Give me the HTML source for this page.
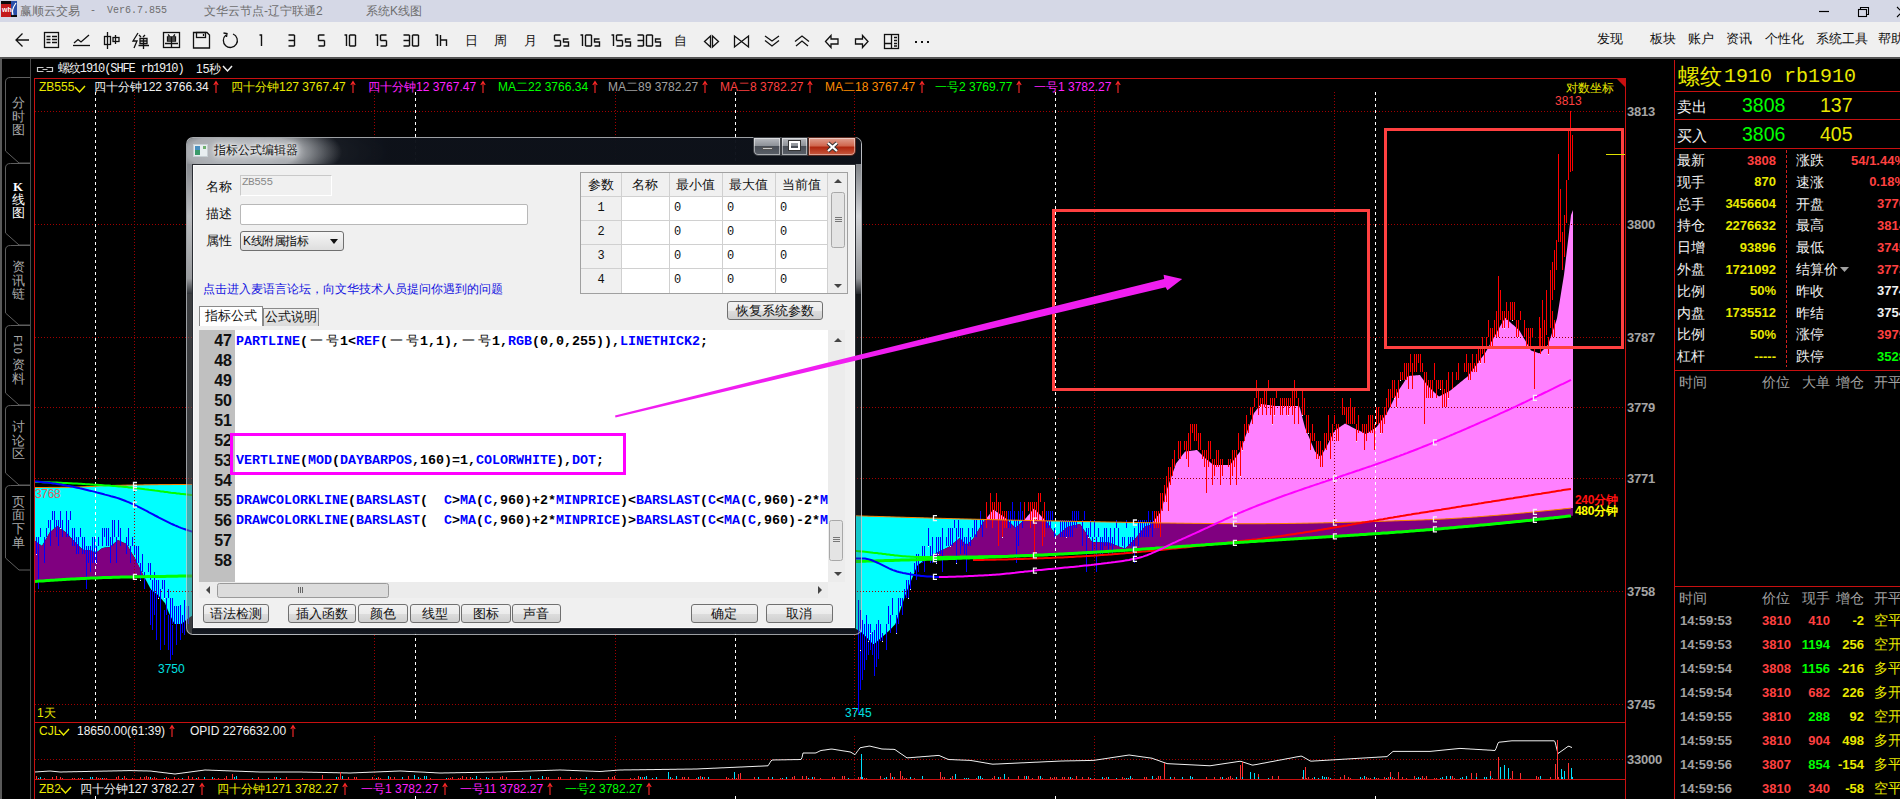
<!DOCTYPE html><html><head><meta charset="utf-8"><style>
*{margin:0;padding:0;box-sizing:border-box}
html,body{width:1900px;height:799px;overflow:hidden;background:#000;font-family:"Liberation Sans",sans-serif;position:relative}
.a{position:absolute;white-space:nowrap}
svg{position:absolute;left:0;top:0}
</style></head><body>

<div class="a" style="left:0;top:0;width:1900px;height:22px;background:#d5d8e6"></div>
<div class="a" style="left:0;top:22px;width:1900px;height:35px;background:#f0f0f0"></div>
<div class="a" style="left:0;top:57px;width:1900px;height:2px;background:#555"></div>
<div class="a" style="left:0;top:57px;width:2px;height:742px;background:#5a5a5a"></div>
<svg width="20" height="20" style="left:1px;top:1px"><rect x="0" y="0" width="16" height="16" fill="#0a0a0a"/>
<rect x="0" y="3" width="10" height="13" fill="#c41a1a"/><rect x="10" y="0" width="6" height="14" fill="#2a4fa8"/>
<text x="1" y="11" font-size="7" font-weight="bold" fill="#fff" font-family="Liberation Sans">wh</text>
<path d="M12 14 C10 9 13 5 15 2" stroke="#fff" stroke-width="1.2" fill="none"/></svg>
<div class="a" style="left:20px;top:3.0px;line-height:16px;font-size:12px;color:#6e6e6e;font-family:'Liberation Sans', sans-serif;font-weight:normal;">赢顺云交易</div>
<div class="a" style="left:90px;top:4.0px;line-height:14px;font-size:10px;color:#6e6e6e;font-family:'Liberation Mono', monospace;font-weight:normal;">-</div>
<div class="a" style="left:107px;top:4.0px;line-height:14px;font-size:10px;color:#6e6e6e;font-family:'Liberation Mono', monospace;font-weight:normal;">Ver6.7.855</div>
<div class="a" style="left:204px;top:3.0px;line-height:16px;font-size:12px;color:#6e6e6e;font-family:'Liberation Sans', sans-serif;font-weight:normal;">文华云节点-辽宁联通2</div>
<div class="a" style="left:366px;top:3.0px;line-height:16px;font-size:12px;color:#6e6e6e;font-family:'Liberation Sans', sans-serif;font-weight:normal;">系统K线图</div>
<svg width="90" height="22" style="left:1810px;top:0">
<line x1="9" y1="11.5" x2="19" y2="11.5" stroke="#000" stroke-width="1.2"/>
<rect x="48.5" y="9.5" width="8" height="7" fill="none" stroke="#000" stroke-width="1.1"/>
<path d="M50.5 9.5 V7.5 H58.5 V14.5 H56.5" fill="none" stroke="#000" stroke-width="1.1"/>
<path d="M87 7 L97 17 M97 7 L87 17" stroke="#000" stroke-width="1.1"/>
</svg>
<svg width="960" height="57" style="left:0;top:0"><path d="M16 40 H29 M22.5 33.5 L16 40 L22.5 46.5" stroke="#111" stroke-width="1.3" fill="none"/><rect x="44.5" y="32.5" width="14" height="15" stroke="#111" stroke-width="1.3" fill="none"/><path d="M46.5 36.5h4 M52 36.5h5 M46.5 39.5h4 M52 39.5h5 M46.5 42.5h4 M52 42.5h5" stroke="#111" stroke-width="1.3" fill="none"/><path d="M74 43 L78 39.5 L81 42 L89 35" stroke="#111" stroke-width="1.3" fill="none"/><path d="M73 45.5 H90" stroke="#111" stroke-width="1.3" fill="none"/><path d="M107.5 32 V49 M115.5 35 V44" stroke="#111" stroke-width="1.3" fill="none"/><rect x="104.5" y="36.5" width="6" height="8" stroke="#111" stroke-width="1.3" fill="none"/><rect x="113" y="37.5" width="6" height="4" stroke="#111" stroke-width="1.3" fill="none"/><path d="M138 33 L133 41 H137 L134 48" stroke="#111" stroke-width="1.3" fill="none"/><path d="M139 35 L141 37 M145 35 L143 37 M140 38.5h7v5h-7z M140 41h7 M143.5 38.5V49 M138.5 45.5H149" stroke="#111" stroke-width="1.3" fill="none"/><rect x="163.5" y="32.5" width="16" height="15" stroke="#111" stroke-width="1.3" fill="none"/><path d="M168 34.5 L169.5 36 M175 34.5 L173.5 36 M167.5 37h8v4h-8z M167.5 39h8 M171.5 37v10 M165 43.5h13" stroke="#111" stroke-width="1.3" fill="none"/><path d="M193.5 32.5 H207 L209.5 35 V48 H193.5 Z" stroke="#111" stroke-width="1.3" fill="none"/><rect x="196.5" y="32.5" width="9" height="5" stroke="#111" stroke-width="1.3" fill="none"/><path d="M203.5 34v2" stroke="#111" stroke-width="1.3" fill="none"/><path d="M226 35 A7 7 0 1 0 233 34" stroke="#111" stroke-width="1.3" fill="none"/><path d="M223.5 33 L227 33.5 L226.5 37" stroke="#111" stroke-width="1.3" fill="none"/></svg>
<svg width="960" height="57" style="left:0;top:0"><path d="M259.5 35 H261.5 V46M288.5 35 H294.5M294.5 35 V40.5M294.5 40.5 V46M288.5 46 H294.5M288.5 40.5 H294.5M318.5 35 H324.5M318.5 35 V40.5M318.5 40.5 H324.5M324.5 40.5 V46M318.5 46 H324.5M344.5 35 H346.5 V46M349.5 35 H355.5M355.5 35 V40.5M355.5 40.5 V46M349.5 46 H355.5M349.5 40.5 V46M349.5 35 V40.5M375.5 35 H377.5 V46M380.5 35 H386.5M380.5 35 V40.5M380.5 40.5 H386.5M386.5 40.5 V46M380.5 46 H386.5M403.5 35 H409.5M409.5 35 V40.5M409.5 40.5 V46M403.5 46 H409.5M403.5 40.5 H409.5M412.5 35 H418.5M418.5 35 V40.5M418.5 40.5 V46M412.5 46 H418.5M412.5 40.5 V46M412.5 35 V40.5M435.5 35 H437.5 V46M440.5 35 V46 M440.5 40 H446.5 V46M554.5 35 H560.5M554.5 35 V40.5M554.5 40.5 H560.5M560.5 40.5 V46M554.5 46 H560.5M568.5 39 H563.5 V42 H568.5 V46 H563.5M580.5 35 H582.5 V46M585.5 35 H591.5M591.5 35 V40.5M591.5 40.5 V46M585.5 46 H591.5M585.5 40.5 V46M585.5 35 V40.5M599.5 39 H594.5 V42 H599.5 V46 H594.5M611.5 35 H613.5 V46M616.5 35 H622.5M616.5 35 V40.5M616.5 40.5 H622.5M622.5 40.5 V46M616.5 46 H622.5M630.5 39 H625.5 V42 H630.5 V46 H625.5M637.5 35 H643.5M643.5 35 V40.5M643.5 40.5 V46M637.5 46 H643.5M637.5 40.5 H643.5M646.5 35 H652.5M652.5 35 V40.5M652.5 40.5 V46M646.5 46 H652.5M646.5 40.5 V46M646.5 35 V40.5M660.5 39 H655.5 V42 H660.5 V46 H655.5" stroke="#111" stroke-width="1.4" fill="none"/></svg>
<div class="a" style="left:465px;top:31.5px;line-height:17px;font-size:13px;color:#111;font-family:'Liberation Sans', sans-serif;font-weight:normal;">日</div>
<div class="a" style="left:494px;top:31.5px;line-height:17px;font-size:13px;color:#111;font-family:'Liberation Sans', sans-serif;font-weight:normal;">周</div>
<div class="a" style="left:524px;top:31.5px;line-height:17px;font-size:13px;color:#111;font-family:'Liberation Sans', sans-serif;font-weight:normal;">月</div>
<div class="a" style="left:674px;top:31.5px;line-height:17px;font-size:13px;color:#111;font-family:'Liberation Sans', sans-serif;font-weight:normal;">自</div>
<svg width="960" height="57" style="left:0;top:0"><path d="M710.5 36 L704.5 41.5 L710.5 47 Z M712.5 36 L718.5 41.5 L712.5 47 Z" stroke="#111" stroke-width="1.3" fill="none"/><path d="M734.5 36 V47 L741.5 41.5 Z M748.5 36 V47 L741.5 41.5 Z" stroke="#111" stroke-width="1.3" fill="none"/><path d="M765 36 L772 41 L779 36 M765 40.5 L772 46 L779 40.5" stroke="#111" stroke-width="1.3" fill="none"/><path d="M795 41.5 L802 36 L809 41.5 M796 46 L802 41 L808 46" stroke="#111" stroke-width="1.3" fill="none"/><path d="M825.5 41.5 L831 35.5 V39 H838 V44 H831 V47.5 Z" stroke="#111" stroke-width="1.3" fill="none"/><path d="M868 41.5 L862.5 35.5 V39 H855.5 V44 H862.5 V47.5 Z" stroke="#111" stroke-width="1.3" fill="none"/><rect x="884.5" y="34.5" width="14" height="14" stroke="#111" stroke-width="1.3" fill="none"/><path d="M891.5 34.5 V48.5 M884.5 43.5 H891.5 M894 37.5h3 M894 40.5h3 M894 43.5h3 M894 46h3" stroke="#111" stroke-width="1.3" fill="none"/><rect x="915" y="41" width="2" height="2" fill="#111"/><rect x="921" y="41" width="2" height="2" fill="#111"/><rect x="927" y="41" width="2" height="2" fill="#111"/></svg>
<div class="a" style="left:1597px;top:30.75px;line-height:16.5px;font-size:12.5px;color:#111;font-family:'Liberation Sans', sans-serif;font-weight:normal;">发现</div>
<div class="a" style="left:1650px;top:30.75px;line-height:16.5px;font-size:12.5px;color:#111;font-family:'Liberation Sans', sans-serif;font-weight:normal;">板块</div>
<div class="a" style="left:1688px;top:30.75px;line-height:16.5px;font-size:12.5px;color:#111;font-family:'Liberation Sans', sans-serif;font-weight:normal;">账户</div>
<div class="a" style="left:1726px;top:30.75px;line-height:16.5px;font-size:12.5px;color:#111;font-family:'Liberation Sans', sans-serif;font-weight:normal;">资讯</div>
<div class="a" style="left:1765px;top:30.75px;line-height:16.5px;font-size:12.5px;color:#111;font-family:'Liberation Sans', sans-serif;font-weight:normal;">个性化</div>
<div class="a" style="left:1816px;top:30.75px;line-height:16.5px;font-size:12.5px;color:#111;font-family:'Liberation Sans', sans-serif;font-weight:normal;">系统工具</div>
<div class="a" style="left:1878px;top:30.75px;line-height:16.5px;font-size:12.5px;color:#111;font-family:'Liberation Sans', sans-serif;font-weight:normal;">帮助</div>
<svg width="34" height="799" style="left:0;top:0"><path d="M5.5 151 V82 Q5.5 77.5 10.5 77.5 H30.5 V163 M5.5 151 L19 163 H30.5" stroke="#5e5e5e" stroke-width="1" fill="none"/><path d="M5.5 233 V168 Q5.5 163.5 10.5 163.5 H30.5 V245 M5.5 233 L19 245 H30.5" stroke="#5e5e5e" stroke-width="1" fill="none"/><path d="M5.5 313 V250 Q5.5 245.5 10.5 245.5 H30.5 V325 M5.5 313 L19 325 H30.5" stroke="#5e5e5e" stroke-width="1" fill="none"/><path d="M5.5 393 V330 Q5.5 325.5 10.5 325.5 H30.5 V405 M5.5 393 L19 405 H30.5" stroke="#5e5e5e" stroke-width="1" fill="none"/><path d="M5.5 473 V410 Q5.5 405.5 10.5 405.5 H30.5 V485 M5.5 473 L19 485 H30.5" stroke="#5e5e5e" stroke-width="1" fill="none"/><path d="M5.5 558 V490 Q5.5 485.5 10.5 485.5 H30.5 V570 M5.5 558 L19 570 H30.5" stroke="#5e5e5e" stroke-width="1" fill="none"/></svg>
<div class="a" style="left:29px;top:164px;width:3px;height:80px;background:#000"></div>
<div class="a" style="left:30px;top:59px;width:1px;height:740px;background:#4a4a4a"></div>
<div class="a" style="left:-182px;width:400px;text-align:center;top:96.0px;line-height:14px;font-size:13px;color:#a8a8a8;font-family:'Liberation Sans', sans-serif;font-weight:normal;">分</div><div class="a" style="left:-182px;width:400px;text-align:center;top:109.7px;line-height:14px;font-size:13px;color:#a8a8a8;font-family:'Liberation Sans', sans-serif;font-weight:normal;">时</div><div class="a" style="left:-182px;width:400px;text-align:center;top:123.4px;line-height:14px;font-size:13px;color:#a8a8a8;font-family:'Liberation Sans', sans-serif;font-weight:normal;">图</div>
<div class="a" style="left:-182px;width:400px;text-align:center;top:179.5px;line-height:14px;font-size:13px;color:#fff;font-family:'Liberation Serif', serif;font-weight:bold;">K</div>
<div class="a" style="left:-182px;width:400px;text-align:center;top:192.5px;line-height:14px;font-size:13px;color:#fff;font-family:'Liberation Sans', sans-serif;font-weight:normal;">线</div><div class="a" style="left:-182px;width:400px;text-align:center;top:206.2px;line-height:14px;font-size:13px;color:#fff;font-family:'Liberation Sans', sans-serif;font-weight:normal;">图</div>
<div class="a" style="left:-182px;width:400px;text-align:center;top:260.0px;line-height:14px;font-size:13px;color:#a8a8a8;font-family:'Liberation Sans', sans-serif;font-weight:normal;">资</div><div class="a" style="left:-182px;width:400px;text-align:center;top:273.7px;line-height:14px;font-size:13px;color:#a8a8a8;font-family:'Liberation Sans', sans-serif;font-weight:normal;">讯</div><div class="a" style="left:-182px;width:400px;text-align:center;top:287.4px;line-height:14px;font-size:13px;color:#a8a8a8;font-family:'Liberation Sans', sans-serif;font-weight:normal;">链</div>
<div class="a" style="left:11px;top:335px;width:14px;height:18px;writing-mode:vertical-rl;font-size:11px;line-height:14px;color:#a8a8a8;font-family:'Liberation Sans', sans-serif">F10</div>
<div class="a" style="left:-182px;width:400px;text-align:center;top:358.0px;line-height:14px;font-size:13px;color:#a8a8a8;font-family:'Liberation Sans', sans-serif;font-weight:normal;">资</div><div class="a" style="left:-182px;width:400px;text-align:center;top:371.7px;line-height:14px;font-size:13px;color:#a8a8a8;font-family:'Liberation Sans', sans-serif;font-weight:normal;">料</div>
<div class="a" style="left:-182px;width:400px;text-align:center;top:420.0px;line-height:14px;font-size:13px;color:#a8a8a8;font-family:'Liberation Sans', sans-serif;font-weight:normal;">讨</div><div class="a" style="left:-182px;width:400px;text-align:center;top:433.7px;line-height:14px;font-size:13px;color:#a8a8a8;font-family:'Liberation Sans', sans-serif;font-weight:normal;">论</div><div class="a" style="left:-182px;width:400px;text-align:center;top:447.4px;line-height:14px;font-size:13px;color:#a8a8a8;font-family:'Liberation Sans', sans-serif;font-weight:normal;">区</div>
<div class="a" style="left:-182px;width:400px;text-align:center;top:494.5px;line-height:14px;font-size:13px;color:#a8a8a8;font-family:'Liberation Sans', sans-serif;font-weight:normal;">页</div><div class="a" style="left:-182px;width:400px;text-align:center;top:508.20000000000005px;line-height:14px;font-size:13px;color:#a8a8a8;font-family:'Liberation Sans', sans-serif;font-weight:normal;">面</div><div class="a" style="left:-182px;width:400px;text-align:center;top:521.9px;line-height:14px;font-size:13px;color:#a8a8a8;font-family:'Liberation Sans', sans-serif;font-weight:normal;">下</div><div class="a" style="left:-182px;width:400px;text-align:center;top:535.6px;line-height:14px;font-size:13px;color:#a8a8a8;font-family:'Liberation Sans', sans-serif;font-weight:normal;">单</div>
<svg width="1900" height="799" style="left:0;top:0"><path d="M35.0 487.5 L36.0 487.5 L37.0 487.5 L38.0 487.5 L39.0 487.5 L40.0 487.5 L41.0 487.5 L42.0 487.5 L43.0 487.5 L44.0 487.5 L45.0 487.5 L46.0 487.5 L47.0 487.5 L48.0 487.5 L49.0 487.4 L50.0 487.4 L51.0 487.4 L52.0 487.4 L53.0 487.4 L54.0 487.4 L55.0 487.4 L56.0 487.4 L57.0 487.4 L58.0 487.4 L59.0 487.4 L60.0 487.3 L61.0 487.3 L62.0 487.3 L63.0 487.3 L64.0 487.3 L65.0 487.3 L66.0 487.3 L67.0 487.3 L68.0 487.2 L69.0 487.2 L70.0 487.2 L71.0 487.2 L72.0 487.1 L73.0 487.1 L74.0 487.1 L75.0 487.1 L76.0 487.0 L77.0 487.0 L78.0 487.0 L79.0 486.9 L80.0 486.9 L81.0 486.8 L82.0 486.8 L83.0 486.8 L84.0 486.7 L85.0 486.7 L86.0 486.7 L87.0 486.6 L88.0 486.6 L89.0 486.5 L90.0 486.5 L91.0 486.5 L92.0 486.4 L93.0 486.4 L94.0 486.3 L95.0 486.3 L96.0 486.2 L97.0 486.1 L98.0 486.1 L99.0 486.0 L100.0 486.0 L101.0 485.9 L102.0 485.8 L103.0 485.8 L104.0 485.7 L105.0 485.7 L106.0 485.6 L107.0 485.6 L108.0 485.6 L109.0 485.5 L110.0 485.5 L111.0 485.5 L112.0 485.5 L113.0 485.4 L114.0 485.4 L115.0 485.4 L116.0 485.4 L117.0 485.3 L118.0 485.3 L119.0 485.3 L120.0 485.3 L121.0 485.3 L122.0 485.2 L123.0 485.2 L124.0 485.2 L125.0 485.2 L126.0 485.2 L127.0 485.1 L128.0 485.1 L129.0 485.1 L130.0 485.1 L131.0 485.1 L132.0 485.0 L133.0 485.0 L134.0 485.0 L135.0 485.0 L136.0 485.0 L137.0 485.0 L138.0 484.9 L139.0 484.9 L140.0 484.9 L141.0 484.9 L142.0 484.9 L143.0 484.9 L144.0 484.8 L145.0 484.8 L146.0 484.8 L147.0 484.8 L148.0 484.8 L149.0 484.8 L150.0 484.8 L151.0 484.7 L152.0 484.7 L153.0 484.7 L154.0 484.7 L155.0 484.7 L156.0 484.7 L157.0 484.7 L158.0 484.7 L159.0 484.6 L160.0 484.6 L161.0 484.6 L162.0 484.6 L163.0 484.6 L164.0 484.6 L165.0 484.6 L166.0 484.6 L167.0 484.6 L168.0 484.6 L169.0 484.6 L170.0 484.6 L171.0 484.6 L172.0 484.5 L173.0 484.5 L174.0 484.5 L175.0 484.5 L176.0 484.5 L177.0 484.5 L178.0 484.5 L179.0 484.5 L180.0 484.5 L181.0 484.5 L182.0 484.5 L183.0 484.5 L184.0 484.5 L185.0 484.5 L186.0 484.5 L187.0 484.5 L188.0 484.5 L189.0 484.5 L190.0 484.5 L191.0 484.5 L192.0 484.5 L193.0 484.5 L194.0 484.5 L195.0 484.5 L196.0 484.5 L197.0 484.5 L198.0 484.5 L199.0 484.5 L200.0 484.5 L201.0 484.5 L202.0 484.5 L203.0 484.5 L204.0 484.5 L205.0 484.6 L206.0 484.6 L207.0 484.6 L208.0 484.6 L209.0 484.6 L210.0 484.6 L211.0 484.6 L212.0 484.6 L213.0 484.6 L214.0 484.6 L215.0 484.6 L216.0 484.6 L217.0 484.6 L218.0 484.6 L219.0 484.7 L220.0 484.7 L221.0 484.7 L222.0 484.7 L223.0 484.7 L224.0 484.7 L225.0 484.7 L226.0 484.7 L227.0 484.7 L228.0 484.8 L229.0 484.8 L230.0 484.8 L231.0 484.8 L232.0 484.8 L233.0 484.8 L234.0 484.8 L235.0 484.9 L236.0 484.9 L237.0 484.9 L238.0 484.9 L239.0 484.9 L240.0 484.9 L241.0 484.9 L242.0 485.0 L243.0 485.0 L244.0 485.0 L245.0 485.0 L246.0 485.0 L247.0 485.0 L248.0 485.1 L249.0 485.1 L250.0 485.1 L251.0 485.1 L252.0 485.1 L253.0 485.2 L254.0 485.2 L255.0 485.2 L256.0 485.2 L257.0 485.2 L258.0 485.3 L259.0 485.3 L260.0 485.3 L261.0 485.3 L262.0 485.3 L263.0 485.4 L264.0 485.4 L265.0 485.4 L266.0 485.4 L267.0 485.5 L268.0 485.5 L269.0 485.5 L270.0 485.5 L271.0 485.5 L272.0 485.6 L273.0 485.6 L274.0 485.6 L275.0 485.6 L276.0 485.7 L277.0 485.7 L278.0 485.7 L279.0 485.7 L280.0 485.8 L281.0 485.8 L282.0 485.8 L283.0 485.9 L284.0 485.9 L285.0 485.9 L286.0 485.9 L287.0 486.0 L288.0 486.0 L289.0 486.0 L290.0 486.0 L291.0 486.1 L292.0 486.1 L293.0 486.1 L294.0 486.2 L295.0 486.2 L296.0 486.2 L297.0 486.3 L298.0 486.3 L299.0 486.3 L300.0 486.3 L301.0 486.4 L302.0 486.4 L303.0 486.4 L304.0 486.5 L305.0 486.5 L306.0 486.5 L307.0 486.6 L308.0 486.6 L309.0 486.6 L310.0 486.7 L311.0 486.7 L312.0 486.7 L313.0 486.8 L314.0 486.8 L315.0 486.8 L316.0 486.9 L317.0 486.9 L318.0 486.9 L319.0 487.0 L320.0 487.0 L321.0 487.0 L322.0 487.1 L323.0 487.1 L324.0 487.2 L325.0 487.2 L326.0 487.2 L327.0 487.3 L328.0 487.3 L329.0 487.3 L330.0 487.4 L331.0 487.4 L332.0 487.5 L333.0 487.5 L334.0 487.5 L335.0 487.6 L336.0 487.6 L337.0 487.6 L338.0 487.7 L339.0 487.7 L340.0 487.8 L341.0 487.8 L342.0 487.8 L343.0 487.9 L344.0 487.9 L345.0 488.0 L346.0 488.0 L347.0 488.0 L348.0 488.1 L349.0 488.1 L350.0 488.2 L351.0 488.2 L352.0 488.2 L353.0 488.3 L354.0 488.3 L355.0 488.4 L356.0 488.4 L357.0 488.5 L358.0 488.5 L359.0 488.5 L360.0 488.6 L361.0 488.6 L362.0 488.7 L363.0 488.7 L364.0 488.8 L365.0 488.8 L366.0 488.9 L367.0 488.9 L368.0 488.9 L369.0 489.0 L370.0 489.0 L371.0 489.1 L372.0 489.1 L373.0 489.2 L374.0 489.2 L375.0 489.3 L376.0 489.3 L377.0 489.3 L378.0 489.4 L379.0 489.4 L380.0 489.5 L381.0 489.5 L382.0 489.6 L383.0 489.6 L384.0 489.7 L385.0 489.7 L386.0 489.8 L387.0 489.8 L388.0 489.9 L389.0 489.9 L390.0 490.0 L391.0 490.0 L392.0 490.1 L393.0 490.1 L394.0 490.2 L395.0 490.2 L396.0 490.3 L397.0 490.3 L398.0 490.4 L399.0 490.4 L400.0 490.5 L401.0 490.5 L402.0 490.6 L403.0 490.6 L404.0 490.7 L405.0 490.7 L406.0 490.8 L407.0 490.8 L408.0 490.9 L409.0 490.9 L410.0 491.0 L411.0 491.0 L412.0 491.1 L413.0 491.1 L414.0 491.2 L415.0 491.2 L416.0 491.3 L417.0 491.3 L418.0 491.4 L419.0 491.4 L420.0 491.5 L421.0 491.5 L422.0 491.6 L423.0 491.6 L424.0 491.7 L425.0 491.7 L426.0 491.8 L427.0 491.8 L428.0 491.9 L429.0 492.0 L430.0 492.0 L431.0 492.1 L432.0 492.1 L433.0 492.2 L434.0 492.2 L435.0 492.3 L436.0 492.3 L437.0 492.4 L438.0 492.4 L439.0 492.5 L440.0 492.6 L441.0 492.6 L442.0 492.7 L443.0 492.7 L444.0 492.8 L445.0 492.8 L446.0 492.9 L447.0 492.9 L448.0 493.0 L449.0 493.1 L450.0 493.1 L451.0 493.2 L452.0 493.2 L453.0 493.3 L454.0 493.3 L455.0 493.4 L456.0 493.4 L457.0 493.5 L458.0 493.6 L459.0 493.6 L460.0 493.7 L461.0 493.7 L462.0 493.8 L463.0 493.8 L464.0 493.9 L465.0 494.0 L466.0 494.0 L467.0 494.1 L468.0 494.1 L469.0 494.2 L470.0 494.3 L471.0 494.3 L472.0 494.4 L473.0 494.4 L474.0 494.5 L475.0 494.5 L476.0 494.6 L477.0 494.7 L478.0 494.7 L479.0 494.8 L480.0 494.8 L481.0 494.9 L482.0 495.0 L483.0 495.0 L484.0 495.1 L485.0 495.1 L486.0 495.2 L487.0 495.3 L488.0 495.3 L489.0 495.4 L490.0 495.4 L491.0 495.5 L492.0 495.6 L493.0 495.6 L494.0 495.7 L495.0 495.7 L496.0 495.8 L497.0 495.9 L498.0 495.9 L499.0 496.0 L500.0 496.0 L501.0 496.1 L502.0 496.2 L503.0 496.2 L504.0 496.3 L505.0 496.3 L506.0 496.4 L507.0 496.5 L508.0 496.5 L509.0 496.6 L510.0 496.6 L511.0 496.7 L512.0 496.8 L513.0 496.8 L514.0 496.9 L515.0 497.0 L516.0 497.0 L517.0 497.1 L518.0 497.1 L519.0 497.2 L520.0 497.3 L521.0 497.3 L522.0 497.4 L523.0 497.4 L524.0 497.5 L525.0 497.6 L526.0 497.6 L527.0 497.7 L528.0 497.8 L529.0 497.8 L530.0 497.9 L531.0 497.9 L532.0 498.0 L533.0 498.1 L534.0 498.1 L535.0 498.2 L536.0 498.3 L537.0 498.3 L538.0 498.4 L539.0 498.4 L540.0 498.5 L541.0 498.6 L542.0 498.6 L543.0 498.7 L544.0 498.8 L545.0 498.8 L546.0 498.9 L547.0 498.9 L548.0 499.0 L549.0 499.1 L550.0 499.1 L551.0 499.2 L552.0 499.3 L553.0 499.3 L554.0 499.4 L555.0 499.4 L556.0 499.5 L557.0 499.6 L558.0 499.6 L559.0 499.7 L560.0 499.8 L561.0 499.8 L562.0 499.9 L563.0 499.9 L564.0 500.0 L565.0 500.1 L566.0 500.1 L567.0 500.2 L568.0 500.3 L569.0 500.3 L570.0 500.4 L571.0 500.5 L572.0 500.5 L573.0 500.6 L574.0 500.6 L575.0 500.7 L576.0 500.8 L577.0 500.8 L578.0 500.9 L579.0 501.0 L580.0 501.0 L581.0 501.1 L582.0 501.2 L583.0 501.2 L584.0 501.3 L585.0 501.3 L586.0 501.4 L587.0 501.5 L588.0 501.5 L589.0 501.6 L590.0 501.7 L591.0 501.7 L592.0 501.8 L593.0 501.8 L594.0 501.9 L595.0 502.0 L596.0 502.0 L597.0 502.1 L598.0 502.2 L599.0 502.2 L600.0 502.3 L601.0 502.4 L602.0 502.4 L603.0 502.5 L604.0 502.5 L605.0 502.6 L606.0 502.7 L607.0 502.7 L608.0 502.8 L609.0 502.9 L610.0 502.9 L611.0 503.0 L612.0 503.0 L613.0 503.1 L614.0 503.2 L615.0 503.2 L616.0 503.3 L617.0 503.4 L618.0 503.4 L619.0 503.5 L620.0 503.6 L621.0 503.6 L622.0 503.7 L623.0 503.7 L624.0 503.8 L625.0 503.9 L626.0 503.9 L627.0 504.0 L628.0 504.1 L629.0 504.1 L630.0 504.2 L631.0 504.2 L632.0 504.3 L633.0 504.4 L634.0 504.4 L635.0 504.5 L636.0 504.6 L637.0 504.6 L638.0 504.7 L639.0 504.7 L640.0 504.8 L641.0 504.9 L642.0 504.9 L643.0 505.0 L644.0 505.0 L645.0 505.1 L646.0 505.2 L647.0 505.2 L648.0 505.3 L649.0 505.4 L650.0 505.4 L651.0 505.5 L652.0 505.5 L653.0 505.6 L654.0 505.7 L655.0 505.7 L656.0 505.8 L657.0 505.8 L658.0 505.9 L659.0 506.0 L660.0 506.0 L661.0 506.1 L662.0 506.2 L663.0 506.2 L664.0 506.3 L665.0 506.3 L666.0 506.4 L667.0 506.5 L668.0 506.5 L669.0 506.6 L670.0 506.6 L671.0 506.7 L672.0 506.8 L673.0 506.8 L674.0 506.9 L675.0 506.9 L676.0 507.0 L677.0 507.1 L678.0 507.1 L679.0 507.2 L680.0 507.2 L681.0 507.3 L682.0 507.4 L683.0 507.4 L684.0 507.5 L685.0 507.5 L686.0 507.6 L687.0 507.6 L688.0 507.7 L689.0 507.8 L690.0 507.8 L691.0 507.9 L692.0 507.9 L693.0 508.0 L694.0 508.1 L695.0 508.1 L696.0 508.2 L697.0 508.2 L698.0 508.3 L699.0 508.4 L700.0 508.4 L701.0 508.5 L702.0 508.5 L703.0 508.6 L704.0 508.6 L705.0 508.7 L706.0 508.8 L707.0 508.8 L708.0 508.9 L709.0 508.9 L710.0 509.0 L711.0 509.0 L712.0 509.1 L713.0 509.2 L714.0 509.2 L715.0 509.3 L716.0 509.3 L717.0 509.4 L718.0 509.4 L719.0 509.5 L720.0 509.5 L721.0 509.6 L722.0 509.7 L723.0 509.7 L724.0 509.8 L725.0 509.8 L726.0 509.9 L727.0 509.9 L728.0 510.0 L729.0 510.0 L730.0 510.1 L731.0 510.2 L732.0 510.2 L733.0 510.3 L734.0 510.3 L735.0 510.4 L736.0 510.4 L737.0 510.5 L738.0 510.5 L739.0 510.6 L740.0 510.6 L741.0 510.7 L742.0 510.7 L743.0 510.8 L744.0 510.9 L745.0 510.9 L746.0 511.0 L747.0 511.0 L748.0 511.1 L749.0 511.1 L750.0 511.2 L751.0 511.2 L752.0 511.3 L753.0 511.3 L754.0 511.4 L755.0 511.4 L756.0 511.5 L757.0 511.5 L758.0 511.6 L759.0 511.6 L760.0 511.7 L761.0 511.7 L762.0 511.8 L763.0 511.8 L764.0 511.9 L765.0 511.9 L766.0 512.0 L767.0 512.0 L768.0 512.1 L769.0 512.1 L770.0 512.2 L771.0 512.2 L772.0 512.3 L773.0 512.3 L774.0 512.4 L775.0 512.4 L776.0 512.5 L777.0 512.5 L778.0 512.6 L779.0 512.6 L780.0 512.7 L781.0 512.7 L782.0 512.8 L783.0 512.8 L784.0 512.9 L785.0 512.9 L786.0 512.9 L787.0 513.0 L788.0 513.0 L789.0 513.1 L790.0 513.1 L791.0 513.2 L792.0 513.2 L793.0 513.3 L794.0 513.3 L795.0 513.4 L796.0 513.4 L797.0 513.5 L798.0 513.5 L799.0 513.5 L800.0 513.6 L801.0 513.6 L802.0 513.7 L803.0 513.7 L804.0 513.8 L805.0 513.8 L806.0 513.8 L807.0 513.9 L808.0 513.9 L809.0 514.0 L810.0 514.0 L811.0 514.1 L812.0 514.1 L813.0 514.1 L814.0 514.2 L815.0 514.2 L816.0 514.3 L817.0 514.3 L818.0 514.4 L819.0 514.4 L820.0 514.4 L821.0 514.5 L822.0 514.5 L823.0 514.6 L824.0 514.6 L825.0 514.6 L826.0 514.7 L827.0 514.7 L828.0 514.8 L829.0 514.8 L830.0 514.8 L831.0 514.9 L832.0 514.9 L833.0 514.9 L834.0 515.0 L835.0 515.0 L836.0 515.1 L837.0 515.1 L838.0 515.1 L839.0 515.2 L840.0 515.2 L841.0 515.2 L842.0 515.3 L843.0 515.3 L844.0 515.4 L845.0 515.4 L846.0 515.4 L847.0 515.5 L848.0 515.5 L849.0 515.5 L850.0 515.6 L851.0 515.6 L852.0 515.6 L853.0 515.7 L854.0 515.7 L855.0 515.7 L856.0 515.8 L857.0 515.8 L858.0 515.8 L859.0 515.9 L860.0 515.9 L861.0 515.9 L862.0 516.0 L863.0 516.0 L864.0 516.0 L865.0 516.1 L866.0 516.1 L867.0 516.1 L868.0 516.2 L869.0 516.2 L870.0 516.2 L871.0 516.3 L872.0 516.3 L873.0 516.3 L874.0 516.3 L875.0 516.4 L876.0 516.4 L877.0 516.4 L878.0 516.5 L879.0 516.5 L880.0 516.5 L881.0 516.6 L882.0 516.6 L883.0 516.6 L884.0 516.7 L885.0 516.7 L886.0 516.7 L887.0 516.8 L888.0 516.8 L889.0 516.8 L890.0 516.8 L891.0 516.9 L892.0 516.9 L893.0 516.9 L894.0 517.0 L895.0 517.0 L896.0 517.0 L897.0 517.1 L898.0 517.1 L899.0 517.1 L900.0 517.1 L901.0 517.2 L902.0 517.2 L903.0 517.2 L904.0 517.3 L905.0 517.3 L906.0 517.3 L907.0 517.4 L908.0 517.4 L909.0 517.4 L910.0 517.4 L911.0 517.5 L912.0 517.5 L913.0 517.5 L914.0 517.6 L915.0 517.6 L916.0 517.6 L917.0 517.7 L918.0 517.7 L919.0 517.7 L920.0 517.7 L921.0 517.8 L922.0 517.8 L923.0 517.8 L924.0 517.9 L925.0 517.9 L926.0 517.9 L927.0 517.9 L928.0 518.0 L929.0 518.0 L930.0 518.0 L931.0 518.1 L932.0 518.1 L933.0 518.1 L934.0 518.1 L935.0 518.2 L936.0 518.2 L937.0 518.2 L938.0 518.3 L939.0 518.3 L940.0 518.3 L941.0 518.3 L942.0 518.4 L943.0 518.4 L944.0 518.4 L945.0 518.4 L946.0 518.5 L947.0 518.5 L948.0 518.5 L949.0 518.6 L950.0 518.6 L951.0 518.6 L952.0 518.6 L953.0 518.7 L954.0 518.7 L955.0 518.7 L956.0 518.7 L957.0 518.8 L958.0 518.8 L959.0 518.8 L960.0 518.9 L961.0 518.9 L962.0 518.9 L963.0 518.9 L964.0 519.0 L965.0 519.0 L966.0 519.0 L967.0 519.0 L968.0 519.1 L969.0 519.1 L970.0 519.1 L971.0 519.1 L972.0 519.2 L973.0 519.2 L974.0 519.2 L975.0 519.2 L976.0 519.3 L977.0 519.3 L978.0 519.3 L979.0 519.3 L980.0 519.4 L981.0 519.4 L982.0 519.4 L983.0 519.4 L984.0 519.5 L985.0 519.5 L985.0 520.0 L984.0 521.3 L983.0 522.6 L982.0 524.3 L981.0 525.9 L980.0 527.5 L979.0 529.1 L978.0 530.7 L977.0 532.3 L976.0 534.0 L975.0 535.6 L974.0 537.2 L973.0 538.8 L972.0 539.8 L971.0 540.7 L970.0 541.7 L969.0 542.6 L968.0 543.6 L967.0 544.5 L966.0 544.5 L965.0 543.5 L964.0 542.4 L963.0 541.4 L962.0 540.4 L961.0 539.3 L960.0 538.3 L959.0 538.6 L958.0 539.4 L957.0 540.3 L956.0 541.1 L955.0 542.0 L954.0 542.8 L953.0 543.6 L952.0 544.5 L951.0 545.3 L950.0 546.2 L949.0 546.8 L948.0 547.3 L947.0 547.8 L946.0 548.3 L945.0 548.8 L944.0 549.3 L943.0 549.8 L942.0 550.3 L941.0 550.8 L940.0 551.3 L939.0 551.8 L938.0 552.3 L937.0 552.8 L936.0 553.3 L935.0 553.8 L934.0 554.3 L933.0 554.8 L932.0 555.5 L931.0 556.1 L930.0 556.8 L929.0 557.4 L928.0 558.1 L927.0 558.8 L926.0 559.4 L925.0 560.1 L924.0 560.7 L923.0 561.4 L922.0 562.0 L921.0 562.7 L920.0 563.4 L919.0 564.0 L918.0 564.7 L917.0 566.2 L916.0 568.7 L915.0 571.1 L914.0 573.6 L913.0 576.1 L912.0 578.5 L911.0 581.0 L910.0 583.4 L909.0 585.9 L908.0 588.3 L907.0 590.8 L906.0 593.3 L905.0 596.1 L904.0 599.0 L903.0 601.9 L902.0 604.9 L901.0 607.8 L900.0 610.8 L899.0 613.7 L898.0 616.6 L897.0 619.6 L896.0 622.5 L895.0 624.5 L894.0 625.6 L893.0 626.6 L892.0 627.7 L891.0 628.7 L890.0 629.7 L889.0 630.8 L888.0 631.7 L887.0 632.6 L886.0 633.5 L885.0 634.4 L884.0 635.3 L883.0 636.2 L882.0 637.0 L881.0 637.9 L880.0 638.8 L879.0 639.7 L878.0 640.6 L877.0 641.5 L876.0 642.4 L875.0 643.3 L874.0 644.1 L873.0 643.9 L872.0 642.9 L871.0 641.9 L870.0 640.8 L869.0 639.8 L868.0 638.8 L867.0 637.8 L866.0 636.8 L865.0 635.8 L864.0 634.7 L863.0 633.7 L862.0 632.7 L861.0 632.1 L860.0 631.4 L859.0 630.8 L858.0 630.1 L857.0 629.5 L856.0 628.9 L855.0 628.2 L854.0 627.6 L853.0 626.9 L852.0 626.3 L851.0 625.6 L850.0 625.0 L849.0 624.5 L848.0 624.0 L847.0 623.5 L846.0 623.0 L845.0 622.5 L844.0 622.0 L843.0 621.5 L842.0 621.0 L841.0 620.5 L840.0 620.0 L839.0 619.5 L838.0 619.0 L837.0 618.5 L836.0 618.0 L835.0 617.5 L834.0 617.0 L833.0 616.5 L832.0 616.0 L831.0 615.5 L830.0 615.0 L829.0 614.5 L828.0 614.0 L827.0 613.5 L826.0 613.0 L825.0 612.5 L824.0 612.0 L823.0 611.5 L822.0 611.0 L821.0 610.5 L820.0 610.0 L819.0 609.5 L818.0 609.0 L817.0 608.5 L816.0 608.0 L815.0 607.5 L814.0 607.0 L813.0 606.5 L812.0 606.0 L811.0 605.5 L810.0 605.0 L809.0 604.5 L808.0 604.0 L807.0 603.5 L806.0 603.0 L805.0 602.5 L804.0 602.0 L803.0 601.5 L802.0 601.0 L801.0 600.5 L800.0 600.0 L799.0 600.0 L798.0 599.9 L797.0 599.9 L796.0 599.8 L795.0 599.8 L794.0 599.7 L793.0 599.6 L792.0 599.6 L791.0 599.5 L790.0 599.5 L789.0 599.5 L788.0 599.4 L787.0 599.4 L786.0 599.3 L785.0 599.2 L784.0 599.2 L783.0 599.1 L782.0 599.1 L781.0 599.0 L780.0 599.0 L779.0 599.0 L778.0 598.9 L777.0 598.9 L776.0 598.8 L775.0 598.8 L774.0 598.7 L773.0 598.6 L772.0 598.6 L771.0 598.5 L770.0 598.5 L769.0 598.5 L768.0 598.4 L767.0 598.4 L766.0 598.3 L765.0 598.2 L764.0 598.2 L763.0 598.1 L762.0 598.1 L761.0 598.0 L760.0 598.0 L759.0 598.0 L758.0 597.9 L757.0 597.9 L756.0 597.8 L755.0 597.8 L754.0 597.7 L753.0 597.6 L752.0 597.6 L751.0 597.5 L750.0 597.5 L749.0 597.5 L748.0 597.4 L747.0 597.4 L746.0 597.3 L745.0 597.2 L744.0 597.2 L743.0 597.1 L742.0 597.1 L741.0 597.0 L740.0 597.0 L739.0 597.0 L738.0 596.9 L737.0 596.9 L736.0 596.8 L735.0 596.8 L734.0 596.7 L733.0 596.6 L732.0 596.6 L731.0 596.5 L730.0 596.5 L729.0 596.5 L728.0 596.4 L727.0 596.4 L726.0 596.3 L725.0 596.2 L724.0 596.2 L723.0 596.1 L722.0 596.1 L721.0 596.0 L720.0 596.0 L719.0 596.0 L718.0 595.9 L717.0 595.9 L716.0 595.8 L715.0 595.8 L714.0 595.7 L713.0 595.6 L712.0 595.6 L711.0 595.5 L710.0 595.5 L709.0 595.5 L708.0 595.4 L707.0 595.4 L706.0 595.3 L705.0 595.2 L704.0 595.2 L703.0 595.1 L702.0 595.1 L701.0 595.0 L700.0 595.0 L699.0 595.0 L698.0 594.9 L697.0 594.9 L696.0 594.8 L695.0 594.8 L694.0 594.7 L693.0 594.6 L692.0 594.6 L691.0 594.5 L690.0 594.5 L689.0 594.5 L688.0 594.4 L687.0 594.4 L686.0 594.3 L685.0 594.2 L684.0 594.2 L683.0 594.1 L682.0 594.1 L681.0 594.0 L680.0 594.0 L679.0 594.0 L678.0 593.9 L677.0 593.9 L676.0 593.8 L675.0 593.8 L674.0 593.7 L673.0 593.6 L672.0 593.6 L671.0 593.5 L670.0 593.5 L669.0 593.5 L668.0 593.4 L667.0 593.4 L666.0 593.3 L665.0 593.2 L664.0 593.2 L663.0 593.1 L662.0 593.1 L661.0 593.0 L660.0 593.0 L659.0 593.0 L658.0 592.9 L657.0 592.9 L656.0 592.8 L655.0 592.8 L654.0 592.7 L653.0 592.6 L652.0 592.6 L651.0 592.5 L650.0 592.5 L649.0 592.5 L648.0 592.4 L647.0 592.4 L646.0 592.3 L645.0 592.2 L644.0 592.2 L643.0 592.1 L642.0 592.1 L641.0 592.0 L640.0 592.0 L639.0 592.0 L638.0 591.9 L637.0 591.9 L636.0 591.8 L635.0 591.8 L634.0 591.7 L633.0 591.6 L632.0 591.6 L631.0 591.5 L630.0 591.5 L629.0 591.5 L628.0 591.4 L627.0 591.4 L626.0 591.3 L625.0 591.2 L624.0 591.2 L623.0 591.1 L622.0 591.1 L621.0 591.0 L620.0 591.0 L619.0 591.0 L618.0 590.9 L617.0 590.9 L616.0 590.8 L615.0 590.8 L614.0 590.7 L613.0 590.6 L612.0 590.6 L611.0 590.5 L610.0 590.5 L609.0 590.5 L608.0 590.4 L607.0 590.4 L606.0 590.3 L605.0 590.2 L604.0 590.2 L603.0 590.1 L602.0 590.1 L601.0 590.0 L600.0 590.0 L599.0 590.0 L598.0 590.1 L597.0 590.1 L596.0 590.2 L595.0 590.2 L594.0 590.3 L593.0 590.4 L592.0 590.4 L591.0 590.5 L590.0 590.5 L589.0 590.5 L588.0 590.6 L587.0 590.6 L586.0 590.7 L585.0 590.8 L584.0 590.8 L583.0 590.9 L582.0 590.9 L581.0 591.0 L580.0 591.0 L579.0 591.0 L578.0 591.1 L577.0 591.1 L576.0 591.2 L575.0 591.2 L574.0 591.3 L573.0 591.4 L572.0 591.4 L571.0 591.5 L570.0 591.5 L569.0 591.5 L568.0 591.6 L567.0 591.6 L566.0 591.7 L565.0 591.8 L564.0 591.8 L563.0 591.9 L562.0 591.9 L561.0 592.0 L560.0 592.0 L559.0 592.0 L558.0 592.1 L557.0 592.1 L556.0 592.2 L555.0 592.2 L554.0 592.3 L553.0 592.4 L552.0 592.4 L551.0 592.5 L550.0 592.5 L549.0 592.5 L548.0 592.6 L547.0 592.6 L546.0 592.7 L545.0 592.8 L544.0 592.8 L543.0 592.9 L542.0 592.9 L541.0 593.0 L540.0 593.0 L539.0 593.0 L538.0 593.1 L537.0 593.1 L536.0 593.2 L535.0 593.2 L534.0 593.3 L533.0 593.4 L532.0 593.4 L531.0 593.5 L530.0 593.5 L529.0 593.5 L528.0 593.6 L527.0 593.6 L526.0 593.7 L525.0 593.8 L524.0 593.8 L523.0 593.9 L522.0 593.9 L521.0 594.0 L520.0 594.0 L519.0 594.0 L518.0 594.1 L517.0 594.1 L516.0 594.2 L515.0 594.2 L514.0 594.3 L513.0 594.4 L512.0 594.4 L511.0 594.5 L510.0 594.5 L509.0 594.5 L508.0 594.6 L507.0 594.6 L506.0 594.7 L505.0 594.8 L504.0 594.8 L503.0 594.9 L502.0 594.9 L501.0 595.0 L500.0 595.0 L499.0 595.0 L498.0 595.1 L497.0 595.1 L496.0 595.2 L495.0 595.2 L494.0 595.3 L493.0 595.4 L492.0 595.4 L491.0 595.5 L490.0 595.5 L489.0 595.5 L488.0 595.6 L487.0 595.6 L486.0 595.7 L485.0 595.8 L484.0 595.8 L483.0 595.9 L482.0 595.9 L481.0 596.0 L480.0 596.0 L479.0 596.0 L478.0 596.1 L477.0 596.1 L476.0 596.2 L475.0 596.2 L474.0 596.3 L473.0 596.4 L472.0 596.4 L471.0 596.5 L470.0 596.5 L469.0 596.5 L468.0 596.6 L467.0 596.6 L466.0 596.7 L465.0 596.8 L464.0 596.8 L463.0 596.9 L462.0 596.9 L461.0 597.0 L460.0 597.0 L459.0 597.0 L458.0 597.1 L457.0 597.1 L456.0 597.2 L455.0 597.2 L454.0 597.3 L453.0 597.4 L452.0 597.4 L451.0 597.5 L450.0 597.5 L449.0 597.5 L448.0 597.6 L447.0 597.6 L446.0 597.7 L445.0 597.8 L444.0 597.8 L443.0 597.9 L442.0 597.9 L441.0 598.0 L440.0 598.0 L439.0 598.0 L438.0 598.1 L437.0 598.1 L436.0 598.2 L435.0 598.2 L434.0 598.3 L433.0 598.4 L432.0 598.4 L431.0 598.5 L430.0 598.5 L429.0 598.5 L428.0 598.6 L427.0 598.6 L426.0 598.7 L425.0 598.8 L424.0 598.8 L423.0 598.9 L422.0 598.9 L421.0 599.0 L420.0 599.0 L419.0 599.0 L418.0 599.1 L417.0 599.1 L416.0 599.2 L415.0 599.2 L414.0 599.3 L413.0 599.4 L412.0 599.4 L411.0 599.5 L410.0 599.5 L409.0 599.5 L408.0 599.6 L407.0 599.6 L406.0 599.7 L405.0 599.8 L404.0 599.8 L403.0 599.9 L402.0 599.9 L401.0 600.0 L400.0 600.0 L399.0 600.0 L398.0 600.1 L397.0 600.1 L396.0 600.2 L395.0 600.2 L394.0 600.3 L393.0 600.4 L392.0 600.4 L391.0 600.5 L390.0 600.5 L389.0 600.5 L388.0 600.6 L387.0 600.6 L386.0 600.7 L385.0 600.8 L384.0 600.8 L383.0 600.9 L382.0 600.9 L381.0 601.0 L380.0 601.0 L379.0 601.0 L378.0 601.1 L377.0 601.1 L376.0 601.2 L375.0 601.2 L374.0 601.3 L373.0 601.4 L372.0 601.4 L371.0 601.5 L370.0 601.5 L369.0 601.5 L368.0 601.6 L367.0 601.6 L366.0 601.7 L365.0 601.8 L364.0 601.8 L363.0 601.9 L362.0 601.9 L361.0 602.0 L360.0 602.0 L359.0 602.0 L358.0 602.1 L357.0 602.1 L356.0 602.2 L355.0 602.2 L354.0 602.3 L353.0 602.4 L352.0 602.4 L351.0 602.5 L350.0 602.5 L349.0 602.5 L348.0 602.6 L347.0 602.6 L346.0 602.7 L345.0 602.8 L344.0 602.8 L343.0 602.9 L342.0 602.9 L341.0 603.0 L340.0 603.0 L339.0 603.0 L338.0 603.1 L337.0 603.1 L336.0 603.2 L335.0 603.2 L334.0 603.3 L333.0 603.4 L332.0 603.4 L331.0 603.5 L330.0 603.5 L329.0 603.5 L328.0 603.6 L327.0 603.6 L326.0 603.7 L325.0 603.8 L324.0 603.8 L323.0 603.9 L322.0 603.9 L321.0 604.0 L320.0 604.0 L319.0 604.0 L318.0 604.1 L317.0 604.1 L316.0 604.2 L315.0 604.2 L314.0 604.3 L313.0 604.4 L312.0 604.4 L311.0 604.5 L310.0 604.5 L309.0 604.5 L308.0 604.6 L307.0 604.6 L306.0 604.7 L305.0 604.8 L304.0 604.8 L303.0 604.9 L302.0 604.9 L301.0 605.0 L300.0 605.0 L299.0 605.0 L298.0 605.1 L297.0 605.1 L296.0 605.2 L295.0 605.2 L294.0 605.3 L293.0 605.4 L292.0 605.4 L291.0 605.5 L290.0 605.5 L289.0 605.5 L288.0 605.6 L287.0 605.6 L286.0 605.7 L285.0 605.8 L284.0 605.8 L283.0 605.9 L282.0 605.9 L281.0 606.0 L280.0 606.0 L279.0 606.0 L278.0 606.1 L277.0 606.1 L276.0 606.2 L275.0 606.2 L274.0 606.3 L273.0 606.4 L272.0 606.4 L271.0 606.5 L270.0 606.5 L269.0 606.5 L268.0 606.6 L267.0 606.6 L266.0 606.7 L265.0 606.8 L264.0 606.8 L263.0 606.9 L262.0 606.9 L261.0 607.0 L260.0 607.0 L259.0 607.0 L258.0 607.1 L257.0 607.1 L256.0 607.2 L255.0 607.2 L254.0 607.3 L253.0 607.4 L252.0 607.4 L251.0 607.5 L250.0 607.5 L249.0 607.5 L248.0 607.6 L247.0 607.6 L246.0 607.7 L245.0 607.8 L244.0 607.8 L243.0 607.9 L242.0 607.9 L241.0 608.0 L240.0 608.0 L239.0 608.0 L238.0 608.1 L237.0 608.1 L236.0 608.2 L235.0 608.2 L234.0 608.3 L233.0 608.4 L232.0 608.4 L231.0 608.5 L230.0 608.5 L229.0 608.5 L228.0 608.6 L227.0 608.6 L226.0 608.7 L225.0 608.8 L224.0 608.8 L223.0 608.9 L222.0 608.9 L221.0 609.0 L220.0 609.0 L219.0 609.0 L218.0 609.1 L217.0 609.1 L216.0 609.2 L215.0 609.2 L214.0 609.3 L213.0 609.4 L212.0 609.4 L211.0 609.5 L210.0 609.5 L209.0 609.5 L208.0 609.6 L207.0 609.6 L206.0 609.7 L205.0 609.8 L204.0 609.8 L203.0 609.9 L202.0 609.9 L201.0 610.0 L200.0 610.0 L199.0 610.7 L198.0 611.4 L197.0 612.1 L196.0 612.9 L195.0 613.6 L194.0 614.3 L193.0 615.0 L192.0 615.7 L191.0 616.4 L190.0 617.1 L189.0 617.9 L188.0 618.6 L187.0 619.3 L186.0 620.0 L185.0 620.9 L184.0 621.8 L183.0 622.7 L182.0 623.6 L181.0 624.0 L180.0 624.0 L179.0 624.0 L178.0 624.0 L177.0 624.0 L176.0 624.0 L175.0 624.0 L174.0 622.8 L173.0 620.9 L172.0 618.9 L171.0 616.9 L170.0 615.0 L169.0 613.0 L168.0 610.5 L167.0 608.0 L166.0 605.5 L165.0 603.0 L164.0 601.9 L163.0 600.7 L162.0 599.6 L161.0 598.4 L160.0 597.3 L159.0 596.1 L158.0 595.0 L157.0 594.2 L156.0 593.5 L155.0 592.7 L154.0 591.9 L153.0 591.1 L152.0 590.4 L151.0 589.6 L150.0 587.7 L149.0 585.8 L148.0 583.9 L147.0 582.0 L146.0 580.2 L145.0 578.3 L144.0 576.4 L143.0 574.5 L142.0 572.5 L141.0 570.5 L140.0 568.5 L139.0 566.5 L138.0 564.6 L137.0 562.6 L136.0 560.6 L135.0 558.6 L134.0 556.8 L133.0 555.1 L132.0 553.4 L131.0 551.7 L130.0 550.0 L129.0 548.3 L128.0 546.6 L127.0 544.9 L126.0 543.8 L125.0 543.3 L124.0 542.8 L123.0 542.4 L122.0 541.9 L121.0 541.4 L120.0 540.9 L119.0 540.5 L118.0 540.0 L117.0 540.9 L116.0 541.8 L115.0 542.6 L114.0 543.5 L113.0 544.4 L112.0 545.2 L111.0 546.1 L110.0 547.0 L109.0 547.1 L108.0 547.3 L107.0 547.4 L106.0 547.5 L105.0 547.6 L104.0 547.8 L103.0 547.9 L102.0 548.2 L101.0 549.0 L100.0 549.8 L99.0 550.5 L98.0 551.3 L97.0 552.1 L96.0 552.8 L95.0 552.6 L94.0 552.1 L93.0 551.5 L92.0 551.0 L91.0 550.5 L90.0 550.4 L89.0 550.3 L88.0 550.2 L87.0 550.1 L86.0 550.0 L85.0 549.9 L84.0 549.8 L83.0 549.7 L82.0 548.9 L81.0 547.9 L80.0 546.9 L79.0 545.9 L78.0 544.9 L77.0 543.9 L76.0 542.9 L75.0 541.9 L74.0 540.9 L73.0 539.8 L72.0 538.8 L71.0 537.7 L70.0 536.7 L69.0 535.6 L68.0 534.6 L67.0 533.5 L66.0 532.6 L65.0 531.8 L64.0 531.0 L63.0 530.2 L62.0 529.5 L61.0 528.7 L60.0 527.9 L59.0 527.1 L58.0 526.3 L57.0 526.5 L56.0 527.3 L55.0 528.1 L54.0 528.8 L53.0 529.6 L52.0 530.4 L51.0 531.2 L50.0 532.0 L49.0 533.8 L48.0 535.5 L47.0 537.2 L46.0 539.0 L45.0 540.8 L44.0 542.5 L43.0 544.2 L42.0 546.0 L41.0 545.3 L40.0 544.6 L39.0 543.9 L38.0 543.1 L37.0 542.4 L36.0 541.7 L35.0 541.0ZM1008.0 520.0 L1009.0 520.1 L1010.0 520.1 L1011.0 520.1 L1012.0 520.1 L1013.0 520.2 L1014.0 520.2 L1015.0 520.2 L1016.0 520.2 L1017.0 520.2 L1018.0 520.3 L1019.0 520.3 L1020.0 520.3 L1021.0 520.3 L1022.0 520.3 L1023.0 520.4 L1023.0 520.9 L1022.0 521.9 L1021.0 522.8 L1020.0 523.8 L1019.0 524.7 L1018.0 525.6 L1017.0 526.6 L1016.0 527.5 L1015.0 527.5 L1014.0 526.5 L1013.0 525.6 L1012.0 524.6 L1011.0 523.6 L1010.0 522.7 L1009.0 521.7 L1008.0 520.7ZM1046.0 520.8 L1047.0 520.9 L1048.0 520.9 L1049.0 520.9 L1050.0 520.9 L1051.0 520.9 L1052.0 520.9 L1053.0 521.0 L1054.0 521.0 L1055.0 521.0 L1056.0 521.0 L1057.0 521.0 L1058.0 521.1 L1059.0 521.1 L1060.0 521.1 L1061.0 521.1 L1062.0 521.1 L1063.0 521.1 L1064.0 521.2 L1065.0 521.2 L1066.0 521.2 L1067.0 521.2 L1068.0 521.2 L1069.0 521.3 L1070.0 521.3 L1071.0 521.3 L1072.0 521.3 L1073.0 521.3 L1074.0 521.4 L1075.0 521.4 L1076.0 521.4 L1077.0 521.4 L1078.0 521.4 L1079.0 521.4 L1080.0 521.5 L1081.0 521.5 L1082.0 521.5 L1083.0 521.5 L1084.0 521.5 L1085.0 521.6 L1086.0 521.6 L1087.0 521.6 L1088.0 521.6 L1089.0 521.6 L1090.0 521.7 L1091.0 521.7 L1092.0 521.7 L1093.0 521.7 L1094.0 521.7 L1095.0 521.8 L1096.0 521.8 L1097.0 521.8 L1098.0 521.8 L1099.0 521.8 L1100.0 521.8 L1101.0 521.9 L1102.0 521.9 L1103.0 521.9 L1104.0 521.9 L1105.0 521.9 L1106.0 522.0 L1107.0 522.0 L1108.0 522.0 L1109.0 522.0 L1110.0 522.0 L1111.0 522.1 L1112.0 522.1 L1113.0 522.1 L1114.0 522.1 L1115.0 522.1 L1116.0 522.1 L1117.0 522.2 L1118.0 522.2 L1119.0 522.2 L1120.0 522.2 L1121.0 522.2 L1122.0 522.3 L1123.0 522.3 L1124.0 522.3 L1125.0 522.3 L1126.0 522.3 L1127.0 522.4 L1128.0 522.4 L1129.0 522.4 L1130.0 522.4 L1131.0 522.4 L1132.0 522.4 L1133.0 522.5 L1134.0 522.5 L1135.0 522.5 L1136.0 522.5 L1137.0 522.5 L1138.0 522.5 L1139.0 522.6 L1140.0 522.6 L1141.0 522.6 L1142.0 522.6 L1143.0 522.6 L1144.0 522.6 L1145.0 522.7 L1146.0 522.7 L1147.0 522.7 L1148.0 522.7 L1149.0 522.7 L1150.0 522.8 L1151.0 522.8 L1152.0 522.8 L1152.0 522.9 L1151.0 524.2 L1150.0 524.9 L1149.0 525.3 L1148.0 525.6 L1147.0 526.0 L1146.0 526.3 L1145.0 526.7 L1144.0 527.6 L1143.0 528.8 L1142.0 530.1 L1141.0 531.4 L1140.0 532.7 L1139.0 534.0 L1138.0 535.2 L1137.0 536.5 L1136.0 537.8 L1135.0 538.8 L1134.0 539.8 L1133.0 540.8 L1132.0 541.8 L1131.0 542.8 L1130.0 543.8 L1129.0 544.8 L1128.0 545.8 L1127.0 546.8 L1126.0 547.8 L1125.0 548.8 L1124.0 548.4 L1123.0 548.0 L1122.0 547.6 L1121.0 547.2 L1120.0 546.9 L1119.0 546.5 L1118.0 546.1 L1117.0 545.7 L1116.0 545.3 L1115.0 544.9 L1114.0 544.5 L1113.0 544.1 L1112.0 543.8 L1111.0 543.4 L1110.0 543.0 L1109.0 542.6 L1108.0 542.6 L1107.0 542.5 L1106.0 542.5 L1105.0 542.5 L1104.0 542.4 L1103.0 542.4 L1102.0 542.4 L1101.0 542.3 L1100.0 542.3 L1099.0 542.2 L1098.0 542.2 L1097.0 542.2 L1096.0 542.1 L1095.0 542.1 L1094.0 542.1 L1093.0 542.0 L1092.0 542.0 L1091.0 540.5 L1090.0 539.0 L1089.0 537.5 L1088.0 536.0 L1087.0 534.5 L1086.0 533.0 L1085.0 531.5 L1084.0 530.0 L1083.0 528.5 L1082.0 527.0 L1081.0 525.5 L1080.0 524.0 L1079.0 524.2 L1078.0 524.4 L1077.0 524.7 L1076.0 524.9 L1075.0 525.1 L1074.0 525.3 L1073.0 525.6 L1072.0 525.8 L1071.0 526.0 L1070.0 526.2 L1069.0 526.5 L1068.0 526.7 L1067.0 527.2 L1066.0 528.1 L1065.0 529.0 L1064.0 529.9 L1063.0 530.7 L1062.0 531.6 L1061.0 532.5 L1060.0 533.3 L1059.0 534.2 L1058.0 535.1 L1057.0 536.0 L1056.0 535.6 L1055.0 534.1 L1054.0 532.6 L1053.0 531.1 L1052.0 529.6 L1051.0 528.1 L1050.0 526.6 L1049.0 525.1 L1048.0 523.6 L1047.0 522.4 L1046.0 521.3Z" fill="#00ffff"/><path d="M35.0 541.0 L36.0 541.7 L37.0 542.4 L38.0 543.1 L39.0 543.9 L40.0 544.6 L41.0 545.3 L42.0 546.0 L43.0 544.2 L44.0 542.5 L45.0 540.8 L46.0 539.0 L47.0 537.2 L48.0 535.5 L49.0 533.8 L50.0 532.0 L51.0 531.2 L52.0 530.4 L53.0 529.6 L54.0 528.8 L55.0 528.1 L56.0 527.3 L57.0 526.5 L58.0 526.3 L59.0 527.1 L60.0 527.9 L61.0 528.7 L62.0 529.5 L63.0 530.2 L64.0 531.0 L65.0 531.8 L66.0 532.6 L67.0 533.5 L68.0 534.6 L69.0 535.6 L70.0 536.7 L71.0 537.7 L72.0 538.8 L73.0 539.8 L74.0 540.9 L75.0 541.9 L76.0 542.9 L77.0 543.9 L78.0 544.9 L79.0 545.9 L80.0 546.9 L81.0 547.9 L82.0 548.9 L83.0 549.7 L84.0 549.8 L85.0 549.9 L86.0 550.0 L87.0 550.1 L88.0 550.2 L89.0 550.3 L90.0 550.4 L91.0 550.5 L92.0 551.0 L93.0 551.5 L94.0 552.1 L95.0 552.6 L96.0 552.8 L97.0 552.1 L98.0 551.3 L99.0 550.5 L100.0 549.8 L101.0 549.0 L102.0 548.2 L103.0 547.9 L104.0 547.8 L105.0 547.6 L106.0 547.5 L107.0 547.4 L108.0 547.3 L109.0 547.1 L110.0 547.0 L111.0 546.1 L112.0 545.2 L113.0 544.4 L114.0 543.5 L115.0 542.6 L116.0 541.8 L117.0 540.9 L118.0 540.0 L119.0 540.5 L120.0 540.9 L121.0 541.4 L122.0 541.9 L123.0 542.4 L124.0 542.8 L125.0 543.3 L126.0 543.8 L127.0 544.9 L128.0 546.6 L129.0 548.3 L130.0 550.0 L131.0 551.7 L132.0 553.4 L133.0 555.1 L134.0 556.8 L135.0 558.6 L136.0 560.6 L137.0 562.6 L138.0 564.6 L139.0 566.5 L140.0 568.5 L141.0 570.5 L142.0 572.5 L143.0 574.5 L144.0 576.4 L144.0 576.7 L143.0 576.7 L142.0 576.7 L141.0 576.7 L140.0 576.8 L139.0 576.8 L138.0 576.8 L137.0 576.8 L136.0 576.8 L135.0 576.8 L134.0 576.9 L133.0 576.9 L132.0 576.9 L131.0 576.9 L130.0 576.9 L129.0 577.0 L128.0 577.0 L127.0 577.0 L126.0 577.0 L125.0 577.0 L124.0 577.1 L123.0 577.1 L122.0 577.1 L121.0 577.1 L120.0 577.2 L119.0 577.2 L118.0 577.2 L117.0 577.2 L116.0 577.2 L115.0 577.3 L114.0 577.3 L113.0 577.3 L112.0 577.4 L111.0 577.4 L110.0 577.4 L109.0 577.4 L108.0 577.5 L107.0 577.5 L106.0 577.5 L105.0 577.6 L104.0 577.6 L103.0 577.6 L102.0 577.7 L101.0 577.7 L100.0 577.7 L99.0 577.8 L98.0 577.8 L97.0 577.9 L96.0 577.9 L95.0 577.9 L94.0 578.0 L93.0 578.0 L92.0 578.1 L91.0 578.1 L90.0 578.2 L89.0 578.2 L88.0 578.2 L87.0 578.3 L86.0 578.3 L85.0 578.4 L84.0 578.4 L83.0 578.5 L82.0 578.5 L81.0 578.6 L80.0 578.6 L79.0 578.7 L78.0 578.7 L77.0 578.8 L76.0 578.8 L75.0 578.9 L74.0 578.9 L73.0 579.0 L72.0 579.1 L71.0 579.1 L70.0 579.2 L69.0 579.2 L68.0 579.3 L67.0 579.3 L66.0 579.4 L65.0 579.5 L64.0 579.5 L63.0 579.6 L62.0 579.6 L61.0 579.7 L60.0 579.8 L59.0 579.8 L58.0 579.9 L57.0 579.9 L56.0 580.0 L55.0 580.1 L54.0 580.1 L53.0 580.2 L52.0 580.3 L51.0 580.3 L50.0 580.4 L49.0 580.5 L48.0 580.5 L47.0 580.6 L46.0 580.7 L45.0 580.7 L44.0 580.8 L43.0 580.9 L42.0 580.9 L41.0 581.0 L40.0 581.1 L39.0 581.1 L38.0 581.2 L37.0 581.3 L36.0 581.3 L35.0 581.4ZM927.0 558.8 L928.0 558.1 L929.0 557.4 L930.0 556.8 L931.0 556.1 L932.0 555.5 L933.0 554.8 L934.0 554.3 L935.0 553.8 L936.0 553.3 L937.0 552.8 L938.0 552.3 L939.0 551.8 L940.0 551.3 L941.0 550.8 L942.0 550.3 L943.0 549.8 L944.0 549.3 L945.0 548.8 L946.0 548.3 L947.0 547.8 L948.0 547.3 L949.0 546.8 L950.0 546.2 L951.0 545.3 L952.0 544.5 L953.0 543.6 L954.0 542.8 L955.0 542.0 L956.0 541.1 L957.0 540.3 L958.0 539.4 L959.0 538.6 L960.0 538.3 L961.0 539.3 L962.0 540.4 L963.0 541.4 L964.0 542.4 L965.0 543.5 L966.0 544.5 L967.0 544.5 L968.0 543.6 L969.0 542.6 L970.0 541.7 L971.0 540.7 L972.0 539.8 L973.0 538.8 L974.0 537.2 L975.0 535.6 L976.0 534.0 L977.0 532.3 L978.0 530.7 L979.0 529.1 L980.0 527.5 L981.0 525.9 L982.0 524.3 L983.0 522.6 L984.0 521.3 L985.0 520.0 L986.0 519.5 L987.0 519.5 L988.0 519.6 L989.0 519.6 L990.0 519.6 L991.0 519.6 L992.0 519.7 L993.0 519.7 L994.0 519.7 L995.0 519.7 L996.0 519.8 L997.0 519.8 L998.0 519.8 L999.0 519.8 L1000.0 519.9 L1001.0 519.9 L1002.0 519.9 L1003.0 519.9 L1004.0 519.9 L1005.0 520.0 L1006.0 520.0 L1007.0 520.0 L1008.0 520.7 L1009.0 521.7 L1010.0 522.7 L1011.0 523.6 L1012.0 524.6 L1013.0 525.6 L1014.0 526.5 L1015.0 527.5 L1016.0 527.5 L1017.0 526.6 L1018.0 525.6 L1019.0 524.7 L1020.0 523.8 L1021.0 522.8 L1022.0 521.9 L1023.0 520.9 L1024.0 520.4 L1025.0 520.4 L1026.0 520.4 L1027.0 520.5 L1028.0 520.5 L1029.0 520.5 L1030.0 520.5 L1031.0 520.5 L1032.0 520.6 L1033.0 520.6 L1034.0 520.6 L1035.0 520.6 L1036.0 520.6 L1037.0 520.7 L1038.0 520.7 L1039.0 520.7 L1040.0 520.7 L1041.0 520.7 L1042.0 520.8 L1043.0 520.8 L1044.0 520.8 L1045.0 520.8 L1046.0 521.3 L1047.0 522.4 L1048.0 523.6 L1049.0 525.1 L1050.0 526.6 L1051.0 528.1 L1052.0 529.6 L1053.0 531.1 L1054.0 532.6 L1055.0 534.1 L1056.0 535.6 L1057.0 536.0 L1058.0 535.1 L1059.0 534.2 L1060.0 533.3 L1061.0 532.5 L1062.0 531.6 L1063.0 530.7 L1064.0 529.9 L1065.0 529.0 L1066.0 528.1 L1067.0 527.2 L1068.0 526.7 L1069.0 526.5 L1070.0 526.2 L1071.0 526.0 L1072.0 525.8 L1073.0 525.6 L1074.0 525.3 L1075.0 525.1 L1076.0 524.9 L1077.0 524.7 L1078.0 524.4 L1079.0 524.2 L1080.0 524.0 L1081.0 525.5 L1082.0 527.0 L1083.0 528.5 L1084.0 530.0 L1085.0 531.5 L1086.0 533.0 L1087.0 534.5 L1088.0 536.0 L1089.0 537.5 L1090.0 539.0 L1091.0 540.5 L1092.0 542.0 L1093.0 542.0 L1094.0 542.1 L1095.0 542.1 L1096.0 542.1 L1097.0 542.2 L1098.0 542.2 L1099.0 542.2 L1100.0 542.3 L1101.0 542.3 L1102.0 542.4 L1103.0 542.4 L1104.0 542.4 L1105.0 542.5 L1106.0 542.5 L1107.0 542.5 L1108.0 542.6 L1109.0 542.6 L1110.0 543.0 L1111.0 543.4 L1112.0 543.8 L1113.0 544.1 L1114.0 544.5 L1115.0 544.9 L1116.0 545.3 L1117.0 545.7 L1118.0 546.1 L1119.0 546.5 L1120.0 546.9 L1121.0 547.2 L1122.0 547.6 L1123.0 548.0 L1124.0 548.4 L1125.0 548.8 L1126.0 547.8 L1127.0 546.8 L1128.0 545.8 L1129.0 544.8 L1130.0 543.8 L1131.0 542.8 L1132.0 541.8 L1133.0 540.8 L1134.0 539.8 L1135.0 538.8 L1136.0 537.8 L1137.0 536.5 L1138.0 535.2 L1139.0 534.0 L1140.0 532.7 L1141.0 531.4 L1142.0 530.1 L1143.0 528.8 L1144.0 527.6 L1145.0 526.7 L1146.0 526.3 L1147.0 526.0 L1148.0 525.6 L1149.0 525.3 L1150.0 524.9 L1151.0 524.2 L1152.0 522.9 L1153.0 522.8 L1154.0 522.8 L1155.0 522.8 L1156.0 522.8 L1157.0 522.9 L1158.0 522.9 L1159.0 522.9 L1160.0 522.9 L1161.0 522.9 L1162.0 522.9 L1163.0 523.0 L1164.0 523.0 L1165.0 523.0 L1166.0 523.0 L1167.0 523.0 L1168.0 523.0 L1169.0 523.0 L1170.0 523.1 L1171.0 523.1 L1172.0 523.1 L1173.0 523.1 L1174.0 523.1 L1175.0 523.1 L1176.0 523.1 L1177.0 523.2 L1178.0 523.2 L1179.0 523.2 L1180.0 523.2 L1181.0 523.2 L1182.0 523.2 L1183.0 523.2 L1184.0 523.2 L1185.0 523.3 L1186.0 523.3 L1187.0 523.3 L1188.0 523.3 L1189.0 523.3 L1190.0 523.3 L1191.0 523.3 L1192.0 523.3 L1193.0 523.4 L1194.0 523.4 L1195.0 523.4 L1196.0 523.4 L1197.0 523.4 L1198.0 523.4 L1199.0 523.4 L1200.0 523.4 L1201.0 523.4 L1202.0 523.5 L1203.0 523.5 L1204.0 523.5 L1205.0 523.5 L1206.0 523.5 L1207.0 523.5 L1208.0 523.5 L1209.0 523.5 L1210.0 523.5 L1211.0 523.5 L1212.0 523.5 L1213.0 523.5 L1214.0 523.6 L1215.0 523.6 L1216.0 523.6 L1217.0 523.6 L1218.0 523.6 L1219.0 523.6 L1220.0 523.6 L1221.0 523.6 L1222.0 523.6 L1223.0 523.6 L1224.0 523.6 L1225.0 523.6 L1226.0 523.6 L1227.0 523.6 L1228.0 523.6 L1229.0 523.6 L1230.0 523.7 L1231.0 523.7 L1232.0 523.7 L1233.0 523.7 L1234.0 523.7 L1235.0 523.7 L1236.0 523.7 L1237.0 523.7 L1238.0 523.7 L1239.0 523.7 L1240.0 523.7 L1241.0 523.7 L1242.0 523.7 L1243.0 523.7 L1244.0 523.7 L1245.0 523.7 L1246.0 523.7 L1247.0 523.7 L1248.0 523.7 L1249.0 523.7 L1250.0 523.7 L1251.0 523.7 L1252.0 523.7 L1253.0 523.7 L1254.0 523.7 L1255.0 523.7 L1256.0 523.7 L1257.0 523.7 L1258.0 523.7 L1259.0 523.7 L1260.0 523.7 L1261.0 523.7 L1262.0 523.7 L1263.0 523.7 L1264.0 523.7 L1265.0 523.7 L1266.0 523.7 L1267.0 523.6 L1268.0 523.6 L1269.0 523.6 L1270.0 523.6 L1271.0 523.6 L1272.0 523.6 L1273.0 523.6 L1274.0 523.6 L1275.0 523.6 L1276.0 523.6 L1277.0 523.6 L1278.0 523.6 L1279.0 523.6 L1280.0 523.5 L1281.0 523.5 L1282.0 523.5 L1283.0 523.5 L1284.0 523.5 L1285.0 523.5 L1286.0 523.5 L1287.0 523.5 L1288.0 523.5 L1289.0 523.4 L1290.0 523.4 L1291.0 523.4 L1292.0 523.4 L1293.0 523.4 L1294.0 523.4 L1295.0 523.4 L1296.0 523.3 L1297.0 523.3 L1298.0 523.3 L1299.0 523.3 L1300.0 523.3 L1301.0 523.3 L1302.0 523.3 L1303.0 523.2 L1304.0 523.2 L1305.0 523.2 L1306.0 523.2 L1307.0 523.2 L1308.0 523.2 L1309.0 523.1 L1310.0 523.1 L1311.0 523.1 L1312.0 523.1 L1313.0 523.1 L1314.0 523.0 L1315.0 523.0 L1316.0 523.0 L1317.0 523.0 L1318.0 523.0 L1319.0 522.9 L1320.0 522.9 L1321.0 522.9 L1322.0 522.9 L1323.0 522.9 L1324.0 522.8 L1325.0 522.8 L1326.0 522.8 L1327.0 522.8 L1328.0 522.7 L1329.0 522.7 L1330.0 522.7 L1331.0 522.7 L1332.0 522.7 L1333.0 522.6 L1334.0 522.6 L1335.0 522.6 L1336.0 522.6 L1337.0 522.5 L1338.0 522.5 L1339.0 522.5 L1340.0 522.5 L1341.0 522.4 L1342.0 522.4 L1343.0 522.4 L1344.0 522.4 L1345.0 522.3 L1346.0 522.3 L1347.0 522.3 L1348.0 522.3 L1349.0 522.2 L1350.0 522.2 L1351.0 522.2 L1352.0 522.1 L1353.0 522.1 L1354.0 522.1 L1355.0 522.1 L1356.0 522.0 L1357.0 522.0 L1358.0 522.0 L1359.0 522.0 L1360.0 521.9 L1361.0 521.9 L1362.0 521.9 L1363.0 521.8 L1364.0 521.8 L1365.0 521.8 L1366.0 521.7 L1367.0 521.7 L1368.0 521.7 L1369.0 521.7 L1370.0 521.6 L1371.0 521.6 L1372.0 521.6 L1373.0 521.5 L1374.0 521.5 L1375.0 521.5 L1376.0 521.4 L1377.0 521.4 L1378.0 521.4 L1379.0 521.4 L1380.0 521.3 L1381.0 521.3 L1382.0 521.3 L1383.0 521.2 L1384.0 521.2 L1385.0 521.2 L1386.0 521.1 L1387.0 521.1 L1388.0 521.1 L1389.0 521.0 L1390.0 521.0 L1391.0 521.0 L1392.0 520.9 L1393.0 520.9 L1394.0 520.9 L1395.0 520.8 L1396.0 520.8 L1397.0 520.8 L1398.0 520.7 L1399.0 520.7 L1400.0 520.7 L1401.0 520.6 L1402.0 520.6 L1403.0 520.6 L1404.0 520.5 L1405.0 520.5 L1406.0 520.5 L1407.0 520.4 L1408.0 520.4 L1409.0 520.4 L1410.0 520.3 L1411.0 520.3 L1412.0 520.3 L1413.0 520.2 L1414.0 520.2 L1415.0 520.2 L1416.0 520.1 L1417.0 520.1 L1418.0 520.1 L1419.0 520.0 L1420.0 520.0 L1421.0 520.0 L1422.0 519.9 L1423.0 519.9 L1424.0 519.9 L1425.0 519.8 L1426.0 519.8 L1427.0 519.7 L1428.0 519.7 L1429.0 519.7 L1430.0 519.6 L1431.0 519.6 L1432.0 519.5 L1433.0 519.5 L1434.0 519.4 L1435.0 519.4 L1436.0 519.3 L1437.0 519.3 L1438.0 519.3 L1439.0 519.2 L1440.0 519.2 L1441.0 519.1 L1442.0 519.1 L1443.0 519.0 L1444.0 518.9 L1445.0 518.9 L1446.0 518.8 L1447.0 518.8 L1448.0 518.7 L1449.0 518.7 L1450.0 518.6 L1451.0 518.6 L1452.0 518.5 L1453.0 518.4 L1454.0 518.4 L1455.0 518.3 L1456.0 518.3 L1457.0 518.2 L1458.0 518.1 L1459.0 518.1 L1460.0 518.0 L1461.0 518.0 L1462.0 517.9 L1463.0 517.8 L1464.0 517.8 L1465.0 517.7 L1466.0 517.6 L1467.0 517.6 L1468.0 517.5 L1469.0 517.4 L1470.0 517.4 L1471.0 517.3 L1472.0 517.2 L1473.0 517.1 L1474.0 517.1 L1475.0 517.0 L1476.0 516.9 L1477.0 516.9 L1478.0 516.8 L1479.0 516.7 L1480.0 516.6 L1481.0 516.6 L1482.0 516.5 L1483.0 516.4 L1484.0 516.3 L1485.0 516.2 L1486.0 516.2 L1487.0 516.1 L1488.0 516.0 L1489.0 515.9 L1490.0 515.8 L1491.0 515.8 L1492.0 515.7 L1493.0 515.6 L1494.0 515.5 L1495.0 515.4 L1496.0 515.4 L1497.0 515.3 L1498.0 515.2 L1499.0 515.1 L1500.0 515.0 L1501.0 514.9 L1502.0 514.8 L1503.0 514.8 L1504.0 514.7 L1505.0 514.6 L1506.0 514.5 L1507.0 514.4 L1508.0 514.3 L1509.0 514.2 L1510.0 514.1 L1511.0 514.1 L1512.0 514.0 L1513.0 513.9 L1514.0 513.8 L1515.0 513.7 L1516.0 513.6 L1517.0 513.5 L1518.0 513.4 L1519.0 513.3 L1520.0 513.2 L1521.0 513.1 L1522.0 513.0 L1523.0 513.0 L1524.0 512.9 L1525.0 512.8 L1526.0 512.7 L1527.0 512.6 L1528.0 512.5 L1529.0 512.4 L1530.0 512.3 L1531.0 512.2 L1532.0 512.1 L1533.0 512.0 L1534.0 511.9 L1535.0 511.8 L1536.0 511.7 L1537.0 511.6 L1538.0 511.5 L1539.0 511.4 L1540.0 511.3 L1541.0 511.2 L1542.0 511.1 L1543.0 511.0 L1544.0 510.9 L1545.0 510.8 L1546.0 510.7 L1547.0 510.6 L1548.0 510.5 L1549.0 510.4 L1550.0 510.3 L1551.0 510.2 L1552.0 510.1 L1553.0 510.0 L1554.0 509.9 L1555.0 509.8 L1556.0 509.7 L1557.0 509.6 L1558.0 509.5 L1559.0 509.4 L1560.0 509.3 L1561.0 509.2 L1562.0 509.1 L1563.0 508.9 L1564.0 508.8 L1565.0 508.7 L1566.0 508.6 L1567.0 508.5 L1568.0 508.4 L1569.0 508.3 L1570.0 508.2 L1571.0 508.1 L1572.0 508.0 L1573.0 508.0 L1573.0 515.8 L1572.0 515.8 L1571.0 515.9 L1570.0 516.0 L1569.0 516.1 L1568.0 516.2 L1567.0 516.3 L1566.0 516.5 L1565.0 516.6 L1564.0 516.7 L1563.0 516.8 L1562.0 516.9 L1561.0 517.0 L1560.0 517.1 L1559.0 517.2 L1558.0 517.3 L1557.0 517.4 L1556.0 517.5 L1555.0 517.6 L1554.0 517.8 L1553.0 517.9 L1552.0 518.0 L1551.0 518.1 L1550.0 518.2 L1549.0 518.3 L1548.0 518.4 L1547.0 518.5 L1546.0 518.6 L1545.0 518.7 L1544.0 518.8 L1543.0 518.9 L1542.0 519.0 L1541.0 519.1 L1540.0 519.2 L1539.0 519.3 L1538.0 519.5 L1537.0 519.6 L1536.0 519.7 L1535.0 519.8 L1534.0 519.9 L1533.0 520.0 L1532.0 520.1 L1531.0 520.2 L1530.0 520.3 L1529.0 520.4 L1528.0 520.5 L1527.0 520.6 L1526.0 520.7 L1525.0 520.8 L1524.0 520.9 L1523.0 521.0 L1522.0 521.1 L1521.0 521.2 L1520.0 521.3 L1519.0 521.4 L1518.0 521.5 L1517.0 521.6 L1516.0 521.7 L1515.0 521.8 L1514.0 521.9 L1513.0 522.0 L1512.0 522.1 L1511.0 522.2 L1510.0 522.3 L1509.0 522.4 L1508.0 522.5 L1507.0 522.6 L1506.0 522.7 L1505.0 522.8 L1504.0 522.9 L1503.0 523.0 L1502.0 523.1 L1501.0 523.2 L1500.0 523.3 L1499.0 523.4 L1498.0 523.5 L1497.0 523.6 L1496.0 523.7 L1495.0 523.8 L1494.0 523.9 L1493.0 524.0 L1492.0 524.1 L1491.0 524.2 L1490.0 524.3 L1489.0 524.4 L1488.0 524.5 L1487.0 524.6 L1486.0 524.7 L1485.0 524.7 L1484.0 524.8 L1483.0 524.9 L1482.0 525.0 L1481.0 525.1 L1480.0 525.2 L1479.0 525.3 L1478.0 525.4 L1477.0 525.5 L1476.0 525.6 L1475.0 525.7 L1474.0 525.8 L1473.0 525.9 L1472.0 526.0 L1471.0 526.0 L1470.0 526.1 L1469.0 526.2 L1468.0 526.3 L1467.0 526.4 L1466.0 526.5 L1465.0 526.6 L1464.0 526.7 L1463.0 526.8 L1462.0 526.9 L1461.0 527.0 L1460.0 527.0 L1459.0 527.1 L1458.0 527.2 L1457.0 527.3 L1456.0 527.4 L1455.0 527.5 L1454.0 527.6 L1453.0 527.7 L1452.0 527.7 L1451.0 527.8 L1450.0 527.9 L1449.0 528.0 L1448.0 528.1 L1447.0 528.2 L1446.0 528.3 L1445.0 528.3 L1444.0 528.4 L1443.0 528.5 L1442.0 528.6 L1441.0 528.7 L1440.0 528.8 L1439.0 528.9 L1438.0 528.9 L1437.0 529.0 L1436.0 529.1 L1435.0 529.2 L1434.0 529.3 L1433.0 529.4 L1432.0 529.4 L1431.0 529.5 L1430.0 529.6 L1429.0 529.7 L1428.0 529.8 L1427.0 529.8 L1426.0 529.9 L1425.0 530.0 L1424.0 530.1 L1423.0 530.2 L1422.0 530.2 L1421.0 530.3 L1420.0 530.4 L1419.0 530.5 L1418.0 530.6 L1417.0 530.6 L1416.0 530.7 L1415.0 530.8 L1414.0 530.9 L1413.0 530.9 L1412.0 531.0 L1411.0 531.1 L1410.0 531.2 L1409.0 531.3 L1408.0 531.3 L1407.0 531.4 L1406.0 531.5 L1405.0 531.6 L1404.0 531.6 L1403.0 531.7 L1402.0 531.8 L1401.0 531.9 L1400.0 531.9 L1399.0 532.0 L1398.0 532.1 L1397.0 532.1 L1396.0 532.2 L1395.0 532.3 L1394.0 532.4 L1393.0 532.4 L1392.0 532.5 L1391.0 532.6 L1390.0 532.6 L1389.0 532.7 L1388.0 532.8 L1387.0 532.9 L1386.0 532.9 L1385.0 533.0 L1384.0 533.1 L1383.0 533.1 L1382.0 533.2 L1381.0 533.3 L1380.0 533.4 L1379.0 533.4 L1378.0 533.5 L1377.0 533.6 L1376.0 533.6 L1375.0 533.7 L1374.0 533.8 L1373.0 533.8 L1372.0 533.9 L1371.0 534.0 L1370.0 534.0 L1369.0 534.1 L1368.0 534.2 L1367.0 534.2 L1366.0 534.3 L1365.0 534.4 L1364.0 534.4 L1363.0 534.5 L1362.0 534.6 L1361.0 534.6 L1360.0 534.7 L1359.0 534.8 L1358.0 534.8 L1357.0 534.9 L1356.0 535.0 L1355.0 535.0 L1354.0 535.1 L1353.0 535.2 L1352.0 535.2 L1351.0 535.3 L1350.0 535.4 L1349.0 535.4 L1348.0 535.5 L1347.0 535.6 L1346.0 535.6 L1345.0 535.7 L1344.0 535.8 L1343.0 535.8 L1342.0 535.9 L1341.0 535.9 L1340.0 536.0 L1339.0 536.1 L1338.0 536.1 L1337.0 536.2 L1336.0 536.3 L1335.0 536.3 L1334.0 536.4 L1333.0 536.5 L1332.0 536.5 L1331.0 536.6 L1330.0 536.6 L1329.0 536.7 L1328.0 536.8 L1327.0 536.8 L1326.0 536.9 L1325.0 537.0 L1324.0 537.0 L1323.0 537.1 L1322.0 537.2 L1321.0 537.2 L1320.0 537.3 L1319.0 537.3 L1318.0 537.4 L1317.0 537.5 L1316.0 537.5 L1315.0 537.6 L1314.0 537.7 L1313.0 537.7 L1312.0 537.8 L1311.0 537.8 L1310.0 537.9 L1309.0 538.0 L1308.0 538.0 L1307.0 538.1 L1306.0 538.2 L1305.0 538.2 L1304.0 538.3 L1303.0 538.3 L1302.0 538.4 L1301.0 538.5 L1300.0 538.5 L1299.0 538.6 L1298.0 538.7 L1297.0 538.7 L1296.0 538.8 L1295.0 538.8 L1294.0 538.9 L1293.0 539.0 L1292.0 539.0 L1291.0 539.1 L1290.0 539.2 L1289.0 539.2 L1288.0 539.3 L1287.0 539.3 L1286.0 539.4 L1285.0 539.5 L1284.0 539.5 L1283.0 539.6 L1282.0 539.7 L1281.0 539.7 L1280.0 539.8 L1279.0 539.8 L1278.0 539.9 L1277.0 540.0 L1276.0 540.0 L1275.0 540.1 L1274.0 540.2 L1273.0 540.2 L1272.0 540.3 L1271.0 540.3 L1270.0 540.4 L1269.0 540.5 L1268.0 540.5 L1267.0 540.6 L1266.0 540.7 L1265.0 540.7 L1264.0 540.8 L1263.0 540.9 L1262.0 540.9 L1261.0 541.0 L1260.0 541.1 L1259.0 541.1 L1258.0 541.2 L1257.0 541.2 L1256.0 541.3 L1255.0 541.4 L1254.0 541.4 L1253.0 541.5 L1252.0 541.6 L1251.0 541.6 L1250.0 541.7 L1249.0 541.8 L1248.0 541.8 L1247.0 541.9 L1246.0 542.0 L1245.0 542.0 L1244.0 542.1 L1243.0 542.2 L1242.0 542.2 L1241.0 542.3 L1240.0 542.4 L1239.0 542.4 L1238.0 542.5 L1237.0 542.6 L1236.0 542.6 L1235.0 542.7 L1234.0 542.8 L1233.0 542.8 L1232.0 542.9 L1231.0 543.0 L1230.0 543.0 L1229.0 543.1 L1228.0 543.2 L1227.0 543.2 L1226.0 543.3 L1225.0 543.4 L1224.0 543.4 L1223.0 543.5 L1222.0 543.6 L1221.0 543.7 L1220.0 543.7 L1219.0 543.8 L1218.0 543.9 L1217.0 543.9 L1216.0 544.0 L1215.0 544.1 L1214.0 544.1 L1213.0 544.2 L1212.0 544.3 L1211.0 544.4 L1210.0 544.4 L1209.0 544.5 L1208.0 544.6 L1207.0 544.6 L1206.0 544.7 L1205.0 544.8 L1204.0 544.8 L1203.0 544.9 L1202.0 545.0 L1201.0 545.1 L1200.0 545.1 L1199.0 545.2 L1198.0 545.3 L1197.0 545.3 L1196.0 545.4 L1195.0 545.5 L1194.0 545.5 L1193.0 545.6 L1192.0 545.7 L1191.0 545.8 L1190.0 545.8 L1189.0 545.9 L1188.0 546.0 L1187.0 546.0 L1186.0 546.1 L1185.0 546.2 L1184.0 546.2 L1183.0 546.3 L1182.0 546.4 L1181.0 546.5 L1180.0 546.5 L1179.0 546.6 L1178.0 546.7 L1177.0 546.7 L1176.0 546.8 L1175.0 546.9 L1174.0 546.9 L1173.0 547.0 L1172.0 547.1 L1171.0 547.2 L1170.0 547.2 L1169.0 547.3 L1168.0 547.4 L1167.0 547.4 L1166.0 547.5 L1165.0 547.6 L1164.0 547.6 L1163.0 547.7 L1162.0 547.8 L1161.0 547.9 L1160.0 547.9 L1159.0 548.0 L1158.0 548.1 L1157.0 548.1 L1156.0 548.2 L1155.0 548.3 L1154.0 548.3 L1153.0 548.4 L1152.0 548.5 L1151.0 548.5 L1150.0 548.6 L1149.0 548.7 L1148.0 548.7 L1147.0 548.8 L1146.0 548.9 L1145.0 549.0 L1144.0 549.0 L1143.0 549.1 L1142.0 549.2 L1141.0 549.2 L1140.0 549.3 L1139.0 549.4 L1138.0 549.4 L1137.0 549.5 L1136.0 549.6 L1135.0 549.6 L1134.0 549.7 L1133.0 549.8 L1132.0 549.8 L1131.0 549.9 L1130.0 550.0 L1129.0 550.0 L1128.0 550.1 L1127.0 550.2 L1126.0 550.2 L1125.0 550.3 L1124.0 550.4 L1123.0 550.4 L1122.0 550.5 L1121.0 550.5 L1120.0 550.6 L1119.0 550.7 L1118.0 550.7 L1117.0 550.8 L1116.0 550.9 L1115.0 550.9 L1114.0 551.0 L1113.0 551.1 L1112.0 551.1 L1111.0 551.2 L1110.0 551.2 L1109.0 551.3 L1108.0 551.4 L1107.0 551.4 L1106.0 551.5 L1105.0 551.6 L1104.0 551.6 L1103.0 551.7 L1102.0 551.7 L1101.0 551.8 L1100.0 551.9 L1099.0 551.9 L1098.0 552.0 L1097.0 552.0 L1096.0 552.1 L1095.0 552.2 L1094.0 552.2 L1093.0 552.3 L1092.0 552.3 L1091.0 552.4 L1090.0 552.4 L1089.0 552.5 L1088.0 552.6 L1087.0 552.6 L1086.0 552.7 L1085.0 552.7 L1084.0 552.8 L1083.0 552.8 L1082.0 552.9 L1081.0 553.0 L1080.0 553.0 L1079.0 553.1 L1078.0 553.1 L1077.0 553.2 L1076.0 553.2 L1075.0 553.3 L1074.0 553.3 L1073.0 553.4 L1072.0 553.4 L1071.0 553.5 L1070.0 553.6 L1069.0 553.6 L1068.0 553.7 L1067.0 553.7 L1066.0 553.8 L1065.0 553.8 L1064.0 553.9 L1063.0 553.9 L1062.0 554.0 L1061.0 554.0 L1060.0 554.1 L1059.0 554.1 L1058.0 554.2 L1057.0 554.2 L1056.0 554.3 L1055.0 554.3 L1054.0 554.3 L1053.0 554.4 L1052.0 554.4 L1051.0 554.5 L1050.0 554.5 L1049.0 554.6 L1048.0 554.6 L1047.0 554.7 L1046.0 554.7 L1045.0 554.8 L1044.0 554.8 L1043.0 554.9 L1042.0 554.9 L1041.0 555.0 L1040.0 555.0 L1039.0 555.0 L1038.0 555.1 L1037.0 555.1 L1036.0 555.2 L1035.0 555.2 L1034.0 555.3 L1033.0 555.3 L1032.0 555.4 L1031.0 555.4 L1030.0 555.4 L1029.0 555.5 L1028.0 555.5 L1027.0 555.6 L1026.0 555.6 L1025.0 555.7 L1024.0 555.7 L1023.0 555.7 L1022.0 555.8 L1021.0 555.8 L1020.0 555.9 L1019.0 555.9 L1018.0 556.0 L1017.0 556.0 L1016.0 556.0 L1015.0 556.1 L1014.0 556.1 L1013.0 556.2 L1012.0 556.2 L1011.0 556.3 L1010.0 556.3 L1009.0 556.3 L1008.0 556.4 L1007.0 556.4 L1006.0 556.5 L1005.0 556.5 L1004.0 556.5 L1003.0 556.6 L1002.0 556.6 L1001.0 556.7 L1000.0 556.7 L999.0 556.8 L998.0 556.8 L997.0 556.8 L996.0 556.9 L995.0 556.9 L994.0 556.9 L993.0 557.0 L992.0 557.0 L991.0 557.1 L990.0 557.1 L989.0 557.1 L988.0 557.2 L987.0 557.2 L986.0 557.3 L985.0 557.3 L984.0 557.3 L983.0 557.4 L982.0 557.4 L981.0 557.5 L980.0 557.5 L979.0 557.5 L978.0 557.6 L977.0 557.6 L976.0 557.6 L975.0 557.7 L974.0 557.7 L973.0 557.8 L972.0 557.8 L971.0 557.8 L970.0 557.9 L969.0 557.9 L968.0 557.9 L967.0 558.0 L966.0 558.0 L965.0 558.0 L964.0 558.1 L963.0 558.1 L962.0 558.2 L961.0 558.2 L960.0 558.2 L959.0 558.3 L958.0 558.3 L957.0 558.3 L956.0 558.4 L955.0 558.4 L954.0 558.4 L953.0 558.5 L952.0 558.5 L951.0 558.5 L950.0 558.6 L949.0 558.6 L948.0 558.6 L947.0 558.7 L946.0 558.7 L945.0 558.7 L944.0 558.8 L943.0 558.8 L942.0 558.8 L941.0 558.9 L940.0 558.9 L939.0 558.9 L938.0 559.0 L937.0 559.0 L936.0 559.0 L935.0 559.1 L934.0 559.1 L933.0 559.1 L932.0 559.2 L931.0 559.2 L930.0 559.2 L929.0 559.3 L928.0 559.3 L927.0 559.3Z" fill="#800080"/><path d="M986.0 518.8 L987.0 517.5 L988.0 516.3 L989.0 515.0 L990.0 513.8 L991.0 512.5 L992.0 511.3 L993.0 510.0 L994.0 509.8 L995.0 510.5 L996.0 511.2 L997.0 512.0 L998.0 512.7 L999.0 513.4 L1000.0 514.1 L1001.0 514.9 L1002.0 515.6 L1003.0 516.3 L1004.0 517.1 L1005.0 517.8 L1006.0 518.8 L1007.0 519.7 L1007.0 520.0 L1006.0 520.0 L1005.0 520.0 L1004.0 519.9 L1003.0 519.9 L1002.0 519.9 L1001.0 519.9 L1000.0 519.9 L999.0 519.8 L998.0 519.8 L997.0 519.8 L996.0 519.8 L995.0 519.7 L994.0 519.7 L993.0 519.7 L992.0 519.7 L991.0 519.6 L990.0 519.6 L989.0 519.6 L988.0 519.6 L987.0 519.5 L986.0 519.5ZM1024.0 520.0 L1025.0 519.1 L1026.0 518.0 L1027.0 516.8 L1028.0 515.6 L1029.0 514.4 L1030.0 513.2 L1031.0 512.0 L1032.0 510.8 L1033.0 509.6 L1034.0 508.4 L1035.0 509.5 L1036.0 510.5 L1037.0 511.6 L1038.0 512.7 L1039.0 513.8 L1040.0 514.8 L1041.0 515.9 L1042.0 517.0 L1043.0 518.1 L1044.0 519.1 L1045.0 520.2 L1045.0 520.8 L1044.0 520.8 L1043.0 520.8 L1042.0 520.8 L1041.0 520.7 L1040.0 520.7 L1039.0 520.7 L1038.0 520.7 L1037.0 520.7 L1036.0 520.6 L1035.0 520.6 L1034.0 520.6 L1033.0 520.6 L1032.0 520.6 L1031.0 520.5 L1030.0 520.5 L1029.0 520.5 L1028.0 520.5 L1027.0 520.5 L1026.0 520.4 L1025.0 520.4 L1024.0 520.4ZM1153.0 521.7 L1154.0 520.4 L1155.0 519.2 L1156.0 517.9 L1157.0 516.6 L1158.0 515.4 L1159.0 514.1 L1160.0 512.9 L1161.0 511.6 L1162.0 507.8 L1163.0 504.1 L1164.0 500.3 L1165.0 496.5 L1166.0 492.8 L1167.0 489.0 L1168.0 486.2 L1169.0 483.4 L1170.0 480.5 L1171.0 477.7 L1172.0 474.9 L1173.0 472.1 L1174.0 469.2 L1175.0 466.4 L1176.0 463.6 L1177.0 462.3 L1178.0 460.9 L1179.0 459.6 L1180.0 458.3 L1181.0 456.9 L1182.0 455.6 L1183.0 454.3 L1184.0 452.9 L1185.0 451.6 L1186.0 451.5 L1187.0 451.3 L1188.0 451.2 L1189.0 451.1 L1190.0 450.9 L1191.0 450.8 L1192.0 450.7 L1193.0 450.5 L1194.0 450.4 L1195.0 450.3 L1196.0 450.1 L1197.0 450.0 L1198.0 451.0 L1199.0 452.0 L1200.0 453.0 L1201.0 454.0 L1202.0 455.0 L1203.0 456.0 L1204.0 457.0 L1205.0 458.0 L1206.0 459.0 L1207.0 459.8 L1208.0 460.6 L1209.0 461.3 L1210.0 462.1 L1211.0 462.9 L1212.0 463.7 L1213.0 464.5 L1214.0 465.0 L1215.0 465.0 L1216.0 465.0 L1217.0 465.0 L1218.0 465.0 L1219.0 465.0 L1220.0 465.0 L1221.0 465.0 L1222.0 465.0 L1223.0 465.0 L1224.0 465.0 L1225.0 465.0 L1226.0 465.0 L1227.0 465.0 L1228.0 465.0 L1229.0 465.0 L1230.0 465.0 L1231.0 463.7 L1232.0 462.3 L1233.0 461.0 L1234.0 459.6 L1235.0 458.3 L1236.0 457.0 L1237.0 455.6 L1238.0 454.3 L1239.0 452.9 L1240.0 451.6 L1241.0 448.8 L1242.0 446.0 L1243.0 443.2 L1244.0 440.4 L1245.0 437.6 L1246.0 434.8 L1247.0 432.0 L1248.0 429.2 L1249.0 426.5 L1250.0 423.8 L1251.0 421.1 L1252.0 418.4 L1253.0 415.7 L1254.0 413.0 L1255.0 411.7 L1256.0 410.4 L1257.0 409.1 L1258.0 407.9 L1259.0 406.6 L1260.0 405.3 L1261.0 404.0 L1262.0 404.1 L1263.0 404.3 L1264.0 404.4 L1265.0 404.6 L1266.0 404.7 L1267.0 404.9 L1268.0 405.0 L1269.0 405.1 L1270.0 405.3 L1271.0 405.4 L1272.0 405.6 L1273.0 405.7 L1274.0 405.9 L1275.0 406.0 L1276.0 406.0 L1277.0 406.0 L1278.0 406.0 L1279.0 406.0 L1280.0 406.0 L1281.0 406.0 L1282.0 406.0 L1283.0 406.0 L1284.0 406.0 L1285.0 406.0 L1286.0 406.0 L1287.0 406.0 L1288.0 406.0 L1289.0 406.0 L1290.0 406.0 L1291.0 406.0 L1292.0 406.0 L1293.0 406.0 L1294.0 406.0 L1295.0 406.0 L1296.0 406.0 L1297.0 406.0 L1298.0 406.0 L1299.0 406.0 L1300.0 408.0 L1301.0 411.9 L1302.0 415.9 L1303.0 419.9 L1304.0 423.8 L1305.0 427.5 L1306.0 429.9 L1307.0 432.3 L1308.0 434.7 L1309.0 437.1 L1310.0 439.5 L1311.0 442.0 L1312.0 444.4 L1313.0 446.8 L1314.0 449.2 L1315.0 451.6 L1316.0 452.6 L1317.0 453.5 L1318.0 454.5 L1319.0 455.5 L1320.0 456.4 L1321.0 456.3 L1322.0 454.5 L1323.0 452.7 L1324.0 451.0 L1325.0 449.2 L1326.0 447.4 L1327.0 445.7 L1328.0 443.8 L1329.0 441.8 L1330.0 439.8 L1331.0 437.8 L1332.0 435.8 L1333.0 433.8 L1334.0 431.8 L1335.0 430.3 L1336.0 429.7 L1337.0 429.0 L1338.0 428.3 L1339.0 427.6 L1340.0 427.0 L1341.0 426.3 L1342.0 425.6 L1343.0 424.9 L1344.0 424.3 L1345.0 423.6 L1346.0 424.1 L1347.0 424.6 L1348.0 425.1 L1349.0 425.6 L1350.0 426.1 L1351.0 426.7 L1352.0 427.2 L1353.0 427.7 L1354.0 428.2 L1355.0 428.7 L1356.0 429.2 L1357.0 429.7 L1358.0 430.2 L1359.0 430.6 L1360.0 431.1 L1361.0 431.6 L1362.0 432.1 L1363.0 432.6 L1364.0 433.0 L1365.0 433.5 L1366.0 434.0 L1367.0 433.3 L1368.0 432.7 L1369.0 432.0 L1370.0 431.4 L1371.0 430.7 L1372.0 430.0 L1373.0 429.4 L1374.0 428.7 L1375.0 428.1 L1376.0 427.4 L1377.0 426.5 L1378.0 425.1 L1379.0 423.8 L1380.0 422.4 L1381.0 421.1 L1382.0 419.7 L1383.0 418.4 L1384.0 417.0 L1385.0 415.7 L1386.0 414.3 L1387.0 413.0 L1388.0 411.0 L1389.0 409.0 L1390.0 407.1 L1391.0 405.1 L1392.0 403.1 L1393.0 401.1 L1394.0 399.1 L1395.0 397.2 L1396.0 395.2 L1397.0 393.2 L1398.0 391.4 L1399.0 389.8 L1400.0 388.3 L1401.0 386.8 L1402.0 385.2 L1403.0 383.7 L1404.0 382.2 L1405.0 380.6 L1406.0 379.1 L1407.0 377.5 L1408.0 376.0 L1409.0 375.9 L1410.0 375.8 L1411.0 375.8 L1412.0 375.7 L1413.0 375.6 L1414.0 375.5 L1415.0 375.4 L1416.0 375.3 L1417.0 375.2 L1418.0 375.2 L1419.0 375.1 L1420.0 375.0 L1421.0 376.4 L1422.0 377.9 L1423.0 379.3 L1424.0 380.7 L1425.0 382.1 L1426.0 383.6 L1427.0 385.0 L1428.0 386.0 L1429.0 387.0 L1430.0 387.9 L1431.0 388.9 L1432.0 389.9 L1433.0 390.9 L1434.0 391.9 L1435.0 392.9 L1436.0 393.8 L1437.0 394.8 L1438.0 395.8 L1439.0 396.5 L1440.0 396.0 L1441.0 395.5 L1442.0 394.9 L1443.0 394.4 L1444.0 393.9 L1445.0 393.4 L1446.0 392.9 L1447.0 392.4 L1448.0 391.8 L1449.0 391.3 L1450.0 390.8 L1451.0 390.0 L1452.0 389.2 L1453.0 388.3 L1454.0 387.5 L1455.0 386.7 L1456.0 385.9 L1457.0 385.1 L1458.0 384.3 L1459.0 383.4 L1460.0 382.6 L1461.0 381.8 L1462.0 381.0 L1463.0 380.2 L1464.0 379.3 L1465.0 378.5 L1466.0 377.7 L1467.0 376.9 L1468.0 375.9 L1469.0 374.5 L1470.0 373.2 L1471.0 371.9 L1472.0 370.6 L1473.0 369.2 L1474.0 367.9 L1475.0 366.6 L1476.0 365.2 L1477.0 363.9 L1478.0 362.6 L1479.0 361.2 L1480.0 359.9 L1481.0 358.6 L1482.0 357.3 L1483.0 355.9 L1484.0 354.6 L1485.0 353.2 L1486.0 351.4 L1487.0 349.7 L1488.0 347.9 L1489.0 346.1 L1490.0 344.3 L1491.0 342.6 L1492.0 340.8 L1493.0 339.0 L1494.0 337.2 L1495.0 335.5 L1496.0 333.7 L1497.0 331.9 L1498.0 330.1 L1499.0 328.4 L1500.0 326.6 L1501.0 324.8 L1502.0 323.0 L1503.0 321.3 L1504.0 319.5 L1505.0 317.7 L1506.0 318.6 L1507.0 319.5 L1508.0 320.3 L1509.0 321.2 L1510.0 322.1 L1511.0 323.0 L1512.0 323.9 L1513.0 324.8 L1514.0 325.6 L1515.0 326.5 L1516.0 327.4 L1517.0 328.3 L1518.0 329.2 L1519.0 330.0 L1520.0 331.4 L1521.0 333.2 L1522.0 334.9 L1523.0 336.6 L1524.0 338.4 L1525.0 340.1 L1526.0 341.8 L1527.0 343.6 L1528.0 345.3 L1529.0 347.0 L1530.0 348.8 L1531.0 350.5 L1532.0 350.8 L1533.0 351.2 L1534.0 351.5 L1535.0 351.8 L1536.0 352.2 L1537.0 352.5 L1538.0 352.9 L1539.0 353.2 L1540.0 353.0 L1541.0 352.0 L1542.0 350.9 L1543.0 349.9 L1544.0 348.9 L1545.0 347.9 L1546.0 346.8 L1547.0 345.8 L1548.0 344.8 L1549.0 341.9 L1550.0 339.0 L1551.0 336.0 L1552.0 333.1 L1553.0 330.2 L1554.0 327.3 L1555.0 324.4 L1556.0 321.4 L1557.0 318.2 L1558.0 312.0 L1559.0 305.7 L1560.0 299.5 L1561.0 293.3 L1562.0 287.1 L1563.0 280.9 L1564.0 274.7 L1565.0 266.8 L1566.0 258.1 L1567.0 249.5 L1568.0 240.9 L1569.0 232.3 L1570.0 223.6 L1571.0 215.0 L1572.0 212.5 L1573.0 210.0 L1573.0 508.0 L1572.0 508.0 L1571.0 508.1 L1570.0 508.2 L1569.0 508.3 L1568.0 508.4 L1567.0 508.5 L1566.0 508.6 L1565.0 508.7 L1564.0 508.8 L1563.0 508.9 L1562.0 509.1 L1561.0 509.2 L1560.0 509.3 L1559.0 509.4 L1558.0 509.5 L1557.0 509.6 L1556.0 509.7 L1555.0 509.8 L1554.0 509.9 L1553.0 510.0 L1552.0 510.1 L1551.0 510.2 L1550.0 510.3 L1549.0 510.4 L1548.0 510.5 L1547.0 510.6 L1546.0 510.7 L1545.0 510.8 L1544.0 510.9 L1543.0 511.0 L1542.0 511.1 L1541.0 511.2 L1540.0 511.3 L1539.0 511.4 L1538.0 511.5 L1537.0 511.6 L1536.0 511.7 L1535.0 511.8 L1534.0 511.9 L1533.0 512.0 L1532.0 512.1 L1531.0 512.2 L1530.0 512.3 L1529.0 512.4 L1528.0 512.5 L1527.0 512.6 L1526.0 512.7 L1525.0 512.8 L1524.0 512.9 L1523.0 513.0 L1522.0 513.0 L1521.0 513.1 L1520.0 513.2 L1519.0 513.3 L1518.0 513.4 L1517.0 513.5 L1516.0 513.6 L1515.0 513.7 L1514.0 513.8 L1513.0 513.9 L1512.0 514.0 L1511.0 514.1 L1510.0 514.1 L1509.0 514.2 L1508.0 514.3 L1507.0 514.4 L1506.0 514.5 L1505.0 514.6 L1504.0 514.7 L1503.0 514.8 L1502.0 514.8 L1501.0 514.9 L1500.0 515.0 L1499.0 515.1 L1498.0 515.2 L1497.0 515.3 L1496.0 515.4 L1495.0 515.4 L1494.0 515.5 L1493.0 515.6 L1492.0 515.7 L1491.0 515.8 L1490.0 515.8 L1489.0 515.9 L1488.0 516.0 L1487.0 516.1 L1486.0 516.2 L1485.0 516.2 L1484.0 516.3 L1483.0 516.4 L1482.0 516.5 L1481.0 516.6 L1480.0 516.6 L1479.0 516.7 L1478.0 516.8 L1477.0 516.9 L1476.0 516.9 L1475.0 517.0 L1474.0 517.1 L1473.0 517.1 L1472.0 517.2 L1471.0 517.3 L1470.0 517.4 L1469.0 517.4 L1468.0 517.5 L1467.0 517.6 L1466.0 517.6 L1465.0 517.7 L1464.0 517.8 L1463.0 517.8 L1462.0 517.9 L1461.0 518.0 L1460.0 518.0 L1459.0 518.1 L1458.0 518.1 L1457.0 518.2 L1456.0 518.3 L1455.0 518.3 L1454.0 518.4 L1453.0 518.4 L1452.0 518.5 L1451.0 518.6 L1450.0 518.6 L1449.0 518.7 L1448.0 518.7 L1447.0 518.8 L1446.0 518.8 L1445.0 518.9 L1444.0 518.9 L1443.0 519.0 L1442.0 519.1 L1441.0 519.1 L1440.0 519.2 L1439.0 519.2 L1438.0 519.3 L1437.0 519.3 L1436.0 519.3 L1435.0 519.4 L1434.0 519.4 L1433.0 519.5 L1432.0 519.5 L1431.0 519.6 L1430.0 519.6 L1429.0 519.7 L1428.0 519.7 L1427.0 519.7 L1426.0 519.8 L1425.0 519.8 L1424.0 519.9 L1423.0 519.9 L1422.0 519.9 L1421.0 520.0 L1420.0 520.0 L1419.0 520.0 L1418.0 520.1 L1417.0 520.1 L1416.0 520.1 L1415.0 520.2 L1414.0 520.2 L1413.0 520.2 L1412.0 520.3 L1411.0 520.3 L1410.0 520.3 L1409.0 520.4 L1408.0 520.4 L1407.0 520.4 L1406.0 520.5 L1405.0 520.5 L1404.0 520.5 L1403.0 520.6 L1402.0 520.6 L1401.0 520.6 L1400.0 520.7 L1399.0 520.7 L1398.0 520.7 L1397.0 520.8 L1396.0 520.8 L1395.0 520.8 L1394.0 520.9 L1393.0 520.9 L1392.0 520.9 L1391.0 521.0 L1390.0 521.0 L1389.0 521.0 L1388.0 521.1 L1387.0 521.1 L1386.0 521.1 L1385.0 521.2 L1384.0 521.2 L1383.0 521.2 L1382.0 521.3 L1381.0 521.3 L1380.0 521.3 L1379.0 521.4 L1378.0 521.4 L1377.0 521.4 L1376.0 521.4 L1375.0 521.5 L1374.0 521.5 L1373.0 521.5 L1372.0 521.6 L1371.0 521.6 L1370.0 521.6 L1369.0 521.7 L1368.0 521.7 L1367.0 521.7 L1366.0 521.7 L1365.0 521.8 L1364.0 521.8 L1363.0 521.8 L1362.0 521.9 L1361.0 521.9 L1360.0 521.9 L1359.0 522.0 L1358.0 522.0 L1357.0 522.0 L1356.0 522.0 L1355.0 522.1 L1354.0 522.1 L1353.0 522.1 L1352.0 522.1 L1351.0 522.2 L1350.0 522.2 L1349.0 522.2 L1348.0 522.3 L1347.0 522.3 L1346.0 522.3 L1345.0 522.3 L1344.0 522.4 L1343.0 522.4 L1342.0 522.4 L1341.0 522.4 L1340.0 522.5 L1339.0 522.5 L1338.0 522.5 L1337.0 522.5 L1336.0 522.6 L1335.0 522.6 L1334.0 522.6 L1333.0 522.6 L1332.0 522.7 L1331.0 522.7 L1330.0 522.7 L1329.0 522.7 L1328.0 522.7 L1327.0 522.8 L1326.0 522.8 L1325.0 522.8 L1324.0 522.8 L1323.0 522.9 L1322.0 522.9 L1321.0 522.9 L1320.0 522.9 L1319.0 522.9 L1318.0 523.0 L1317.0 523.0 L1316.0 523.0 L1315.0 523.0 L1314.0 523.0 L1313.0 523.1 L1312.0 523.1 L1311.0 523.1 L1310.0 523.1 L1309.0 523.1 L1308.0 523.2 L1307.0 523.2 L1306.0 523.2 L1305.0 523.2 L1304.0 523.2 L1303.0 523.2 L1302.0 523.3 L1301.0 523.3 L1300.0 523.3 L1299.0 523.3 L1298.0 523.3 L1297.0 523.3 L1296.0 523.3 L1295.0 523.4 L1294.0 523.4 L1293.0 523.4 L1292.0 523.4 L1291.0 523.4 L1290.0 523.4 L1289.0 523.4 L1288.0 523.5 L1287.0 523.5 L1286.0 523.5 L1285.0 523.5 L1284.0 523.5 L1283.0 523.5 L1282.0 523.5 L1281.0 523.5 L1280.0 523.5 L1279.0 523.6 L1278.0 523.6 L1277.0 523.6 L1276.0 523.6 L1275.0 523.6 L1274.0 523.6 L1273.0 523.6 L1272.0 523.6 L1271.0 523.6 L1270.0 523.6 L1269.0 523.6 L1268.0 523.6 L1267.0 523.6 L1266.0 523.7 L1265.0 523.7 L1264.0 523.7 L1263.0 523.7 L1262.0 523.7 L1261.0 523.7 L1260.0 523.7 L1259.0 523.7 L1258.0 523.7 L1257.0 523.7 L1256.0 523.7 L1255.0 523.7 L1254.0 523.7 L1253.0 523.7 L1252.0 523.7 L1251.0 523.7 L1250.0 523.7 L1249.0 523.7 L1248.0 523.7 L1247.0 523.7 L1246.0 523.7 L1245.0 523.7 L1244.0 523.7 L1243.0 523.7 L1242.0 523.7 L1241.0 523.7 L1240.0 523.7 L1239.0 523.7 L1238.0 523.7 L1237.0 523.7 L1236.0 523.7 L1235.0 523.7 L1234.0 523.7 L1233.0 523.7 L1232.0 523.7 L1231.0 523.7 L1230.0 523.7 L1229.0 523.6 L1228.0 523.6 L1227.0 523.6 L1226.0 523.6 L1225.0 523.6 L1224.0 523.6 L1223.0 523.6 L1222.0 523.6 L1221.0 523.6 L1220.0 523.6 L1219.0 523.6 L1218.0 523.6 L1217.0 523.6 L1216.0 523.6 L1215.0 523.6 L1214.0 523.6 L1213.0 523.5 L1212.0 523.5 L1211.0 523.5 L1210.0 523.5 L1209.0 523.5 L1208.0 523.5 L1207.0 523.5 L1206.0 523.5 L1205.0 523.5 L1204.0 523.5 L1203.0 523.5 L1202.0 523.5 L1201.0 523.4 L1200.0 523.4 L1199.0 523.4 L1198.0 523.4 L1197.0 523.4 L1196.0 523.4 L1195.0 523.4 L1194.0 523.4 L1193.0 523.4 L1192.0 523.3 L1191.0 523.3 L1190.0 523.3 L1189.0 523.3 L1188.0 523.3 L1187.0 523.3 L1186.0 523.3 L1185.0 523.3 L1184.0 523.2 L1183.0 523.2 L1182.0 523.2 L1181.0 523.2 L1180.0 523.2 L1179.0 523.2 L1178.0 523.2 L1177.0 523.2 L1176.0 523.1 L1175.0 523.1 L1174.0 523.1 L1173.0 523.1 L1172.0 523.1 L1171.0 523.1 L1170.0 523.1 L1169.0 523.0 L1168.0 523.0 L1167.0 523.0 L1166.0 523.0 L1165.0 523.0 L1164.0 523.0 L1163.0 523.0 L1162.0 522.9 L1161.0 522.9 L1160.0 522.9 L1159.0 522.9 L1158.0 522.9 L1157.0 522.9 L1156.0 522.8 L1155.0 522.8 L1154.0 522.8 L1153.0 522.8Z" fill="#ff80ff"/><line x1="35" y1="111.5" x2="1625" y2="111.5" stroke="#a00000" stroke-width="1" stroke-dasharray="1 2"/><line x1="35" y1="224.5" x2="1625" y2="224.5" stroke="#a00000" stroke-width="1" stroke-dasharray="1 2"/><line x1="35" y1="337.5" x2="1625" y2="337.5" stroke="#a00000" stroke-width="1" stroke-dasharray="1 2"/><line x1="35" y1="407.5" x2="1625" y2="407.5" stroke="#a00000" stroke-width="1" stroke-dasharray="1 2"/><line x1="35" y1="478.5" x2="1625" y2="478.5" stroke="#a00000" stroke-width="1" stroke-dasharray="1 2"/><line x1="35" y1="591.5" x2="1625" y2="591.5" stroke="#a00000" stroke-width="1" stroke-dasharray="1 2"/><line x1="35" y1="704.5" x2="1625" y2="704.5" stroke="#a00000" stroke-width="1" stroke-dasharray="1 2"/><line x1="35" y1="759.5" x2="1625" y2="759.5" stroke="#a00000" stroke-width="1" stroke-dasharray="1 2"/><line x1="134.5" y1="92" x2="134.5" y2="722" stroke="#a00000" stroke-width="1" stroke-dasharray="1 2"/><line x1="134.5" y1="736" x2="134.5" y2="779" stroke="#a00000" stroke-width="1" stroke-dasharray="1 2"/><line x1="374.5" y1="92" x2="374.5" y2="722" stroke="#a00000" stroke-width="1" stroke-dasharray="1 2"/><line x1="374.5" y1="736" x2="374.5" y2="779" stroke="#a00000" stroke-width="1" stroke-dasharray="1 2"/><line x1="615.5" y1="92" x2="615.5" y2="722" stroke="#a00000" stroke-width="1" stroke-dasharray="1 2"/><line x1="615.5" y1="736" x2="615.5" y2="779" stroke="#a00000" stroke-width="1" stroke-dasharray="1 2"/><line x1="854.5" y1="92" x2="854.5" y2="722" stroke="#a00000" stroke-width="1" stroke-dasharray="1 2"/><line x1="854.5" y1="736" x2="854.5" y2="779" stroke="#a00000" stroke-width="1" stroke-dasharray="1 2"/><line x1="1094.5" y1="92" x2="1094.5" y2="722" stroke="#a00000" stroke-width="1" stroke-dasharray="1 2"/><line x1="1094.5" y1="736" x2="1094.5" y2="779" stroke="#a00000" stroke-width="1" stroke-dasharray="1 2"/><line x1="1334.5" y1="92" x2="1334.5" y2="722" stroke="#a00000" stroke-width="1" stroke-dasharray="1 2"/><line x1="1334.5" y1="736" x2="1334.5" y2="779" stroke="#a00000" stroke-width="1" stroke-dasharray="1 2"/><line x1="95.5" y1="92" x2="95.5" y2="722" stroke="#fff" stroke-width="1" stroke-dasharray="3 3"/><line x1="95.5" y1="796" x2="95.5" y2="799" stroke="#fff" stroke-width="1"/><line x1="415.5" y1="92" x2="415.5" y2="722" stroke="#fff" stroke-width="1" stroke-dasharray="3 3"/><line x1="415.5" y1="796" x2="415.5" y2="799" stroke="#fff" stroke-width="1"/><line x1="735.5" y1="92" x2="735.5" y2="722" stroke="#fff" stroke-width="1" stroke-dasharray="3 3"/><line x1="735.5" y1="796" x2="735.5" y2="799" stroke="#fff" stroke-width="1"/><line x1="1055.5" y1="92" x2="1055.5" y2="722" stroke="#fff" stroke-width="1" stroke-dasharray="3 3"/><line x1="1055.5" y1="796" x2="1055.5" y2="799" stroke="#fff" stroke-width="1"/><line x1="1375.5" y1="92" x2="1375.5" y2="722" stroke="#fff" stroke-width="1" stroke-dasharray="3 3"/><line x1="1375.5" y1="796" x2="1375.5" y2="799" stroke="#fff" stroke-width="1"/><path d="M36.5 537V554M38.5 537V589M40.5 528V537M44.5 537V563M46.5 528V537M48.5 520V528M50.5 520V546M52.5 511V520M54.5 511V528M56.5 520V537M58.5 520V546M60.5 511V528M62.5 520V537M66.5 511V537M68.5 520V537M70.5 511V520M72.5 528V546M74.5 528V546M76.5 537V554M78.5 537V554M80.5 528V537M82.5 537V554M84.5 537V554M86.5 546V589M88.5 546V563M90.5 546V572M92.5 537V563M94.5 537V563M96.5 546V563M98.5 537V546M102.5 528V546M104.5 528V537M106.5 528V546M108.5 528V546M110.5 537V563M112.5 520V546M114.5 520V537M116.5 537V563M118.5 520V537M120.5 528V546M126.5 537V554M128.5 528V546M130.5 546V563M132.5 537V546M134.5 546V554M136.5 546V563M138.5 546V563M140.5 563V580M142.5 554V572M144.5 572V589M148.5 563V572M150.5 563V580M152.5 580V606M154.5 572V615M156.5 580V606M158.5 580V598M160.5 589V624M162.5 580V589M164.5 580V598M166.5 598V615M168.5 589V598M170.5 598V624M172.5 598V624M174.5 606V624M176.5 606V624M178.5 606V624M180.5 615V633M182.5 615V633M184.5 606V624M186.5 606V624M188.5 606V624M858.5 615V633M860.5 624V650M862.5 624V633M864.5 624V641M866.5 615V633M868.5 624V641M870.5 624V633M872.5 633V641M874.5 633V676M876.5 624V667M878.5 633V659M880.5 624V641M882.5 633V641M886.5 624V650M888.5 606V624M890.5 615V633M892.5 598V615M896.5 615V633M898.5 598V624M900.5 598V606M902.5 598V615M904.5 589V598M906.5 580V598M908.5 580V598M910.5 572V589M914.5 563V572M916.5 554V580M918.5 554V572M922.5 546V563M924.5 546V572M928.5 528V546M930.5 546V563M932.5 537V563M936.5 537V563M938.5 537V554M940.5 537V554M942.5 528V572M946.5 537V546M948.5 528V546M950.5 528V546M952.5 528V546M954.5 520V528M956.5 528V563M958.5 520V537M960.5 528V554M962.5 528V546M964.5 537V554M966.5 537V572M968.5 528V546M970.5 537V546M972.5 528V537M974.5 520V537M976.5 520V537M980.5 511V528M982.5 520V537M1008.5 511V528M1010.5 511V528M1012.5 502V520M1014.5 511V528M1016.5 520V563M1018.5 511V546M1020.5 502V520M1022.5 511V528M1046.5 511V528M1048.5 511V528M1050.5 511V528M1052.5 511V520M1054.5 528V537M1060.5 520V537M1062.5 520V537M1064.5 520V537M1066.5 520V537M1068.5 520V537M1070.5 520V537M1072.5 511V537M1074.5 511V528M1076.5 511V528M1078.5 511V520M1082.5 520V546M1084.5 511V520M1086.5 528V572M1088.5 528V537M1090.5 520V537M1092.5 537V554M1094.5 520V537M1096.5 537V572M1098.5 528V537M1100.5 537V554M1102.5 537V554M1104.5 528V546M1106.5 528V546M1108.5 537V554M1110.5 528V546M1112.5 537V554M1114.5 528V546M1116.5 520V528M1118.5 528V546M1122.5 537V546M1124.5 537V554M1126.5 520V528M1128.5 537V546M1130.5 537V546M1132.5 537V554M1134.5 528V563M1138.5 520V546M1140.5 520V537M1142.5 520V537M1144.5 520V537M1146.5 520V537M1148.5 511V537M1150.5 520V528M1152.5 511V537M858.5 600V713M860.5 610V690M862.5 620V680M864.5 625V670M866.5 630V660M868.5 628V655M870.5 625V650M872.5 632V655M874.5 630V648M876.5 625V645M878.5 620V640M150.5 590V625M152.5 595V630M156.5 600V640M160.5 605V650M164.5 610V645M168.5 615V650M170.5 620V660M172.5 625V655M176.5 610V645M180.5 605V640M184.5 600V635" stroke="#0000ff" stroke-width="1"/><path d="M986.5 502V528M990.5 493V520M992.5 502V528M994.5 502V520M996.5 493V511M998.5 502V546M1000.5 502V520M1002.5 511V537M1004.5 511V528M1006.5 511V528M1024.5 502V520M1028.5 502V511M1030.5 502V528M1032.5 502V520M1034.5 502V554M1036.5 502V520M1038.5 493V520M1040.5 493V502M1042.5 511V546M1044.5 502V537M1154.5 511V528M1156.5 511V528M1158.5 511V528M1160.5 493V537M1162.5 493V511M1164.5 485V502M1166.5 476V502M1168.5 467V511M1170.5 467V485M1172.5 459V476M1174.5 450V467M1178.5 441V459M1180.5 441V459M1184.5 441V450M1186.5 441V459M1188.5 433V467M1190.5 424V450M1192.5 424V433M1194.5 424V441M1196.5 424V441M1198.5 433V450M1200.5 433V450M1202.5 450V459M1204.5 450V467M1206.5 450V493M1208.5 441V467M1210.5 441V459M1212.5 459V485M1214.5 459V476M1216.5 450V467M1218.5 450V467M1220.5 459V485M1222.5 459V476M1228.5 459V467M1230.5 459V485M1232.5 450V476M1234.5 450V467M1236.5 450V485M1238.5 433V450M1240.5 441V476M1242.5 441V450M1244.5 424V441M1246.5 415V433M1248.5 424V433M1250.5 407V415M1252.5 407V424M1254.5 398V407M1256.5 380V398M1258.5 389V415M1260.5 398V407M1262.5 398V415M1264.5 389V407M1266.5 389V415M1268.5 380V389M1270.5 398V415M1272.5 398V424M1274.5 398V415M1276.5 389V398M1280.5 398V415M1282.5 398V415M1284.5 398V407M1286.5 398V415M1288.5 398V415M1290.5 398V407M1292.5 389V415M1294.5 380V424M1296.5 389V398M1298.5 398V424M1302.5 389V415M1304.5 398V415M1306.5 415V433M1308.5 415V433M1310.5 433V450M1312.5 424V441M1314.5 433V441M1316.5 441V459M1318.5 441V459M1320.5 441V467M1322.5 450V467M1324.5 433V450M1326.5 433V450M1328.5 415V441M1330.5 433V459M1332.5 424V441M1334.5 415V424M1336.5 424V441M1338.5 424V441M1342.5 398V415M1344.5 407V415M1346.5 407V424M1348.5 407V424M1350.5 398V424M1352.5 407V424M1354.5 407V424M1356.5 424V441M1358.5 415V433M1362.5 424V433M1364.5 424V450M1366.5 424V441M1368.5 415V433M1370.5 415V433M1372.5 415V433M1374.5 424V450M1376.5 407V424M1378.5 407V424M1380.5 415V433M1382.5 415V433M1384.5 407V424M1386.5 398V415M1388.5 389V407M1390.5 389V407M1392.5 380V398M1394.5 380V398M1396.5 389V407M1398.5 380V398M1400.5 372V380M1402.5 372V380M1404.5 363V380M1406.5 363V380M1408.5 363V389M1410.5 354V372M1412.5 363V389M1414.5 354V372M1416.5 354V372M1418.5 354V363M1420.5 354V372M1422.5 363V372M1424.5 372V424M1426.5 372V398M1428.5 380V398M1430.5 380V398M1432.5 380V398M1434.5 363V380M1436.5 380V398M1438.5 380V389M1440.5 380V389M1442.5 380V407M1444.5 389V407M1446.5 380V407M1448.5 372V398M1452.5 372V389M1456.5 372V380M1458.5 363V380M1464.5 363V372M1466.5 354V372M1468.5 363V380M1470.5 363V380M1472.5 354V372M1474.5 363V372M1476.5 354V372M1478.5 346V363M1480.5 346V363M1482.5 337V354M1484.5 346V363M1486.5 337V346M1488.5 320V337M1490.5 328V346M1492.5 328V346M1494.5 320V337M1496.5 311V337M1498.5 311V337M1500.5 302V320M1502.5 311V328M1504.5 311V328M1506.5 302V320M1508.5 311V328M1510.5 302V320M1512.5 302V320M1514.5 302V320M1516.5 320V337M1518.5 320V337M1520.5 311V320M1524.5 320V337M1526.5 328V346M1528.5 328V346M1530.5 328V346M1532.5 328V337M1534.5 346V389M1540.5 328V354M1542.5 328V346M1544.5 320V346M1548.5 337V354M1550.5 311V328M1552.5 311V337M1554.5 320V337M1498.5 276V312M1500.5 290V320M1539.5 317V348M1542.5 300V340M1546.5 290V335M1550.5 270V320M1552.5 262V300M1554.5 250V290M1556.5 240V270M1558.5 154V242M1560.5 189V242M1562.5 232V270M1564.5 215V257M1566.5 180V223M1568.5 130V180M1570.5 111V172M1572.5 135V171" stroke="#ff0000" stroke-width="1"/><path d="M36 554h1v1h-1zM60 528h1v1h-1zM96 563h1v1h-1zM140 580h1v1h-1zM158 598h1v1h-1zM164 598h1v1h-1zM860 650h1v1h-1zM868 641h1v1h-1zM870 633h1v1h-1zM882 641h1v1h-1zM896 633h1v1h-1zM908 598h1v1h-1zM910 589h1v1h-1zM928 546h1v1h-1zM936 563h1v1h-1zM938 554h1v1h-1zM950 546h1v1h-1zM956 563h1v1h-1zM1002 537h1v1h-1zM1066 537h1v1h-1zM1088 537h1v1h-1zM1240 476h1v1h-1zM1242 450h1v1h-1zM1260 407h1v1h-1zM1272 424h1v1h-1zM1274 415h1v1h-1zM1288 415h1v1h-1zM1302 415h1v1h-1zM1308 433h1v1h-1zM1356 441h1v1h-1zM1380 433h1v1h-1zM1394 398h1v1h-1zM1396 407h1v1h-1zM1400 380h1v1h-1zM1440 389h1v1h-1zM1448 398h1v1h-1zM1480 363h1v1h-1zM1504 328h1v1h-1zM1512 320h1v1h-1zM1518 337h1v1h-1zM1548 354h1v1h-1z" fill="#f0f0f0"/><path d="M35.0 487.5 L37.0 487.5 L39.0 487.5 L41.0 487.5 L43.0 487.5 L45.0 487.5 L47.0 487.5 L49.0 487.4 L51.0 487.4 L53.0 487.4 L55.0 487.4 L57.0 487.4 L59.0 487.4 L61.0 487.3 L63.0 487.3 L65.0 487.3 L67.0 487.3 L69.0 487.2 L71.0 487.2 L73.0 487.1 L75.0 487.1 L77.0 487.0 L79.0 486.9 L81.0 486.8 L83.0 486.8 L85.0 486.7 L87.0 486.6 L89.0 486.5 L91.0 486.5 L93.0 486.4 L95.0 486.3 L97.0 486.1 L99.0 486.0 L101.0 485.9 L103.0 485.8 L105.0 485.7 L107.0 485.6 L109.0 485.5 L111.0 485.5 L113.0 485.4 L115.0 485.4 L117.0 485.3 L119.0 485.3 L121.0 485.3 L123.0 485.2 L125.0 485.2 L127.0 485.1 L129.0 485.1 L131.0 485.1 L133.0 485.0 L135.0 485.0 L137.0 485.0 L139.0 484.9 L141.0 484.9 L143.0 484.9 L145.0 484.8 L147.0 484.8 L149.0 484.8 L151.0 484.7 L153.0 484.7 L155.0 484.7 L157.0 484.7 L159.0 484.6 L161.0 484.6 L163.0 484.6 L165.0 484.6 L167.0 484.6 L169.0 484.6 L171.0 484.6 L173.0 484.5 L175.0 484.5 L177.0 484.5 L179.0 484.5 L181.0 484.5 L183.0 484.5 L185.0 484.5 L187.0 484.5 L189.0 484.5 L191.0 484.5 L193.0 484.5 L195.0 484.5 L197.0 484.5 L199.0 484.5 L201.0 484.5 L203.0 484.5 L205.0 484.6 L207.0 484.6 L209.0 484.6 L211.0 484.6 L213.0 484.6 L215.0 484.6 L217.0 484.6 L219.0 484.7 L221.0 484.7 L223.0 484.7 L225.0 484.7 L227.0 484.7 L229.0 484.8 L231.0 484.8 L233.0 484.8 L235.0 484.9 L237.0 484.9 L239.0 484.9 L241.0 484.9 L243.0 485.0 L245.0 485.0 L247.0 485.0 L249.0 485.1 L251.0 485.1 L253.0 485.2 L255.0 485.2 L257.0 485.2 L259.0 485.3 L261.0 485.3 L263.0 485.4 L265.0 485.4 L267.0 485.5 L269.0 485.5 L271.0 485.5 L273.0 485.6 L275.0 485.6 L277.0 485.7 L279.0 485.7 L281.0 485.8 L283.0 485.9 L285.0 485.9 L287.0 486.0 L289.0 486.0 L291.0 486.1 L293.0 486.1 L295.0 486.2 L297.0 486.3 L299.0 486.3 L301.0 486.4 L303.0 486.4 L305.0 486.5 L307.0 486.6 L309.0 486.6 L311.0 486.7 L313.0 486.8 L315.0 486.8 L317.0 486.9 L319.0 487.0 L321.0 487.0 L323.0 487.1 L325.0 487.2 L327.0 487.3 L329.0 487.3 L331.0 487.4 L333.0 487.5 L335.0 487.6 L337.0 487.6 L339.0 487.7 L341.0 487.8 L343.0 487.9 L345.0 488.0 L347.0 488.0 L349.0 488.1 L351.0 488.2 L353.0 488.3 L355.0 488.4 L357.0 488.5 L359.0 488.5 L361.0 488.6 L363.0 488.7 L365.0 488.8 L367.0 488.9 L369.0 489.0 L371.0 489.1 L373.0 489.2 L375.0 489.3 L377.0 489.3 L379.0 489.4 L381.0 489.5 L383.0 489.6 L385.0 489.7 L387.0 489.8 L389.0 489.9 L391.0 490.0 L393.0 490.1 L395.0 490.2 L397.0 490.3 L399.0 490.4 L401.0 490.5 L403.0 490.6 L405.0 490.7 L407.0 490.8 L409.0 490.9 L411.0 491.0 L413.0 491.1 L415.0 491.2 L417.0 491.3 L419.0 491.4 L421.0 491.5 L423.0 491.6 L425.0 491.7 L427.0 491.8 L429.0 492.0 L431.0 492.1 L433.0 492.2 L435.0 492.3 L437.0 492.4 L439.0 492.5 L441.0 492.6 L443.0 492.7 L445.0 492.8 L447.0 492.9 L449.0 493.1 L451.0 493.2 L453.0 493.3 L455.0 493.4 L457.0 493.5 L459.0 493.6 L461.0 493.7 L463.0 493.8 L465.0 494.0 L467.0 494.1 L469.0 494.2 L471.0 494.3 L473.0 494.4 L475.0 494.5 L477.0 494.7 L479.0 494.8 L481.0 494.9 L483.0 495.0 L485.0 495.1 L487.0 495.3 L489.0 495.4 L491.0 495.5 L493.0 495.6 L495.0 495.7 L497.0 495.9 L499.0 496.0 L501.0 496.1 L503.0 496.2 L505.0 496.3 L507.0 496.5 L509.0 496.6 L511.0 496.7 L513.0 496.8 L515.0 497.0 L517.0 497.1 L519.0 497.2 L521.0 497.3 L523.0 497.4 L525.0 497.6 L527.0 497.7 L529.0 497.8 L531.0 497.9 L533.0 498.1 L535.0 498.2 L537.0 498.3 L539.0 498.4 L541.0 498.6 L543.0 498.7 L545.0 498.8 L547.0 498.9 L549.0 499.1 L551.0 499.2 L553.0 499.3 L555.0 499.4 L557.0 499.6 L559.0 499.7 L561.0 499.8 L563.0 499.9 L565.0 500.1 L567.0 500.2 L569.0 500.3 L571.0 500.5 L573.0 500.6 L575.0 500.7 L577.0 500.8 L579.0 501.0 L581.0 501.1 L583.0 501.2 L585.0 501.3 L587.0 501.5 L589.0 501.6 L591.0 501.7 L593.0 501.8 L595.0 502.0 L597.0 502.1 L599.0 502.2 L601.0 502.4 L603.0 502.5 L605.0 502.6 L607.0 502.7 L609.0 502.9 L611.0 503.0 L613.0 503.1 L615.0 503.2 L617.0 503.4 L619.0 503.5 L621.0 503.6 L623.0 503.7 L625.0 503.9 L627.0 504.0 L629.0 504.1 L631.0 504.2 L633.0 504.4 L635.0 504.5 L637.0 504.6 L639.0 504.7 L641.0 504.9 L643.0 505.0 L645.0 505.1 L647.0 505.2 L649.0 505.4 L651.0 505.5 L653.0 505.6 L655.0 505.7 L657.0 505.8 L659.0 506.0 L661.0 506.1 L663.0 506.2 L665.0 506.3 L667.0 506.5 L669.0 506.6 L671.0 506.7 L673.0 506.8 L675.0 506.9 L677.0 507.1 L679.0 507.2 L681.0 507.3 L683.0 507.4 L685.0 507.5 L687.0 507.6 L689.0 507.8 L691.0 507.9 L693.0 508.0 L695.0 508.1 L697.0 508.2 L699.0 508.4 L701.0 508.5 L703.0 508.6 L705.0 508.7 L707.0 508.8 L709.0 508.9 L711.0 509.0 L713.0 509.2 L715.0 509.3 L717.0 509.4 L719.0 509.5 L721.0 509.6 L723.0 509.7 L725.0 509.8 L727.0 509.9 L729.0 510.0 L731.0 510.2 L733.0 510.3 L735.0 510.4 L737.0 510.5 L739.0 510.6 L741.0 510.7 L743.0 510.8 L745.0 510.9 L747.0 511.0 L749.0 511.1 L751.0 511.2 L753.0 511.3 L755.0 511.4 L757.0 511.5 L759.0 511.6 L761.0 511.7 L763.0 511.8 L765.0 511.9 L767.0 512.0 L769.0 512.1 L771.0 512.2 L773.0 512.3 L775.0 512.4 L777.0 512.5 L779.0 512.6 L781.0 512.7 L783.0 512.8 L785.0 512.9 L787.0 513.0 L789.0 513.1 L791.0 513.2 L793.0 513.3 L795.0 513.4 L797.0 513.5 L799.0 513.5 L801.0 513.6 L803.0 513.7 L805.0 513.8 L807.0 513.9 L809.0 514.0 L811.0 514.1 L813.0 514.1 L815.0 514.2 L817.0 514.3 L819.0 514.4 L821.0 514.5 L823.0 514.6 L825.0 514.6 L827.0 514.7 L829.0 514.8 L831.0 514.9 L833.0 514.9 L835.0 515.0 L837.0 515.1 L839.0 515.2 L841.0 515.2 L843.0 515.3 L845.0 515.4 L847.0 515.5 L849.0 515.5 L851.0 515.6 L853.0 515.7 L855.0 515.7 L857.0 515.8 L859.0 515.9 L861.0 515.9 L863.0 516.0 L865.0 516.1 L867.0 516.1 L869.0 516.2 L871.0 516.3 L873.0 516.3 L875.0 516.4 L877.0 516.4 L879.0 516.5 L881.0 516.6 L883.0 516.6 L885.0 516.7 L887.0 516.8 L889.0 516.8 L891.0 516.9 L893.0 516.9 L895.0 517.0 L897.0 517.1 L899.0 517.1 L901.0 517.2 L903.0 517.2 L905.0 517.3 L907.0 517.4 L909.0 517.4 L911.0 517.5 L913.0 517.5 L915.0 517.6 L917.0 517.7 L919.0 517.7 L921.0 517.8 L923.0 517.8 L925.0 517.9 L927.0 517.9 L929.0 518.0 L931.0 518.1 L933.0 518.1 L935.0 518.2 L937.0 518.2 L939.0 518.3 L941.0 518.3 L943.0 518.4 L945.0 518.4 L947.0 518.5 L949.0 518.6 L951.0 518.6 L953.0 518.7 L955.0 518.7 L957.0 518.8 L959.0 518.8 L961.0 518.9 L963.0 518.9 L965.0 519.0 L967.0 519.0 L969.0 519.1 L971.0 519.1 L973.0 519.2 L975.0 519.2 L977.0 519.3 L979.0 519.3 L981.0 519.4 L983.0 519.4 L985.0 519.5 L987.0 519.5 L989.0 519.6 L991.0 519.6 L993.0 519.7 L995.0 519.7 L997.0 519.8 L999.0 519.8 L1001.0 519.9 L1003.0 519.9 L1005.0 520.0 L1007.0 520.0 L1009.0 520.1 L1011.0 520.1 L1013.0 520.2 L1015.0 520.2 L1017.0 520.2 L1019.0 520.3 L1021.0 520.3 L1023.0 520.4 L1025.0 520.4 L1027.0 520.5 L1029.0 520.5 L1031.0 520.5 L1033.0 520.6 L1035.0 520.6 L1037.0 520.7 L1039.0 520.7 L1041.0 520.7 L1043.0 520.8 L1045.0 520.8 L1047.0 520.9 L1049.0 520.9 L1051.0 520.9 L1053.0 521.0 L1055.0 521.0 L1057.0 521.0 L1059.0 521.1 L1061.0 521.1 L1063.0 521.1 L1065.0 521.2 L1067.0 521.2 L1069.0 521.3 L1071.0 521.3 L1073.0 521.3 L1075.0 521.4 L1077.0 521.4 L1079.0 521.4 L1081.0 521.5 L1083.0 521.5 L1085.0 521.6 L1087.0 521.6 L1089.0 521.6 L1091.0 521.7 L1093.0 521.7 L1095.0 521.8 L1097.0 521.8 L1099.0 521.8 L1101.0 521.9 L1103.0 521.9 L1105.0 521.9 L1107.0 522.0 L1109.0 522.0 L1111.0 522.1 L1113.0 522.1 L1115.0 522.1 L1117.0 522.2 L1119.0 522.2 L1121.0 522.2 L1123.0 522.3 L1125.0 522.3 L1127.0 522.4 L1129.0 522.4 L1131.0 522.4 L1133.0 522.5 L1135.0 522.5 L1137.0 522.5 L1139.0 522.6 L1141.0 522.6 L1143.0 522.6 L1145.0 522.7 L1147.0 522.7 L1149.0 522.7 L1151.0 522.8 L1153.0 522.8 L1155.0 522.8 L1157.0 522.9 L1159.0 522.9 L1161.0 522.9 L1163.0 523.0 L1165.0 523.0 L1167.0 523.0 L1169.0 523.0 L1171.0 523.1 L1173.0 523.1 L1175.0 523.1 L1177.0 523.2 L1179.0 523.2 L1181.0 523.2 L1183.0 523.2 L1185.0 523.3 L1187.0 523.3 L1189.0 523.3 L1191.0 523.3 L1193.0 523.4 L1195.0 523.4 L1197.0 523.4 L1199.0 523.4 L1201.0 523.4 L1203.0 523.5 L1205.0 523.5 L1207.0 523.5 L1209.0 523.5 L1211.0 523.5 L1213.0 523.5 L1215.0 523.6 L1217.0 523.6 L1219.0 523.6 L1221.0 523.6 L1223.0 523.6 L1225.0 523.6 L1227.0 523.6 L1229.0 523.6 L1231.0 523.7 L1233.0 523.7 L1235.0 523.7 L1237.0 523.7 L1239.0 523.7 L1241.0 523.7 L1243.0 523.7 L1245.0 523.7 L1247.0 523.7 L1249.0 523.7 L1251.0 523.7 L1253.0 523.7 L1255.0 523.7 L1257.0 523.7 L1259.0 523.7 L1261.0 523.7 L1263.0 523.7 L1265.0 523.7 L1267.0 523.6 L1269.0 523.6 L1271.0 523.6 L1273.0 523.6 L1275.0 523.6 L1277.0 523.6 L1279.0 523.6 L1281.0 523.5 L1283.0 523.5 L1285.0 523.5 L1287.0 523.5 L1289.0 523.4 L1291.0 523.4 L1293.0 523.4 L1295.0 523.4 L1297.0 523.3 L1299.0 523.3 L1301.0 523.3 L1303.0 523.2 L1305.0 523.2 L1307.0 523.2 L1309.0 523.1 L1311.0 523.1 L1313.0 523.1 L1315.0 523.0 L1317.0 523.0 L1319.0 522.9 L1321.0 522.9 L1323.0 522.9 L1325.0 522.8 L1327.0 522.8 L1329.0 522.7 L1331.0 522.7 L1333.0 522.6 L1335.0 522.6 L1337.0 522.5 L1339.0 522.5 L1341.0 522.4 L1343.0 522.4 L1345.0 522.3 L1347.0 522.3 L1349.0 522.2 L1351.0 522.2 L1353.0 522.1 L1355.0 522.1 L1357.0 522.0 L1359.0 522.0 L1361.0 521.9 L1363.0 521.8 L1365.0 521.8 L1367.0 521.7 L1369.0 521.7 L1371.0 521.6 L1373.0 521.5 L1375.0 521.5 L1377.0 521.4 L1379.0 521.4 L1381.0 521.3 L1383.0 521.2 L1385.0 521.2 L1387.0 521.1 L1389.0 521.0 L1391.0 521.0 L1393.0 520.9 L1395.0 520.8 L1397.0 520.8 L1399.0 520.7 L1401.0 520.6 L1403.0 520.6 L1405.0 520.5 L1407.0 520.4 L1409.0 520.4 L1411.0 520.3 L1413.0 520.2 L1415.0 520.2 L1417.0 520.1 L1419.0 520.0 L1421.0 520.0 L1423.0 519.9 L1425.0 519.8 L1427.0 519.7 L1429.0 519.7 L1431.0 519.6 L1433.0 519.5 L1435.0 519.4 L1437.0 519.3 L1439.0 519.2 L1441.0 519.1 L1443.0 519.0 L1445.0 518.9 L1447.0 518.8 L1449.0 518.7 L1451.0 518.6 L1453.0 518.4 L1455.0 518.3 L1457.0 518.2 L1459.0 518.1 L1461.0 518.0 L1463.0 517.8 L1465.0 517.7 L1467.0 517.6 L1469.0 517.4 L1471.0 517.3 L1473.0 517.1 L1475.0 517.0 L1477.0 516.9 L1479.0 516.7 L1481.0 516.6 L1483.0 516.4 L1485.0 516.2 L1487.0 516.1 L1489.0 515.9 L1491.0 515.8 L1493.0 515.6 L1495.0 515.4 L1497.0 515.3 L1499.0 515.1 L1501.0 514.9 L1503.0 514.8 L1505.0 514.6 L1507.0 514.4 L1509.0 514.2 L1511.0 514.1 L1513.0 513.9 L1515.0 513.7 L1517.0 513.5 L1519.0 513.3 L1521.0 513.1 L1523.0 513.0 L1525.0 512.8 L1527.0 512.6 L1529.0 512.4 L1531.0 512.2 L1533.0 512.0 L1535.0 511.8 L1537.0 511.6 L1539.0 511.4 L1541.0 511.2 L1543.0 511.0 L1545.0 510.8 L1547.0 510.6 L1549.0 510.4 L1551.0 510.2 L1553.0 510.0 L1555.0 509.8 L1557.0 509.6 L1559.0 509.4 L1561.0 509.2 L1563.0 508.9 L1565.0 508.7 L1567.0 508.5 L1569.0 508.3 L1571.0 508.1" stroke="#ff8000" stroke-width="1" fill="none"/><path d="M35.0 482.0 L37.0 482.0 L39.0 482.1 L41.0 482.1 L43.0 482.2 L45.0 482.2 L47.0 482.3 L49.0 482.3 L51.0 482.4 L53.0 482.5 L55.0 482.6 L57.0 482.6 L59.0 482.7 L61.0 482.8 L63.0 482.9 L65.0 483.0 L67.0 483.1 L69.0 483.2 L71.0 483.3 L73.0 483.4 L75.0 483.5 L77.0 483.6 L79.0 483.7 L81.0 483.8 L83.0 483.9 L85.0 484.1 L87.0 484.2 L89.0 484.3 L91.0 484.4 L93.0 484.6 L95.0 484.7 L97.0 484.8 L99.0 485.0 L101.0 485.1 L103.0 485.2 L105.0 485.4 L107.0 485.5 L109.0 485.6 L111.0 485.8 L113.0 485.9 L115.0 486.1 L117.0 486.2 L119.0 486.4 L121.0 486.6 L123.0 486.7 L125.0 486.9 L127.0 487.1 L129.0 487.4 L131.0 487.6 L133.0 487.8 L135.0 488.0 L137.0 488.3 L139.0 488.5 L141.0 488.7 L143.0 489.0 L145.0 489.3 L147.0 489.5 L149.0 489.8 L151.0 490.0 L153.0 490.3 L155.0 490.6 L157.0 490.8 L159.0 491.1 L161.0 491.4 L163.0 491.6 L165.0 491.9 L167.0 492.1 L169.0 492.4 L171.0 492.7 L173.0 492.9 L175.0 493.1 L177.0 493.4 L179.0 493.6 L181.0 493.9 L183.0 494.1 L185.0 494.3 L187.0 494.5 L189.0 494.7 L191.0 494.9 L193.0 495.1 L195.0 495.3 L197.0 495.5 L199.0 495.7 L201.0 495.9 L203.0 496.1 L205.0 496.3 L207.0 496.5 L209.0 496.7 L211.0 496.9 L213.0 497.1 L215.0 497.3 L217.0 497.5 L219.0 497.7 L221.0 497.9 L223.0 498.1 L225.0 498.3 L227.0 498.5 L229.0 498.7 L231.0 498.9 L233.0 499.1 L235.0 499.3 L237.0 499.5 L239.0 499.7 L241.0 499.9 L243.0 500.0 L245.0 500.2 L247.0 500.4 L249.0 500.6 L251.0 500.8 L253.0 501.0 L255.0 501.2 L257.0 501.4 L259.0 501.6 L261.0 501.8 L263.0 501.9 L265.0 502.1 L267.0 502.3 L269.0 502.5 L271.0 502.7 L273.0 502.9 L275.0 503.1 L277.0 503.2 L279.0 503.4 L281.0 503.6 L283.0 503.8 L285.0 504.0 L287.0 504.2 L289.0 504.3 L291.0 504.5 L293.0 504.7 L295.0 504.9 L297.0 505.1 L299.0 505.3 L301.0 505.4 L303.0 505.6 L305.0 505.8 L307.0 506.0 L309.0 506.2 L311.0 506.3 L313.0 506.5 L315.0 506.7 L317.0 506.9 L319.0 507.0 L321.0 507.2 L323.0 507.4 L325.0 507.6 L327.0 507.7 L329.0 507.9 L331.0 508.1 L333.0 508.3 L335.0 508.4 L337.0 508.6 L339.0 508.8 L341.0 509.0 L343.0 509.1 L345.0 509.3 L347.0 509.5 L349.0 509.7 L351.0 509.8 L353.0 510.0 L355.0 510.2 L357.0 510.4 L359.0 510.5 L361.0 510.7 L363.0 510.9 L365.0 511.0 L367.0 511.2 L369.0 511.4 L371.0 511.5 L373.0 511.7 L375.0 511.9 L377.0 512.1 L379.0 512.2 L381.0 512.4 L383.0 512.6 L385.0 512.7 L387.0 512.9 L389.0 513.1 L391.0 513.2 L393.0 513.4 L395.0 513.6 L397.0 513.7 L399.0 513.9 L401.0 514.1 L403.0 514.2 L405.0 514.4 L407.0 514.6 L409.0 514.7 L411.0 514.9 L413.0 515.1 L415.0 515.2 L417.0 515.4 L419.0 515.5 L421.0 515.7 L423.0 515.9 L425.0 516.0 L427.0 516.2 L429.0 516.4 L431.0 516.5 L433.0 516.7 L435.0 516.9 L437.0 517.0 L439.0 517.2 L441.0 517.3 L443.0 517.5 L445.0 517.7 L447.0 517.8 L449.0 518.0 L451.0 518.1 L453.0 518.3 L455.0 518.5 L457.0 518.6 L459.0 518.8 L461.0 519.0 L463.0 519.1 L465.0 519.3 L467.0 519.4 L469.0 519.6 L471.0 519.8 L473.0 519.9 L475.0 520.1 L477.0 520.2 L479.0 520.4 L481.0 520.5 L483.0 520.7 L485.0 520.9 L487.0 521.0 L489.0 521.2 L491.0 521.3 L493.0 521.5 L495.0 521.7 L497.0 521.8 L499.0 522.0 L501.0 522.1 L503.0 522.3 L505.0 522.4 L507.0 522.6 L509.0 522.8 L511.0 522.9 L513.0 523.1 L515.0 523.2 L517.0 523.4 L519.0 523.6 L521.0 523.7 L523.0 523.9 L525.0 524.0 L527.0 524.2 L529.0 524.3 L531.0 524.5 L533.0 524.6 L535.0 524.8 L537.0 525.0 L539.0 525.1 L541.0 525.3 L543.0 525.4 L545.0 525.6 L547.0 525.7 L549.0 525.9 L551.0 526.1 L553.0 526.2 L555.0 526.4 L557.0 526.5 L559.0 526.7 L561.0 526.8 L563.0 527.0 L565.0 527.1 L567.0 527.3 L569.0 527.5 L571.0 527.6 L573.0 527.8 L575.0 527.9 L577.0 528.1 L579.0 528.2 L581.0 528.4 L583.0 528.6 L585.0 528.7 L587.0 528.9 L589.0 529.0 L591.0 529.2 L593.0 529.3 L595.0 529.5 L597.0 529.6 L599.0 529.8 L601.0 530.0 L603.0 530.1 L605.0 530.3 L607.0 530.4 L609.0 530.6 L611.0 530.7 L613.0 530.9 L615.0 531.1 L617.0 531.2 L619.0 531.4 L621.0 531.5 L623.0 531.7 L625.0 531.8 L627.0 532.0 L629.0 532.1 L631.0 532.3 L633.0 532.5 L635.0 532.6 L637.0 532.8 L639.0 532.9 L641.0 533.1 L643.0 533.2 L645.0 533.4 L647.0 533.6 L649.0 533.7 L651.0 533.9 L653.0 534.0 L655.0 534.2 L657.0 534.3 L659.0 534.5 L661.0 534.7 L663.0 534.8 L665.0 535.0 L667.0 535.1 L669.0 535.3 L671.0 535.5 L673.0 535.6 L675.0 535.8 L677.0 535.9 L679.0 536.1 L681.0 536.3 L683.0 536.4 L685.0 536.6 L687.0 536.7 L689.0 536.9 L691.0 537.0 L693.0 537.2 L695.0 537.4 L697.0 537.5 L699.0 537.7 L701.0 537.9 L703.0 538.0 L705.0 538.2 L707.0 538.3 L709.0 538.5 L711.0 538.7 L713.0 538.8 L715.0 539.0 L717.0 539.1 L719.0 539.3 L721.0 539.5 L723.0 539.6 L725.0 539.8 L727.0 540.0 L729.0 540.1 L731.0 540.3 L733.0 540.4 L735.0 540.6 L737.0 540.8 L739.0 540.9 L741.0 541.1 L743.0 541.3 L745.0 541.4 L747.0 541.6 L749.0 541.8 L751.0 541.9 L753.0 542.1 L755.0 542.3 L757.0 542.4 L759.0 542.6 L761.0 542.8 L763.0 542.9 L765.0 543.1 L767.0 543.3 L769.0 543.4 L771.0 543.6 L773.0 543.8 L775.0 543.9 L777.0 544.1 L779.0 544.3 L781.0 544.4 L783.0 544.6 L785.0 544.8 L787.0 544.9 L789.0 545.1 L791.0 545.3 L793.0 545.4 L795.0 545.6 L797.0 545.8 L799.0 546.0 L801.0 546.1 L803.0 546.3 L805.0 546.5 L807.0 546.6 L809.0 546.8 L811.0 547.0 L813.0 547.2 L815.0 547.3 L817.0 547.5 L819.0 547.7 L821.0 547.9 L823.0 548.0 L825.0 548.2 L827.0 548.4 L829.0 548.6 L831.0 548.7 L833.0 548.9 L835.0 549.1 L837.0 549.3 L839.0 549.4 L841.0 549.6 L843.0 549.8 L845.0 550.0 L847.0 550.2 L849.0 550.3 L851.0 550.5 L853.0 550.7 L855.0 550.9 L857.0 551.1 L859.0 551.2 L861.0 551.4 L863.0 551.6 L865.0 551.8 L867.0 552.0 L869.0 552.2 L871.0 552.4 L873.0 552.7 L875.0 552.9 L877.0 553.1 L879.0 553.4 L881.0 553.6 L883.0 553.9 L885.0 554.1 L887.0 554.4 L889.0 554.6 L891.0 554.9 L893.0 555.1 L895.0 555.4 L897.0 555.6 L899.0 555.8 L901.0 556.0 L903.0 556.2 L905.0 556.3 L907.0 556.5 L909.0 556.6 L911.0 556.7 L913.0 556.8 L915.0 556.9 L917.0 557.0 L919.0 557.0 L921.0 557.0 L923.0 557.0 L925.0 557.0 L927.0 557.0 L929.0 557.0 L931.0 557.0 L933.0 557.0 L935.0 556.9 L937.0 556.9 L939.0 556.9 L941.0 556.9 L943.0 556.9 L945.0 556.8 L947.0 556.8 L949.0 556.8 L951.0 556.8 L953.0 556.7 L955.0 556.7 L957.0 556.7 L959.0 556.7 L961.0 556.6 L963.0 556.6 L965.0 556.6 L967.0 556.5 L969.0 556.5 L971.0 556.5 L973.0 556.4 L975.0 556.4 L977.0 556.4 L979.0 556.3 L981.0 556.3 L983.0 556.3 L985.0 556.2 L987.0 556.2 L989.0 556.2 L991.0 556.1 L993.0 556.1 L995.0 556.1 L997.0 556.0 L999.0 556.0 L1001.0 556.0 L1003.0 556.0 L1005.0 555.9 L1007.0 555.9 L1009.0 555.9 L1011.0 555.8 L1013.0 555.8 L1015.0 555.8 L1017.0 555.7 L1019.0 555.7 L1021.0 555.7 L1023.0 555.6 L1025.0 555.6 L1027.0 555.5 L1029.0 555.5 L1031.0 555.5 L1033.0 555.4 L1035.0 555.4 L1037.0 555.4 L1039.0 555.3 L1041.0 555.3 L1043.0 555.2 L1045.0 555.2 L1047.0 555.2 L1049.0 555.1 L1051.0 555.1 L1053.0 555.0 L1055.0 555.0" stroke="#00ff00" stroke-width="2" fill="none"/><path d="M973.0 560.0 L975.0 560.0 L977.0 560.0 L979.0 559.9 L981.0 559.9 L983.0 559.9 L985.0 559.8 L987.0 559.8 L989.0 559.8 L991.0 559.7 L993.0 559.7 L995.0 559.7 L997.0 559.6 L999.0 559.6 L1001.0 559.5 L1003.0 559.5 L1005.0 559.4 L1007.0 559.4 L1009.0 559.3 L1011.0 559.3 L1013.0 559.2 L1015.0 559.1 L1017.0 559.1 L1019.0 559.0 L1021.0 558.9 L1023.0 558.9 L1025.0 558.8 L1027.0 558.7 L1029.0 558.7 L1031.0 558.6 L1033.0 558.5 L1035.0 558.5 L1037.0 558.4 L1039.0 558.3 L1041.0 558.2 L1043.0 558.2 L1045.0 558.1 L1047.0 558.0 L1049.0 557.9 L1051.0 557.9 L1053.0 557.8 L1055.0 557.7 L1057.0 557.6 L1059.0 557.5 L1061.0 557.4 L1063.0 557.4 L1065.0 557.3 L1067.0 557.2 L1069.0 557.1 L1071.0 557.0 L1073.0 556.9 L1075.0 556.7 L1077.0 556.6 L1079.0 556.5 L1081.0 556.4 L1083.0 556.3 L1085.0 556.2 L1087.0 556.0 L1089.0 555.9 L1091.0 555.8 L1093.0 555.7 L1095.0 555.5 L1097.0 555.4 L1099.0 555.2 L1101.0 555.1 L1103.0 555.0 L1105.0 554.8 L1107.0 554.7 L1109.0 554.5 L1111.0 554.4 L1113.0 554.2 L1115.0 554.0 L1117.0 553.9 L1119.0 553.7 L1121.0 553.6 L1123.0 553.4 L1125.0 553.2 L1127.0 553.0 L1129.0 552.9 L1131.0 552.7 L1133.0 552.5 L1135.0 552.3 L1137.0 552.2 L1139.0 552.0 L1141.0 551.8 L1143.0 551.6 L1145.0 551.4 L1147.0 551.2 L1149.0 551.0 L1151.0 550.9 L1153.0 550.7 L1155.0 550.5 L1157.0 550.3 L1159.0 550.1 L1161.0 549.9 L1163.0 549.7 L1165.0 549.5 L1167.0 549.3 L1169.0 549.1 L1171.0 548.8 L1173.0 548.6 L1175.0 548.4 L1177.0 548.2 L1179.0 548.0 L1181.0 547.8 L1183.0 547.6 L1185.0 547.4 L1187.0 547.2 L1189.0 546.9 L1191.0 546.7 L1193.0 546.5 L1195.0 546.3 L1197.0 546.1 L1199.0 545.8 L1201.0 545.6 L1203.0 545.4 L1205.0 545.2 L1207.0 544.9 L1209.0 544.7 L1211.0 544.5 L1213.0 544.3 L1215.0 544.0 L1217.0 543.8 L1219.0 543.6 L1221.0 543.4 L1223.0 543.1 L1225.0 542.9 L1227.0 542.7 L1229.0 542.4 L1231.0 542.2 L1233.0 542.0 L1235.0 541.7 L1237.0 541.5 L1239.0 541.3 L1241.0 541.0 L1243.0 540.8 L1245.0 540.6 L1247.0 540.3 L1249.0 540.1 L1251.0 539.9 L1253.0 539.6 L1255.0 539.4 L1257.0 539.2 L1259.0 538.9 L1261.0 538.7 L1263.0 538.4 L1265.0 538.1 L1267.0 537.9 L1269.0 537.6 L1271.0 537.4 L1273.0 537.1 L1275.0 536.8 L1277.0 536.5 L1279.0 536.2 L1281.0 536.0 L1283.0 535.7 L1285.0 535.4 L1287.0 535.1 L1289.0 534.8 L1291.0 534.5 L1293.0 534.2 L1295.0 533.9 L1297.0 533.6 L1299.0 533.3 L1301.0 533.0 L1303.0 532.7 L1305.0 532.3 L1307.0 532.0 L1309.0 531.7 L1311.0 531.4 L1313.0 531.1 L1315.0 530.7 L1317.0 530.4 L1319.0 530.1 L1321.0 529.8 L1323.0 529.4 L1325.0 529.1 L1327.0 528.8 L1329.0 528.4 L1331.0 528.1 L1333.0 527.8 L1335.0 527.4 L1337.0 527.1 L1339.0 526.7 L1341.0 526.4 L1343.0 526.1 L1345.0 525.7 L1347.0 525.4 L1349.0 525.0 L1351.0 524.7 L1353.0 524.3 L1355.0 524.0 L1357.0 523.6 L1359.0 523.3 L1361.0 523.0 L1363.0 522.6 L1365.0 522.3 L1367.0 521.9 L1369.0 521.6 L1371.0 521.2 L1373.0 520.9 L1375.0 520.5 L1377.0 520.2 L1379.0 519.8 L1381.0 519.5 L1383.0 519.2 L1385.0 518.8 L1387.0 518.5 L1389.0 518.1 L1391.0 517.8 L1393.0 517.5 L1395.0 517.1 L1397.0 516.8 L1399.0 516.4 L1401.0 516.1 L1403.0 515.8 L1405.0 515.4 L1407.0 515.1 L1409.0 514.8 L1411.0 514.5 L1413.0 514.1 L1415.0 513.8 L1417.0 513.5 L1419.0 513.2 L1421.0 512.8 L1423.0 512.5 L1425.0 512.2 L1427.0 511.9 L1429.0 511.6 L1431.0 511.2 L1433.0 510.9 L1435.0 510.6 L1437.0 510.3 L1439.0 510.0 L1441.0 509.7 L1443.0 509.3 L1445.0 509.0 L1447.0 508.7 L1449.0 508.4 L1451.0 508.1 L1453.0 507.7 L1455.0 507.4 L1457.0 507.1 L1459.0 506.8 L1461.0 506.5 L1463.0 506.1 L1465.0 505.8 L1467.0 505.5 L1469.0 505.2 L1471.0 504.9 L1473.0 504.5 L1475.0 504.2 L1477.0 503.9 L1479.0 503.6 L1481.0 503.3 L1483.0 502.9 L1485.0 502.6 L1487.0 502.3 L1489.0 502.0 L1491.0 501.7 L1493.0 501.3 L1495.0 501.0 L1497.0 500.7 L1499.0 500.4 L1501.0 500.1 L1503.0 499.7 L1505.0 499.4 L1507.0 499.1 L1509.0 498.8 L1511.0 498.5 L1513.0 498.2 L1515.0 497.8 L1517.0 497.5 L1519.0 497.2 L1521.0 496.9 L1523.0 496.6 L1525.0 496.2 L1527.0 495.9 L1529.0 495.6 L1531.0 495.3 L1533.0 494.9 L1535.0 494.6 L1537.0 494.3 L1539.0 494.0 L1541.0 493.7 L1543.0 493.3 L1545.0 493.0 L1547.0 492.7 L1549.0 492.4 L1551.0 492.1 L1553.0 491.7 L1555.0 491.4 L1557.0 491.1 L1559.0 490.8 L1561.0 490.5 L1563.0 490.1 L1565.0 489.8 L1567.0 489.5 L1569.0 489.2 L1571.0 488.9" stroke="#ff0000" stroke-width="2" fill="none"/><path d="M35.0 581.4 L37.0 581.3 L39.0 581.1 L41.0 581.0 L43.0 580.9 L45.0 580.7 L47.0 580.6 L49.0 580.5 L51.0 580.3 L53.0 580.2 L55.0 580.1 L57.0 579.9 L59.0 579.8 L61.0 579.7 L63.0 579.6 L65.0 579.5 L67.0 579.3 L69.0 579.2 L71.0 579.1 L73.0 579.0 L75.0 578.9 L77.0 578.8 L79.0 578.7 L81.0 578.6 L83.0 578.5 L85.0 578.4 L87.0 578.3 L89.0 578.2 L91.0 578.1 L93.0 578.0 L95.0 577.9 L97.0 577.9 L99.0 577.8 L101.0 577.7 L103.0 577.6 L105.0 577.6 L107.0 577.5 L109.0 577.4 L111.0 577.4 L113.0 577.3 L115.0 577.3 L117.0 577.2 L119.0 577.2 L121.0 577.1 L123.0 577.1 L125.0 577.0 L127.0 577.0 L129.0 577.0 L131.0 576.9 L133.0 576.9 L135.0 576.8 L137.0 576.8 L139.0 576.8 L141.0 576.7 L143.0 576.7 L145.0 576.7 L147.0 576.6 L149.0 576.6 L151.0 576.6 L153.0 576.5 L155.0 576.5 L157.0 576.5 L159.0 576.5 L161.0 576.4 L163.0 576.4 L165.0 576.4 L167.0 576.3 L169.0 576.3 L171.0 576.3 L173.0 576.2 L175.0 576.2 L177.0 576.2 L179.0 576.1 L181.0 576.1 L183.0 576.1 L185.0 576.0 L187.0 576.0 L189.0 576.0 L191.0 575.9 L193.0 575.9 L195.0 575.8 L197.0 575.8 L199.0 575.8 L201.0 575.7 L203.0 575.7 L205.0 575.7 L207.0 575.6 L209.0 575.6 L211.0 575.5 L213.0 575.5 L215.0 575.5 L217.0 575.4 L219.0 575.4 L221.0 575.3 L223.0 575.3 L225.0 575.3 L227.0 575.2 L229.0 575.2 L231.0 575.2 L233.0 575.1 L235.0 575.1 L237.0 575.0 L239.0 575.0 L241.0 575.0 L243.0 574.9 L245.0 574.9 L247.0 574.9 L249.0 574.8 L251.0 574.8 L253.0 574.7 L255.0 574.7 L257.0 574.7 L259.0 574.6 L261.0 574.6 L263.0 574.5 L265.0 574.5 L267.0 574.5 L269.0 574.4 L271.0 574.4 L273.0 574.4 L275.0 574.3 L277.0 574.3 L279.0 574.2 L281.0 574.2 L283.0 574.2 L285.0 574.1 L287.0 574.1 L289.0 574.1 L291.0 574.0 L293.0 574.0 L295.0 573.9 L297.0 573.9 L299.0 573.9 L301.0 573.8 L303.0 573.8 L305.0 573.7 L307.0 573.7 L309.0 573.7 L311.0 573.6 L313.0 573.6 L315.0 573.6 L317.0 573.5 L319.0 573.5 L321.0 573.4 L323.0 573.4 L325.0 573.4 L327.0 573.3 L329.0 573.3 L331.0 573.3 L333.0 573.2 L335.0 573.2 L337.0 573.1 L339.0 573.1 L341.0 573.1 L343.0 573.0 L345.0 573.0 L347.0 572.9 L349.0 572.9 L351.0 572.9 L353.0 572.8 L355.0 572.8 L357.0 572.8 L359.0 572.7 L361.0 572.7 L363.0 572.6 L365.0 572.6 L367.0 572.6 L369.0 572.5 L371.0 572.5 L373.0 572.4 L375.0 572.4 L377.0 572.4 L379.0 572.3 L381.0 572.3 L383.0 572.2 L385.0 572.2 L387.0 572.2 L389.0 572.1 L391.0 572.1 L393.0 572.1 L395.0 572.0 L397.0 572.0 L399.0 571.9 L401.0 571.9 L403.0 571.9 L405.0 571.8 L407.0 571.8 L409.0 571.7 L411.0 571.7 L413.0 571.7 L415.0 571.6 L417.0 571.6 L419.0 571.5 L421.0 571.5 L423.0 571.5 L425.0 571.4 L427.0 571.4 L429.0 571.3 L431.0 571.3 L433.0 571.3 L435.0 571.2 L437.0 571.2 L439.0 571.1 L441.0 571.1 L443.0 571.1 L445.0 571.0 L447.0 571.0 L449.0 571.0 L451.0 570.9 L453.0 570.9 L455.0 570.8 L457.0 570.8 L459.0 570.8 L461.0 570.7 L463.0 570.7 L465.0 570.6 L467.0 570.6 L469.0 570.5 L471.0 570.5 L473.0 570.5 L475.0 570.4 L477.0 570.4 L479.0 570.3 L481.0 570.3 L483.0 570.3 L485.0 570.2 L487.0 570.2 L489.0 570.1 L491.0 570.1 L493.0 570.1 L495.0 570.0 L497.0 570.0 L499.0 569.9 L501.0 569.9 L503.0 569.9 L505.0 569.8 L507.0 569.8 L509.0 569.7 L511.0 569.7 L513.0 569.7 L515.0 569.6 L517.0 569.6 L519.0 569.5 L521.0 569.5 L523.0 569.4 L525.0 569.4 L527.0 569.4 L529.0 569.3 L531.0 569.3 L533.0 569.2 L535.0 569.2 L537.0 569.2 L539.0 569.1 L541.0 569.1 L543.0 569.0 L545.0 569.0 L547.0 568.9 L549.0 568.9 L551.0 568.9 L553.0 568.8 L555.0 568.8 L557.0 568.7 L559.0 568.7 L561.0 568.6 L563.0 568.6 L565.0 568.6 L567.0 568.5 L569.0 568.5 L571.0 568.4 L573.0 568.4 L575.0 568.3 L577.0 568.3 L579.0 568.3 L581.0 568.2 L583.0 568.2 L585.0 568.1 L587.0 568.1 L589.0 568.0 L591.0 568.0 L593.0 568.0 L595.0 567.9 L597.0 567.9 L599.0 567.8 L601.0 567.8 L603.0 567.7 L605.0 567.7 L607.0 567.6 L609.0 567.6 L611.0 567.6 L613.0 567.5 L615.0 567.5 L617.0 567.4 L619.0 567.4 L621.0 567.3 L623.0 567.3 L625.0 567.2 L627.0 567.2 L629.0 567.2 L631.0 567.1 L633.0 567.1 L635.0 567.0 L637.0 567.0 L639.0 566.9 L641.0 566.9 L643.0 566.8 L645.0 566.8 L647.0 566.7 L649.0 566.7 L651.0 566.7 L653.0 566.6 L655.0 566.6 L657.0 566.5 L659.0 566.5 L661.0 566.4 L663.0 566.4 L665.0 566.3 L667.0 566.3 L669.0 566.2 L671.0 566.2 L673.0 566.1 L675.0 566.1 L677.0 566.0 L679.0 566.0 L681.0 566.0 L683.0 565.9 L685.0 565.9 L687.0 565.8 L689.0 565.8 L691.0 565.7 L693.0 565.7 L695.0 565.6 L697.0 565.6 L699.0 565.5 L701.0 565.5 L703.0 565.4 L705.0 565.4 L707.0 565.3 L709.0 565.3 L711.0 565.2 L713.0 565.2 L715.0 565.1 L717.0 565.1 L719.0 565.0 L721.0 565.0 L723.0 564.9 L725.0 564.9 L727.0 564.8 L729.0 564.8 L731.0 564.7 L733.0 564.7 L735.0 564.6 L737.0 564.6 L739.0 564.5 L741.0 564.5 L743.0 564.4 L745.0 564.4 L747.0 564.3 L749.0 564.3 L751.0 564.2 L753.0 564.2 L755.0 564.1 L757.0 564.1 L759.0 564.0 L761.0 564.0 L763.0 563.9 L765.0 563.9 L767.0 563.8 L769.0 563.8 L771.0 563.7 L773.0 563.7 L775.0 563.6 L777.0 563.6 L779.0 563.5 L781.0 563.5 L783.0 563.4 L785.0 563.4 L787.0 563.3 L789.0 563.3 L791.0 563.2 L793.0 563.2 L795.0 563.1 L797.0 563.1 L799.0 563.0 L801.0 562.9 L803.0 562.9 L805.0 562.8 L807.0 562.8 L809.0 562.7 L811.0 562.7 L813.0 562.6 L815.0 562.6 L817.0 562.5 L819.0 562.5 L821.0 562.4 L823.0 562.4 L825.0 562.3 L827.0 562.2 L829.0 562.2 L831.0 562.1 L833.0 562.1 L835.0 562.0 L837.0 562.0 L839.0 561.9 L841.0 561.9 L843.0 561.8 L845.0 561.8 L847.0 561.7 L849.0 561.6 L851.0 561.6 L853.0 561.5 L855.0 561.5 L857.0 561.4 L859.0 561.4 L861.0 561.3 L863.0 561.2 L865.0 561.2 L867.0 561.1 L869.0 561.1 L871.0 561.0 L873.0 561.0 L875.0 560.9 L877.0 560.8 L879.0 560.8 L881.0 560.7 L883.0 560.7 L885.0 560.6 L887.0 560.6 L889.0 560.5 L891.0 560.4 L893.0 560.4 L895.0 560.3 L897.0 560.3 L899.0 560.2 L901.0 560.1 L903.0 560.1 L905.0 560.0 L907.0 560.0 L909.0 559.9 L911.0 559.8 L913.0 559.8 L915.0 559.7 L917.0 559.7 L919.0 559.6 L921.0 559.5 L923.0 559.5 L925.0 559.4 L927.0 559.3 L929.0 559.3 L931.0 559.2 L933.0 559.1 L935.0 559.1 L937.0 559.0 L939.0 558.9 L941.0 558.9 L943.0 558.8 L945.0 558.7 L947.0 558.7 L949.0 558.6 L951.0 558.5 L953.0 558.5 L955.0 558.4 L957.0 558.3 L959.0 558.3 L961.0 558.2 L963.0 558.1 L965.0 558.0 L967.0 558.0 L969.0 557.9 L971.0 557.8 L973.0 557.8 L975.0 557.7 L977.0 557.6 L979.0 557.5 L981.0 557.5 L983.0 557.4 L985.0 557.3 L987.0 557.2 L989.0 557.1 L991.0 557.1 L993.0 557.0 L995.0 556.9 L997.0 556.8 L999.0 556.8 L1001.0 556.7 L1003.0 556.6 L1005.0 556.5 L1007.0 556.4 L1009.0 556.3 L1011.0 556.3 L1013.0 556.2 L1015.0 556.1 L1017.0 556.0 L1019.0 555.9 L1021.0 555.8 L1023.0 555.7 L1025.0 555.7 L1027.0 555.6 L1029.0 555.5 L1031.0 555.4 L1033.0 555.3 L1035.0 555.2 L1037.0 555.1 L1039.0 555.0 L1041.0 555.0 L1043.0 554.9 L1045.0 554.8 L1047.0 554.7 L1049.0 554.6 L1051.0 554.5 L1053.0 554.4 L1055.0 554.3 L1057.0 554.2 L1059.0 554.1 L1061.0 554.0 L1063.0 553.9 L1065.0 553.8 L1067.0 553.7 L1069.0 553.6 L1071.0 553.5 L1073.0 553.4 L1075.0 553.3 L1077.0 553.2 L1079.0 553.1 L1081.0 553.0 L1083.0 552.8 L1085.0 552.7 L1087.0 552.6 L1089.0 552.5 L1091.0 552.4 L1093.0 552.3 L1095.0 552.2 L1097.0 552.0 L1099.0 551.9 L1101.0 551.8 L1103.0 551.7 L1105.0 551.6 L1107.0 551.4 L1109.0 551.3 L1111.0 551.2 L1113.0 551.1 L1115.0 550.9 L1117.0 550.8 L1119.0 550.7 L1121.0 550.5 L1123.0 550.4 L1125.0 550.3 L1127.0 550.2 L1129.0 550.0 L1131.0 549.9 L1133.0 549.8 L1135.0 549.6 L1137.0 549.5 L1139.0 549.4 L1141.0 549.2 L1143.0 549.1 L1145.0 549.0 L1147.0 548.8 L1149.0 548.7 L1151.0 548.5 L1153.0 548.4 L1155.0 548.3 L1157.0 548.1 L1159.0 548.0 L1161.0 547.9 L1163.0 547.7 L1165.0 547.6 L1167.0 547.4 L1169.0 547.3 L1171.0 547.2 L1173.0 547.0 L1175.0 546.9 L1177.0 546.7 L1179.0 546.6 L1181.0 546.5 L1183.0 546.3 L1185.0 546.2 L1187.0 546.0 L1189.0 545.9 L1191.0 545.8 L1193.0 545.6 L1195.0 545.5 L1197.0 545.3 L1199.0 545.2 L1201.0 545.1 L1203.0 544.9 L1205.0 544.8 L1207.0 544.6 L1209.0 544.5 L1211.0 544.4 L1213.0 544.2 L1215.0 544.1 L1217.0 543.9 L1219.0 543.8 L1221.0 543.7 L1223.0 543.5 L1225.0 543.4 L1227.0 543.2 L1229.0 543.1 L1231.0 543.0 L1233.0 542.8 L1235.0 542.7 L1237.0 542.6 L1239.0 542.4 L1241.0 542.3 L1243.0 542.2 L1245.0 542.0 L1247.0 541.9 L1249.0 541.8 L1251.0 541.6 L1253.0 541.5 L1255.0 541.4 L1257.0 541.2 L1259.0 541.1 L1261.0 541.0 L1263.0 540.9 L1265.0 540.7 L1267.0 540.6 L1269.0 540.5 L1271.0 540.3 L1273.0 540.2 L1275.0 540.1 L1277.0 540.0 L1279.0 539.8 L1281.0 539.7 L1283.0 539.6 L1285.0 539.5 L1287.0 539.3 L1289.0 539.2 L1291.0 539.1 L1293.0 539.0 L1295.0 538.8 L1297.0 538.7 L1299.0 538.6 L1301.0 538.5 L1303.0 538.3 L1305.0 538.2 L1307.0 538.1 L1309.0 538.0 L1311.0 537.8 L1313.0 537.7 L1315.0 537.6 L1317.0 537.5 L1319.0 537.3 L1321.0 537.2 L1323.0 537.1 L1325.0 537.0 L1327.0 536.8 L1329.0 536.7 L1331.0 536.6 L1333.0 536.5 L1335.0 536.3 L1337.0 536.2 L1339.0 536.1 L1341.0 535.9 L1343.0 535.8 L1345.0 535.7 L1347.0 535.6 L1349.0 535.4 L1351.0 535.3 L1353.0 535.2 L1355.0 535.0 L1357.0 534.9 L1359.0 534.8 L1361.0 534.6 L1363.0 534.5 L1365.0 534.4 L1367.0 534.2 L1369.0 534.1 L1371.0 534.0 L1373.0 533.8 L1375.0 533.7 L1377.0 533.6 L1379.0 533.4 L1381.0 533.3 L1383.0 533.1 L1385.0 533.0 L1387.0 532.9 L1389.0 532.7 L1391.0 532.6 L1393.0 532.4 L1395.0 532.3 L1397.0 532.1 L1399.0 532.0 L1401.0 531.9 L1403.0 531.7 L1405.0 531.6 L1407.0 531.4 L1409.0 531.3 L1411.0 531.1 L1413.0 530.9 L1415.0 530.8 L1417.0 530.6 L1419.0 530.5 L1421.0 530.3 L1423.0 530.2 L1425.0 530.0 L1427.0 529.8 L1429.0 529.7 L1431.0 529.5 L1433.0 529.4 L1435.0 529.2 L1437.0 529.0 L1439.0 528.9 L1441.0 528.7 L1443.0 528.5 L1445.0 528.3 L1447.0 528.2 L1449.0 528.0 L1451.0 527.8 L1453.0 527.7 L1455.0 527.5 L1457.0 527.3 L1459.0 527.1 L1461.0 527.0 L1463.0 526.8 L1465.0 526.6 L1467.0 526.4 L1469.0 526.2 L1471.0 526.0 L1473.0 525.9 L1475.0 525.7 L1477.0 525.5 L1479.0 525.3 L1481.0 525.1 L1483.0 524.9 L1485.0 524.7 L1487.0 524.6 L1489.0 524.4 L1491.0 524.2 L1493.0 524.0 L1495.0 523.8 L1497.0 523.6 L1499.0 523.4 L1501.0 523.2 L1503.0 523.0 L1505.0 522.8 L1507.0 522.6 L1509.0 522.4 L1511.0 522.2 L1513.0 522.0 L1515.0 521.8 L1517.0 521.6 L1519.0 521.4 L1521.0 521.2 L1523.0 521.0 L1525.0 520.8 L1527.0 520.6 L1529.0 520.4 L1531.0 520.2 L1533.0 520.0 L1535.0 519.8 L1537.0 519.6 L1539.0 519.3 L1541.0 519.1 L1543.0 518.9 L1545.0 518.7 L1547.0 518.5 L1549.0 518.3 L1551.0 518.1 L1553.0 517.9 L1555.0 517.6 L1557.0 517.4 L1559.0 517.2 L1561.0 517.0 L1563.0 516.8 L1565.0 516.6 L1567.0 516.3 L1569.0 516.1 L1571.0 515.9" stroke="#00ff00" stroke-width="3" fill="none"/><path d="M35.0 481.5 L37.0 481.6 L39.0 481.8 L41.0 482.0 L43.0 482.2 L45.0 482.4 L47.0 482.6 L49.0 482.8 L51.0 483.1 L53.0 483.4 L55.0 483.6 L57.0 483.9 L59.0 484.3 L61.0 484.6 L63.0 484.9 L65.0 485.3 L67.0 485.7 L69.0 486.0 L71.0 486.4 L73.0 486.8 L75.0 487.3 L77.0 487.7 L79.0 488.1 L81.0 488.6 L83.0 489.0 L85.0 489.5 L87.0 490.0 L89.0 490.5 L91.0 490.9 L93.0 491.4 L95.0 491.9 L97.0 492.5 L99.0 493.0 L101.0 493.5 L103.0 494.0 L105.0 494.6 L107.0 495.1 L109.0 495.6 L111.0 496.2 L113.0 496.7 L115.0 497.3 L117.0 497.9 L119.0 498.5 L121.0 499.2 L123.0 500.0 L125.0 500.8 L127.0 501.6 L129.0 502.4 L131.0 503.3 L133.0 504.2 L135.0 505.2 L137.0 506.1 L139.0 507.1 L141.0 508.1 L143.0 509.1 L145.0 510.2 L147.0 511.2 L149.0 512.3 L151.0 513.3 L153.0 514.4 L155.0 515.5 L157.0 516.5 L159.0 517.6 L161.0 518.6 L163.0 519.6 L165.0 520.6 L167.0 521.6 L169.0 522.6 L171.0 523.6 L173.0 524.5 L175.0 525.4 L177.0 526.2 L179.0 527.1 L181.0 527.9 L183.0 528.6 L185.0 529.3 L187.0 530.0 L189.0 530.6 L191.0 531.3 L193.0 531.9 L195.0 532.6 L197.0 533.2 L199.0 533.9 L201.0 534.5 L203.0 535.2 L205.0 535.8 L207.0 536.5 L209.0 537.1 L211.0 537.8 L213.0 538.4 L215.0 539.1 L217.0 539.7 L219.0 540.3 L221.0 541.0 L223.0 541.6 L225.0 542.3 L227.0 542.9 L229.0 543.6 L231.0 544.2 L233.0 544.9 L235.0 545.5 L237.0 546.1 L239.0 546.8 L241.0 547.4 L243.0 548.1 L245.0 548.7 L247.0 549.3 L249.0 550.0 L251.0 550.6 L253.0 551.3 L255.0 551.9 L257.0 552.5 L259.0 553.1 L261.0 553.8 L263.0 554.4 L265.0 555.0 L267.0 555.6 L269.0 556.3 L271.0 556.9 L273.0 557.5 L275.0 558.1 L277.0 558.7 L279.0 559.3 L281.0 560.0 L283.0 560.6 L285.0 561.2 L287.0 561.8 L289.0 562.4 L291.0 563.0 L293.0 563.6 L295.0 564.2 L297.0 564.7 L299.0 565.3 L301.0 565.9 L303.0 566.5 L305.0 567.1 L307.0 567.7 L309.0 568.2 L311.0 568.8 L313.0 569.4 L315.0 569.9 L317.0 570.5 L319.0 571.1 L321.0 571.6 L323.0 572.2 L325.0 572.7 L327.0 573.2 L329.0 573.8 L331.0 574.3 L333.0 574.9 L335.0 575.4 L337.0 575.9 L339.0 576.4 L341.0 576.9 L343.0 577.5 L345.0 578.0 L347.0 578.5 L349.0 579.0 L351.0 579.5 L353.0 580.0 L355.0 580.5 L357.0 580.9 L359.0 581.4 L361.0 581.9 L363.0 582.4 L365.0 582.8 L367.0 583.3 L369.0 583.7 L371.0 584.2 L373.0 584.6 L375.0 585.1 L377.0 585.5 L379.0 585.9 L381.0 586.4 L383.0 586.8 L385.0 587.2 L387.0 587.6 L389.0 588.0 L391.0 588.4 L393.0 588.8 L395.0 589.2 L397.0 589.6 L399.0 589.9 L401.0 590.3 L403.0 590.7 L405.0 591.0 L407.0 591.4 L409.0 591.7 L411.0 592.1 L413.0 592.4 L415.0 592.7 L417.0 593.0 L419.0 593.4 L421.0 593.7 L423.0 594.0 L425.0 594.3 L427.0 594.6 L429.0 594.8 L431.0 595.1 L433.0 595.4 L435.0 595.6 L437.0 595.9 L439.0 596.1 L441.0 596.4 L443.0 596.6 L445.0 596.8 L447.0 597.1 L449.0 597.3 L451.0 597.5 L453.0 597.7 L455.0 597.9 L457.0 598.0 L459.0 598.2 L461.0 598.4 L463.0 598.5 L465.0 598.7 L467.0 598.8 L469.0 599.0 L471.0 599.1 L473.0 599.2 L475.0 599.3 L477.0 599.4 L479.0 599.5 L481.0 599.6 L483.0 599.7 L485.0 599.8 L487.0 599.8 L489.0 599.9 L491.0 599.9 L493.0 599.9 L495.0 600.0 L497.0 600.0 L499.0 600.0 L501.0 600.0 L503.0 600.0 L505.0 600.0 L507.0 600.0 L509.0 599.9 L511.0 599.9 L513.0 599.8 L515.0 599.8 L517.0 599.7 L519.0 599.7 L521.0 599.6 L523.0 599.5 L525.0 599.4 L527.0 599.3 L529.0 599.2 L531.0 599.1 L533.0 599.0 L535.0 598.9 L537.0 598.8 L539.0 598.7 L541.0 598.5 L543.0 598.4 L545.0 598.2 L547.0 598.1 L549.0 597.9 L551.0 597.8 L553.0 597.6 L555.0 597.4 L557.0 597.2 L559.0 597.0 L561.0 596.9 L563.0 596.7 L565.0 596.5 L567.0 596.3 L569.0 596.0 L571.0 595.8 L573.0 595.6 L575.0 595.4 L577.0 595.2 L579.0 594.9 L581.0 594.7 L583.0 594.4 L585.0 594.2 L587.0 593.9 L589.0 593.7 L591.0 593.4 L593.0 593.2 L595.0 592.9 L597.0 592.6 L599.0 592.4 L601.0 592.1 L603.0 591.8 L605.0 591.5 L607.0 591.2 L609.0 591.0 L611.0 590.7 L613.0 590.4 L615.0 590.1 L617.0 589.8 L619.0 589.5 L621.0 589.2 L623.0 588.9 L625.0 588.5 L627.0 588.2 L629.0 587.9 L631.0 587.6 L633.0 587.3 L635.0 587.0 L637.0 586.6 L639.0 586.3 L641.0 586.0 L643.0 585.7 L645.0 585.3 L647.0 585.0 L649.0 584.7 L651.0 584.3 L653.0 584.0 L655.0 583.7 L657.0 583.3 L659.0 583.0 L661.0 582.6 L663.0 582.3 L665.0 582.0 L667.0 581.6 L669.0 581.3 L671.0 580.9 L673.0 580.6 L675.0 580.2 L677.0 579.9 L679.0 579.5 L681.0 579.2 L683.0 578.9 L685.0 578.5 L687.0 578.2 L689.0 577.8 L691.0 577.5 L693.0 577.1 L695.0 576.8 L697.0 576.4 L699.0 576.1 L701.0 575.8 L703.0 575.4 L705.0 575.1 L707.0 574.7 L709.0 574.4 L711.0 574.1 L713.0 573.7 L715.0 573.4 L717.0 573.1 L719.0 572.7 L721.0 572.4 L723.0 572.1 L725.0 571.8 L727.0 571.4 L729.0 571.1 L731.0 570.8 L733.0 570.5 L735.0 570.2 L737.0 569.9 L739.0 569.5 L741.0 569.2 L743.0 568.9 L745.0 568.6 L747.0 568.3 L749.0 568.0 L751.0 567.7 L753.0 567.4 L755.0 567.2 L757.0 566.9 L759.0 566.6 L761.0 566.3 L763.0 566.0 L765.0 565.8 L767.0 565.5 L769.0 565.2 L771.0 565.0 L773.0 564.7 L775.0 564.5 L777.0 564.2 L779.0 564.0 L781.0 563.7 L783.0 563.5 L785.0 563.2 L787.0 563.0 L789.0 562.8 L791.0 562.6 L793.0 562.4 L795.0 562.1 L797.0 561.9 L799.0 561.7 L801.0 561.5 L803.0 561.4 L805.0 561.2 L807.0 561.0 L809.0 560.8 L811.0 560.6 L813.0 560.5 L815.0 560.3 L817.0 560.2 L819.0 560.0 L821.0 559.9 L823.0 559.7 L825.0 559.6 L827.0 559.5 L829.0 559.4 L831.0 559.3 L833.0 559.2 L835.0 559.1 L837.0 559.0 L839.0 558.9 L841.0 558.8 L843.0 558.7 L845.0 558.7 L847.0 558.6 L849.0 558.6 L851.0 558.5 L853.0 558.5 L855.0 558.4 L857.0 558.4 L859.0 558.4 L861.0 558.4 L863.0 558.4 L865.0 558.6 L867.0 558.9 L869.0 559.4 L871.0 560.0 L873.0 560.8 L875.0 561.6 L877.0 562.5 L879.0 563.4 L881.0 564.4 L883.0 565.4 L885.0 566.4 L887.0 567.4 L889.0 568.4 L891.0 569.3 L893.0 570.1 L895.0 570.8 L897.0 571.5 L899.0 572.0 L901.0 572.4 L903.0 572.9 L905.0 573.3 L907.0 573.7 L909.0 574.1 L911.0 574.4 L913.0 574.8 L915.0 575.1 L917.0 575.4 L919.0 575.6 L921.0 575.9 L923.0 576.0 L925.0 576.2 L927.0 576.4 L929.0 576.5 L931.0 576.6 L933.0 576.8 L935.0 576.9 L937.0 576.9 L939.0 577.0" stroke="#0000ff" stroke-width="2" fill="none"/><path d="M939.0 577.0 L941.0 577.0 L943.0 577.0 L945.0 576.9 L947.0 576.9 L949.0 576.8 L951.0 576.8 L953.0 576.7 L955.0 576.7 L957.0 576.6 L959.0 576.5 L961.0 576.5 L963.0 576.4 L965.0 576.3 L967.0 576.2 L969.0 576.1 L971.0 576.0 L973.0 575.9 L975.0 575.8 L977.0 575.7 L979.0 575.6 L981.0 575.5 L983.0 575.4 L985.0 575.3 L987.0 575.2 L989.0 575.1 L991.0 574.9 L993.0 574.8 L995.0 574.7 L997.0 574.5 L999.0 574.4 L1001.0 574.2 L1003.0 574.0 L1005.0 573.8 L1007.0 573.6 L1009.0 573.4 L1011.0 573.2 L1013.0 573.0 L1015.0 572.8 L1017.0 572.5 L1019.0 572.3 L1021.0 572.1 L1023.0 571.9 L1025.0 571.6 L1027.0 571.4 L1029.0 571.2 L1031.0 571.0 L1033.0 570.7 L1035.0 570.5 L1037.0 570.3 L1039.0 570.1 L1041.0 569.9 L1043.0 569.7 L1045.0 569.5 L1047.0 569.3 L1049.0 569.1 L1051.0 568.9 L1053.0 568.7 L1055.0 568.6 L1057.0 568.4 L1059.0 568.2 L1061.0 568.0 L1063.0 567.8 L1065.0 567.6 L1067.0 567.4 L1069.0 567.2 L1071.0 567.0 L1073.0 566.9 L1075.0 566.7 L1077.0 566.5 L1079.0 566.3 L1081.0 566.0 L1083.0 565.8 L1085.0 565.6 L1087.0 565.4 L1089.0 565.2 L1091.0 565.0 L1093.0 564.7 L1095.0 564.5 L1097.0 564.2 L1099.0 564.0 L1101.0 563.8 L1103.0 563.5 L1105.0 563.3 L1107.0 563.1 L1109.0 562.8 L1111.0 562.6 L1113.0 562.3 L1115.0 562.1 L1117.0 561.8 L1119.0 561.5 L1121.0 561.2 L1123.0 560.9 L1125.0 560.6 L1127.0 560.2 L1129.0 559.9 L1131.0 559.5 L1133.0 559.1 L1135.0 558.7 L1137.0 558.3 L1139.0 557.8 L1141.0 557.2 L1143.0 556.6 L1145.0 555.9 L1147.0 555.2 L1149.0 554.4 L1151.0 553.6 L1153.0 552.7 L1155.0 551.8 L1157.0 550.9 L1159.0 550.0 L1161.0 549.0 L1163.0 548.1 L1165.0 547.1 L1167.0 546.1 L1169.0 545.1 L1171.0 544.2 L1173.0 543.2 L1175.0 542.3 L1177.0 541.3 L1179.0 540.4 L1181.0 539.6 L1183.0 538.7 L1185.0 537.8 L1187.0 536.9 L1189.0 536.0 L1191.0 535.1 L1193.0 534.2 L1195.0 533.3 L1197.0 532.4 L1199.0 531.5 L1201.0 530.5 L1203.0 529.6 L1205.0 528.7 L1207.0 527.8 L1209.0 526.8 L1211.0 525.9 L1213.0 525.0 L1215.0 524.0 L1217.0 523.1 L1219.0 522.2 L1221.0 521.3 L1223.0 520.4 L1225.0 519.4 L1227.0 518.5 L1229.0 517.6 L1231.0 516.7 L1233.0 515.8 L1235.0 515.0 L1237.0 514.1 L1239.0 513.2 L1241.0 512.3 L1243.0 511.5 L1245.0 510.7 L1247.0 509.8 L1249.0 509.0 L1251.0 508.2 L1253.0 507.4 L1255.0 506.6 L1257.0 505.8 L1259.0 505.0 L1261.0 504.3 L1263.0 503.5 L1265.0 502.7 L1267.0 502.0 L1269.0 501.2 L1271.0 500.5 L1273.0 499.7 L1275.0 499.0 L1277.0 498.2 L1279.0 497.5 L1281.0 496.8 L1283.0 496.0 L1285.0 495.3 L1287.0 494.6 L1289.0 493.9 L1291.0 493.2 L1293.0 492.5 L1295.0 491.8 L1297.0 491.1 L1299.0 490.4 L1301.0 489.7 L1303.0 489.0 L1305.0 488.3 L1307.0 487.6 L1309.0 487.0 L1311.0 486.3 L1313.0 485.6 L1315.0 484.9 L1317.0 484.2 L1319.0 483.6 L1321.0 482.9 L1323.0 482.2 L1325.0 481.6 L1327.0 480.9 L1329.0 480.2 L1331.0 479.5 L1333.0 478.9 L1335.0 478.2 L1337.0 477.5 L1339.0 476.9 L1341.0 476.2 L1343.0 475.5 L1345.0 474.9 L1347.0 474.2 L1349.0 473.5 L1351.0 472.9 L1353.0 472.2 L1355.0 471.5 L1357.0 470.8 L1359.0 470.2 L1361.0 469.5 L1363.0 468.8 L1365.0 468.1 L1367.0 467.4 L1369.0 466.7 L1371.0 466.1 L1373.0 465.4 L1375.0 464.7 L1377.0 464.0 L1379.0 463.3 L1381.0 462.6 L1383.0 461.9 L1385.0 461.2 L1387.0 460.4 L1389.0 459.7 L1391.0 459.0 L1393.0 458.3 L1395.0 457.5 L1397.0 456.8 L1399.0 456.1 L1401.0 455.3 L1403.0 454.6 L1405.0 453.8 L1407.0 453.1 L1409.0 452.3 L1411.0 451.5 L1413.0 450.8 L1415.0 450.0 L1417.0 449.2 L1419.0 448.4 L1421.0 447.6 L1423.0 446.8 L1425.0 446.0 L1427.0 445.2 L1429.0 444.4 L1431.0 443.6 L1433.0 442.7 L1435.0 441.9 L1437.0 441.1 L1439.0 440.3 L1441.0 439.4 L1443.0 438.6 L1445.0 437.8 L1447.0 436.9 L1449.0 436.1 L1451.0 435.2 L1453.0 434.4 L1455.0 433.5 L1457.0 432.7 L1459.0 431.8 L1461.0 431.0 L1463.0 430.1 L1465.0 429.3 L1467.0 428.4 L1469.0 427.5 L1471.0 426.6 L1473.0 425.8 L1475.0 424.9 L1477.0 424.0 L1479.0 423.1 L1481.0 422.2 L1483.0 421.3 L1485.0 420.5 L1487.0 419.6 L1489.0 418.7 L1491.0 417.8 L1493.0 416.9 L1495.0 416.0 L1497.0 415.1 L1499.0 414.1 L1501.0 413.2 L1503.0 412.3 L1505.0 411.4 L1507.0 410.5 L1509.0 409.6 L1511.0 408.6 L1513.0 407.7 L1515.0 406.8 L1517.0 405.8 L1519.0 404.9 L1521.0 404.0 L1523.0 403.0 L1525.0 402.1 L1527.0 401.1 L1529.0 400.2 L1531.0 399.2 L1533.0 398.3 L1535.0 397.3 L1537.0 396.4 L1539.0 395.4 L1541.0 394.5 L1543.0 393.5 L1545.0 392.5 L1547.0 391.6 L1549.0 390.6 L1551.0 389.6 L1553.0 388.7 L1555.0 387.7 L1557.0 386.7 L1559.0 385.7 L1561.0 384.7 L1563.0 383.8 L1565.0 382.8 L1567.0 381.8 L1569.0 380.8 L1571.0 379.8" stroke="#ff00ff" stroke-width="2" fill="none"/><path d="M137 482.5H133.5V487.5H137M137 574.4H133.5V579.4H137M137 502.2H133.5V507.2H137M137 485.4H133.5V490.4H137M937 515.6H933.5V520.6H937M937 556.6H933.5V561.6H937M937 574.3H933.5V579.3H937M937 554.4H933.5V559.4H937M1037 518.1H1033.5V523.1H1037M1037 552.8H1033.5V557.8H1037M1037 568.1H1033.5V573.1H1037M1037 552.9H1033.5V557.9H1037M1137 520.0H1133.5V525.0H1137M1137 547.2H1133.5V552.2H1137M1137 556.4H1133.5V561.4H1137M1237 521.2H1233.5V526.2H1237M1237 540.3H1233.5V545.3H1237M1237 512.9H1233.5V517.9H1237M1337 520.1H1333.5V525.1H1337M1337 533.9H1333.5V538.9H1337M1337 476.0H1333.5V481.0H1337M1437 516.9H1433.5V521.9H1437M1437 526.8H1433.5V531.8H1437M1437 439.8H1433.5V444.8H1437M1537 509.4H1533.5V514.4H1537M1537 517.4H1533.5V522.4H1537M1537 395.3H1533.5V400.3H1537" stroke="#f4f4f4" stroke-width="1.3" fill="none"/><rect x="1053.5" y="210.5" width="315" height="179" fill="none" stroke="#ff4040" stroke-width="3"/><rect x="1385.5" y="129.5" width="237" height="218" fill="none" stroke="#ff4040" stroke-width="3"/><line x1="1606" y1="154.5" x2="1625" y2="154.5" stroke="#e0e000"/><path d="M35.0 772.0 L36.0 771.9 L37.0 771.9 L38.0 771.8 L39.0 771.7 L40.0 771.7 L41.0 771.6 L42.0 771.5 L43.0 771.5 L44.0 771.4 L45.0 771.3 L46.0 771.3 L47.0 771.2 L48.0 771.1 L49.0 771.1 L50.0 771.0 L51.0 771.1 L52.0 771.2 L53.0 771.3 L54.0 771.4 L55.0 771.5 L56.0 771.6 L57.0 771.7 L58.0 771.8 L59.0 771.9 L60.0 772.0 L61.0 772.0 L62.0 772.0 L63.0 771.9 L64.0 771.9 L65.0 771.9 L66.0 771.9 L67.0 771.9 L68.0 771.8 L69.0 771.8 L70.0 771.8 L71.0 771.8 L72.0 771.8 L73.0 771.7 L74.0 771.7 L75.0 771.7 L76.0 771.7 L77.0 771.7 L78.0 771.6 L79.0 771.6 L80.0 771.6 L81.0 771.6 L82.0 771.6 L83.0 771.5 L84.0 771.5 L85.0 771.5 L86.0 771.5 L87.0 771.5 L88.0 771.4 L89.0 771.4 L90.0 771.4 L91.0 771.4 L92.0 771.4 L93.0 771.3 L94.0 771.3 L95.0 771.3 L96.0 771.3 L97.0 771.3 L98.0 771.2 L99.0 771.2 L100.0 771.2 L101.0 771.2 L102.0 771.2 L103.0 771.1 L104.0 771.1 L105.0 771.1 L106.0 771.1 L107.0 771.1 L108.0 771.0 L109.0 771.0 L110.0 771.0 L111.0 771.0 L112.0 771.0 L113.0 770.9 L114.0 770.9 L115.0 770.9 L116.0 770.9 L117.0 770.9 L118.0 770.8 L119.0 770.8 L120.0 770.8 L121.0 770.8 L122.0 770.8 L123.0 770.7 L124.0 770.7 L125.0 770.7 L126.0 770.7 L127.0 770.7 L128.0 770.6 L129.0 770.6 L130.0 770.6 L131.0 770.6 L132.0 770.6 L133.0 770.7 L134.0 770.7 L135.0 770.7 L136.0 770.7 L137.0 770.7 L138.0 770.8 L139.0 770.8 L140.0 770.8 L141.0 770.8 L142.0 770.8 L143.0 770.9 L144.0 770.9 L145.0 770.9 L146.0 770.9 L147.0 770.9 L148.0 771.0 L149.0 771.0 L150.0 771.0 L151.0 771.1 L152.0 771.2 L153.0 771.4 L154.0 771.5 L155.0 771.6 L156.0 771.7 L157.0 771.8 L158.0 772.0 L159.0 772.1 L160.0 772.2 L161.0 772.3 L162.0 772.4 L163.0 772.6 L164.0 772.7 L165.0 772.8 L166.0 772.9 L167.0 773.0 L168.0 773.2 L169.0 773.3 L170.0 773.4 L171.0 773.5 L172.0 773.6 L173.0 773.8 L174.0 773.9 L175.0 774.0 L176.0 773.9 L177.0 773.7 L178.0 773.6 L179.0 773.5 L180.0 773.3 L181.0 773.2 L182.0 773.1 L183.0 772.9 L184.0 772.8 L185.0 772.7 L186.0 772.5 L187.0 772.4 L188.0 772.3 L189.0 772.1 L190.0 772.0 L191.0 771.9 L192.0 771.7 L193.0 771.6 L194.0 771.5 L195.0 771.3 L196.0 771.2 L197.0 771.1 L198.0 770.9 L199.0 770.8 L200.0 770.7 L201.0 770.5 L202.0 770.4 L203.0 770.3 L204.0 770.1 L205.0 770.0 L206.0 770.0 L207.0 770.1 L208.0 770.1 L209.0 770.1 L210.0 770.2 L211.0 770.2 L212.0 770.3 L213.0 770.3 L214.0 770.3 L215.0 770.4 L216.0 770.4 L217.0 770.4 L218.0 770.5 L219.0 770.5 L220.0 770.5 L221.0 770.6 L222.0 770.6 L223.0 770.7 L224.0 770.7 L225.0 770.7 L226.0 770.8 L227.0 770.8 L228.0 770.8 L229.0 770.9 L230.0 770.9 L231.0 770.9 L232.0 771.0 L233.0 771.0 L234.0 771.1 L235.0 771.1 L236.0 771.1 L237.0 771.2 L238.0 771.2 L239.0 771.2 L240.0 771.3 L241.0 771.3 L242.0 771.3 L243.0 771.4 L244.0 771.4 L245.0 771.5 L246.0 771.5 L247.0 771.5 L248.0 771.6 L249.0 771.6 L250.0 771.6 L251.0 771.7 L252.0 771.7 L253.0 771.7 L254.0 771.8 L255.0 771.8 L256.0 771.9 L257.0 771.9 L258.0 771.9 L259.0 772.0 L260.0 772.0 L261.0 772.0 L262.0 772.0 L263.0 772.0 L264.0 772.0 L265.0 772.0 L266.0 772.0 L267.0 772.0 L268.0 772.0 L269.0 772.0 L270.0 772.0 L271.0 772.0 L272.0 772.0 L273.0 772.0 L274.0 772.0 L275.0 772.0 L276.0 772.0 L277.0 772.0 L278.0 772.0 L279.0 772.0 L280.0 772.0 L281.0 772.0 L282.0 772.0 L283.0 772.0 L284.0 772.0 L285.0 772.0 L286.0 772.0 L287.0 772.0 L288.0 772.0 L289.0 772.0 L290.0 772.0 L291.0 772.0 L292.0 772.0 L293.0 772.0 L294.0 772.0 L295.0 772.0 L296.0 772.0 L297.0 772.0 L298.0 772.0 L299.0 772.0 L300.0 772.0 L301.0 772.0 L302.0 772.0 L303.0 772.1 L304.0 772.1 L305.0 772.1 L306.0 772.1 L307.0 772.1 L308.0 772.2 L309.0 772.2 L310.0 772.2 L311.0 772.2 L312.0 772.2 L313.0 772.3 L314.0 772.3 L315.0 772.3 L316.0 772.3 L317.0 772.3 L318.0 772.4 L319.0 772.4 L320.0 772.4 L321.0 772.4 L322.0 772.4 L323.0 772.5 L324.0 772.5 L325.0 772.5 L326.0 772.5 L327.0 772.5 L328.0 772.6 L329.0 772.6 L330.0 772.6 L331.0 772.6 L332.0 772.6 L333.0 772.7 L334.0 772.7 L335.0 772.7 L336.0 772.7 L337.0 772.7 L338.0 772.8 L339.0 772.8 L340.0 772.8 L341.0 772.8 L342.0 772.8 L343.0 772.9 L344.0 772.9 L345.0 772.9 L346.0 772.9 L347.0 772.9 L348.0 773.0 L349.0 773.0 L350.0 773.0 L351.0 773.0 L352.0 772.9 L353.0 772.9 L354.0 772.8 L355.0 772.8 L356.0 772.8 L357.0 772.7 L358.0 772.7 L359.0 772.6 L360.0 772.6 L361.0 772.6 L362.0 772.5 L363.0 772.5 L364.0 772.4 L365.0 772.4 L366.0 772.4 L367.0 772.3 L368.0 772.3 L369.0 772.2 L370.0 772.2 L371.0 772.2 L372.0 772.1 L373.0 772.1 L374.0 772.0 L375.0 772.0 L376.0 772.0 L377.0 771.9 L378.0 771.9 L379.0 771.8 L380.0 771.8 L381.0 771.8 L382.0 771.7 L383.0 771.7 L384.0 771.6 L385.0 771.6 L386.0 771.6 L387.0 771.5 L388.0 771.5 L389.0 771.4 L390.0 771.4 L391.0 771.4 L392.0 771.3 L393.0 771.3 L394.0 771.2 L395.0 771.2 L396.0 771.2 L397.0 771.1 L398.0 771.1 L399.0 771.0 L400.0 771.0 L401.0 771.0 L402.0 771.1 L403.0 771.1 L404.0 771.2 L405.0 771.2 L406.0 771.3 L407.0 771.4 L408.0 771.4 L409.0 771.5 L410.0 771.5 L411.0 771.5 L412.0 771.6 L413.0 771.6 L414.0 771.7 L415.0 771.8 L416.0 771.8 L417.0 771.9 L418.0 771.9 L419.0 772.0 L420.0 772.0 L421.0 772.0 L422.0 772.1 L423.0 772.1 L424.0 772.2 L425.0 772.2 L426.0 772.3 L427.0 772.4 L428.0 772.4 L429.0 772.5 L430.0 772.5 L431.0 772.5 L432.0 772.6 L433.0 772.6 L434.0 772.7 L435.0 772.8 L436.0 772.8 L437.0 772.9 L438.0 772.9 L439.0 773.0 L440.0 773.0 L441.0 773.0 L442.0 773.0 L443.0 773.0 L444.0 772.9 L445.0 772.9 L446.0 772.9 L447.0 772.9 L448.0 772.9 L449.0 772.9 L450.0 772.8 L451.0 772.8 L452.0 772.8 L453.0 772.8 L454.0 772.8 L455.0 772.8 L456.0 772.7 L457.0 772.7 L458.0 772.7 L459.0 772.7 L460.0 772.7 L461.0 772.6 L462.0 772.6 L463.0 772.6 L464.0 772.6 L465.0 772.6 L466.0 772.6 L467.0 772.5 L468.0 772.5 L469.0 772.5 L470.0 772.5 L471.0 772.5 L472.0 772.5 L473.0 772.5 L474.0 772.4 L475.0 772.4 L476.0 772.4 L477.0 772.4 L478.0 772.4 L479.0 772.4 L480.0 772.3 L481.0 772.3 L482.0 772.3 L483.0 772.3 L484.0 772.3 L485.0 772.2 L486.0 772.2 L487.0 772.2 L488.0 772.2 L489.0 772.2 L490.0 772.2 L491.0 772.1 L492.0 772.1 L493.0 772.1 L494.0 772.1 L495.0 772.1 L496.0 772.1 L497.0 772.0 L498.0 772.0 L499.0 772.0 L500.0 772.0 L501.0 772.0 L502.0 771.9 L503.0 771.9 L504.0 771.9 L505.0 771.8 L506.0 771.8 L507.0 771.8 L508.0 771.7 L509.0 771.7 L510.0 771.7 L511.0 771.6 L512.0 771.6 L513.0 771.6 L514.0 771.5 L515.0 771.5 L516.0 771.5 L517.0 771.4 L518.0 771.4 L519.0 771.4 L520.0 771.3 L521.0 771.3 L522.0 771.3 L523.0 771.2 L524.0 771.2 L525.0 771.2 L526.0 771.1 L527.0 771.1 L528.0 771.1 L529.0 771.0 L530.0 771.0 L531.0 771.0 L532.0 770.9 L533.0 770.9 L534.0 770.9 L535.0 770.8 L536.0 770.8 L537.0 770.8 L538.0 770.7 L539.0 770.7 L540.0 770.7 L541.0 770.6 L542.0 770.6 L543.0 770.6 L544.0 770.5 L545.0 770.5 L546.0 770.5 L547.0 770.4 L548.0 770.4 L549.0 770.4 L550.0 770.3 L551.0 770.3 L552.0 770.3 L553.0 770.2 L554.0 770.2 L555.0 770.2 L556.0 770.1 L557.0 770.1 L558.0 770.1 L559.0 770.0 L560.0 770.0 L561.0 770.0 L562.0 770.1 L563.0 770.1 L564.0 770.1 L565.0 770.2 L566.0 770.2 L567.0 770.3 L568.0 770.3 L569.0 770.3 L570.0 770.4 L571.0 770.4 L572.0 770.5 L573.0 770.5 L574.0 770.5 L575.0 770.6 L576.0 770.6 L577.0 770.6 L578.0 770.7 L579.0 770.7 L580.0 770.8 L581.0 770.8 L582.0 770.8 L583.0 770.9 L584.0 770.9 L585.0 770.9 L586.0 771.0 L587.0 771.0 L588.0 771.0 L589.0 771.1 L590.0 771.1 L591.0 771.2 L592.0 771.2 L593.0 771.2 L594.0 771.3 L595.0 771.3 L596.0 771.4 L597.0 771.4 L598.0 771.4 L599.0 771.5 L600.0 771.5 L601.0 771.4 L602.0 771.4 L603.0 771.3 L604.0 771.2 L605.0 771.1 L606.0 771.0 L607.0 771.0 L608.0 770.9 L609.0 770.8 L610.0 770.8 L611.0 770.7 L612.0 770.6 L613.0 770.5 L614.0 770.5 L615.0 770.4 L616.0 770.3 L617.0 770.2 L618.0 770.1 L619.0 770.1 L620.0 770.0 L621.0 770.0 L622.0 770.0 L623.0 770.0 L624.0 769.9 L625.0 769.9 L626.0 769.9 L627.0 769.9 L628.0 769.9 L629.0 769.9 L630.0 769.9 L631.0 769.9 L632.0 769.8 L633.0 769.8 L634.0 769.8 L635.0 769.8 L636.0 769.8 L637.0 769.8 L638.0 769.8 L639.0 769.8 L640.0 769.7 L641.0 769.7 L642.0 769.7 L643.0 769.7 L644.0 769.7 L645.0 769.7 L646.0 769.7 L647.0 769.6 L648.0 769.6 L649.0 769.6 L650.0 769.6 L651.0 769.6 L652.0 769.6 L653.0 769.6 L654.0 769.6 L655.0 769.5 L656.0 769.5 L657.0 769.5 L658.0 769.5 L659.0 769.5 L660.0 769.5 L661.0 769.5 L662.0 769.4 L663.0 769.4 L664.0 769.4 L665.0 769.4 L666.0 769.4 L667.0 769.4 L668.0 769.4 L669.0 769.4 L670.0 769.3 L671.0 769.3 L672.0 769.3 L673.0 769.3 L674.0 769.3 L675.0 769.3 L676.0 769.3 L677.0 769.2 L678.0 769.2 L679.0 769.2 L680.0 769.2 L681.0 769.2 L682.0 769.2 L683.0 769.2 L684.0 769.2 L685.0 769.1 L686.0 769.1 L687.0 769.1 L688.0 769.1 L689.0 769.1 L690.0 769.1 L691.0 769.1 L692.0 769.1 L693.0 769.0 L694.0 769.0 L695.0 769.0 L696.0 769.0 L697.0 769.0 L698.0 768.9 L699.0 768.9 L700.0 768.8 L701.0 768.8 L702.0 768.7 L703.0 768.7 L704.0 768.6 L705.0 768.6 L706.0 768.6 L707.0 768.5 L708.0 768.5 L709.0 768.4 L710.0 768.4 L711.0 768.3 L712.0 768.3 L713.0 768.2 L714.0 768.2 L715.0 768.2 L716.0 768.1 L717.0 768.1 L718.0 768.0 L719.0 768.0 L720.0 767.9 L721.0 767.9 L722.0 767.8 L723.0 767.8 L724.0 767.8 L725.0 767.7 L726.0 767.7 L727.0 767.6 L728.0 767.6 L729.0 767.5 L730.0 767.5 L731.0 767.4 L732.0 767.4 L733.0 767.4 L734.0 767.3 L735.0 767.3 L736.0 767.2 L737.0 767.2 L738.0 767.1 L739.0 767.1 L740.0 767.0 L741.0 767.0 L742.0 767.0 L743.0 766.9 L744.0 766.9 L745.0 766.8 L746.0 766.8 L747.0 766.7 L748.0 766.7 L749.0 766.6 L750.0 766.6 L751.0 766.6 L752.0 766.5 L753.0 766.5 L754.0 766.4 L755.0 766.4 L756.0 766.3 L757.0 766.3 L758.0 766.2 L759.0 766.2 L760.0 766.2 L761.0 766.1 L762.0 766.1 L763.0 766.0 L764.0 766.0 L765.0 765.9 L766.0 765.9 L767.0 765.8 L768.0 765.8 L769.0 764.2 L770.0 762.6 L771.0 761.0 L772.0 760.0 L773.0 760.0 L774.0 760.0 L775.0 759.9 L776.0 759.9 L777.0 759.9 L778.0 759.9 L779.0 759.9 L780.0 759.9 L781.0 759.8 L782.0 759.8 L783.0 759.8 L784.0 759.8 L785.0 759.8 L786.0 759.8 L787.0 759.7 L788.0 759.7 L789.0 759.7 L790.0 759.7 L791.0 759.7 L792.0 759.7 L793.0 759.6 L794.0 759.6 L795.0 759.6 L796.0 759.6 L797.0 759.6 L798.0 759.6 L799.0 759.5 L800.0 759.5 L801.0 759.5 L802.0 757.6 L803.0 753.0 L804.0 753.0 L805.0 753.0 L806.0 753.0 L807.0 753.0 L808.0 753.0 L809.0 753.0 L810.0 753.0 L811.0 753.0 L812.0 753.0 L813.0 753.0 L814.0 753.0 L815.0 753.0 L816.0 752.9 L817.0 752.4 L818.0 751.9 L819.0 751.4 L820.0 750.9 L821.0 750.5 L822.0 750.4 L823.0 750.2 L824.0 750.1 L825.0 750.0 L826.0 749.8 L827.0 749.7 L828.0 749.5 L829.0 749.4 L830.0 749.2 L831.0 749.1 L832.0 749.1 L833.0 749.2 L834.0 749.4 L835.0 749.5 L836.0 749.7 L837.0 749.9 L838.0 750.0 L839.0 750.2 L840.0 750.3 L841.0 750.5 L842.0 750.7 L843.0 750.8 L844.0 751.0 L845.0 751.1 L846.0 751.3 L847.0 751.4 L848.0 751.6 L849.0 751.8 L850.0 751.9 L851.0 752.3 L852.0 752.9 L853.0 753.5 L854.0 754.1 L855.0 754.7 L856.0 753.3 L857.0 751.9 L858.0 750.6 L859.0 749.2 L860.0 747.8 L861.0 747.6 L862.0 747.4 L863.0 747.2 L864.0 747.0 L865.0 746.8 L866.0 746.7 L867.0 746.5 L868.0 746.3 L869.0 746.1 L870.0 746.1 L871.0 746.4 L872.0 746.6 L873.0 746.9 L874.0 747.1 L875.0 747.3 L876.0 747.6 L877.0 747.8 L878.0 748.0 L879.0 748.3 L880.0 748.5 L881.0 748.8 L882.0 749.0 L883.0 749.0 L884.0 749.1 L885.0 749.1 L886.0 749.1 L887.0 749.2 L888.0 749.2 L889.0 749.2 L890.0 749.3 L891.0 749.3 L892.0 749.3 L893.0 749.3 L894.0 749.4 L895.0 749.6 L896.0 750.3 L897.0 751.0 L898.0 751.7 L899.0 752.4 L900.0 753.1 L901.0 753.8 L902.0 754.4 L903.0 755.1 L904.0 755.8 L905.0 756.5 L906.0 757.2 L907.0 757.9 L908.0 757.8 L909.0 757.7 L910.0 757.7 L911.0 757.6 L912.0 757.5 L913.0 757.4 L914.0 757.4 L915.0 757.3 L916.0 757.2 L917.0 757.1 L918.0 757.0 L919.0 757.0 L920.0 756.9 L921.0 756.8 L922.0 756.7 L923.0 756.6 L924.0 756.6 L925.0 756.5 L926.0 756.4 L927.0 756.3 L928.0 756.3 L929.0 756.2 L930.0 756.1 L931.0 756.0 L932.0 755.9 L933.0 755.9 L934.0 755.8 L935.0 755.7 L936.0 755.6 L937.0 755.5 L938.0 755.5 L939.0 755.4 L940.0 755.9 L941.0 756.3 L942.0 756.7 L943.0 757.2 L944.0 757.6 L945.0 758.0 L946.0 758.5 L947.0 758.9 L948.0 759.3 L949.0 759.5 L950.0 759.6 L951.0 759.6 L952.0 759.6 L953.0 759.7 L954.0 759.7 L955.0 759.8 L956.0 759.8 L957.0 759.9 L958.0 759.9 L959.0 759.9 L960.0 760.0 L961.0 760.0 L962.0 760.1 L963.0 760.1 L964.0 760.1 L965.0 760.2 L966.0 760.2 L967.0 760.3 L968.0 760.3 L969.0 760.3 L970.0 760.4 L971.0 760.5 L972.0 760.7 L973.0 760.8 L974.0 761.0 L975.0 761.2 L976.0 761.3 L977.0 761.5 L978.0 761.7 L979.0 761.9 L980.0 762.0 L981.0 762.2 L982.0 762.4 L983.0 762.5 L984.0 762.7 L985.0 762.9 L986.0 763.1 L987.0 763.2 L988.0 763.4 L989.0 763.6 L990.0 763.8 L991.0 763.9 L992.0 764.1 L993.0 764.2 L994.0 764.1 L995.0 764.1 L996.0 764.0 L997.0 764.0 L998.0 764.0 L999.0 763.9 L1000.0 763.9 L1001.0 763.8 L1002.0 763.8 L1003.0 763.7 L1004.0 763.7 L1005.0 763.6 L1006.0 763.6 L1007.0 763.5 L1008.0 763.5 L1009.0 763.4 L1010.0 763.4 L1011.0 763.4 L1012.0 763.3 L1013.0 763.3 L1014.0 763.2 L1015.0 763.2 L1016.0 763.1 L1017.0 763.1 L1018.0 763.0 L1019.0 763.0 L1020.0 762.9 L1021.0 762.9 L1022.0 762.8 L1023.0 762.8 L1024.0 762.8 L1025.0 762.7 L1026.0 762.7 L1027.0 762.6 L1028.0 762.6 L1029.0 762.5 L1030.0 762.5 L1031.0 762.4 L1032.0 762.4 L1033.0 762.3 L1034.0 762.3 L1035.0 762.2 L1036.0 762.2 L1037.0 762.2 L1038.0 762.1 L1039.0 762.1 L1040.0 762.0 L1041.0 762.0 L1042.0 761.9 L1043.0 761.9 L1044.0 761.8 L1045.0 761.8 L1046.0 761.7 L1047.0 761.7 L1048.0 761.6 L1049.0 761.6 L1050.0 761.6 L1051.0 761.5 L1052.0 761.5 L1053.0 761.4 L1054.0 761.4 L1055.0 761.3 L1056.0 761.3 L1057.0 761.2 L1058.0 761.2 L1059.0 761.1 L1060.0 761.1 L1061.0 761.0 L1062.0 761.0 L1063.0 761.0 L1064.0 761.0 L1065.0 760.9 L1066.0 760.9 L1067.0 760.9 L1068.0 760.9 L1069.0 760.9 L1070.0 760.8 L1071.0 760.8 L1072.0 760.8 L1073.0 760.8 L1074.0 760.8 L1075.0 760.8 L1076.0 760.7 L1077.0 760.7 L1078.0 760.7 L1079.0 760.7 L1080.0 760.7 L1081.0 760.6 L1082.0 760.6 L1083.0 760.6 L1084.0 760.6 L1085.0 760.6 L1086.0 760.5 L1087.0 760.5 L1088.0 760.5 L1089.0 760.5 L1090.0 760.5 L1091.0 760.4 L1092.0 760.4 L1093.0 760.4 L1094.0 760.3 L1095.0 760.2 L1096.0 760.0 L1097.0 759.9 L1098.0 759.7 L1099.0 759.6 L1100.0 759.4 L1101.0 759.3 L1102.0 759.1 L1103.0 759.0 L1104.0 758.8 L1105.0 758.7 L1106.0 758.5 L1107.0 758.4 L1108.0 758.2 L1109.0 758.1 L1110.0 757.9 L1111.0 757.7 L1112.0 757.6 L1113.0 757.4 L1114.0 757.3 L1115.0 757.1 L1116.0 757.0 L1117.0 756.8 L1118.0 756.7 L1119.0 756.5 L1120.0 756.4 L1121.0 756.2 L1122.0 756.1 L1123.0 755.9 L1124.0 755.8 L1125.0 755.6 L1126.0 755.5 L1127.0 755.3 L1128.0 755.2 L1129.0 755.0 L1130.0 755.1 L1131.0 755.3 L1132.0 755.4 L1133.0 755.6 L1134.0 755.7 L1135.0 755.8 L1136.0 756.0 L1137.0 756.1 L1138.0 756.3 L1139.0 756.4 L1140.0 756.5 L1141.0 756.7 L1142.0 756.8 L1143.0 757.0 L1144.0 757.1 L1145.0 757.2 L1146.0 757.4 L1147.0 757.5 L1148.0 757.7 L1149.0 757.8 L1150.0 757.9 L1151.0 758.1 L1152.0 758.2 L1153.0 758.6 L1154.0 759.0 L1155.0 759.3 L1156.0 759.7 L1157.0 760.0 L1158.0 760.4 L1159.0 760.7 L1160.0 761.1 L1161.0 761.5 L1162.0 761.8 L1163.0 762.2 L1164.0 762.5 L1165.0 762.9 L1166.0 763.2 L1167.0 763.6 L1168.0 763.7 L1169.0 763.7 L1170.0 763.8 L1171.0 763.8 L1172.0 763.9 L1173.0 763.9 L1174.0 764.0 L1175.0 764.0 L1176.0 764.1 L1177.0 764.1 L1178.0 764.2 L1179.0 764.2 L1180.0 764.3 L1181.0 764.3 L1182.0 764.4 L1183.0 764.4 L1184.0 764.5 L1185.0 764.5 L1186.0 764.6 L1187.0 764.6 L1188.0 764.7 L1189.0 764.7 L1190.0 764.8 L1191.0 764.8 L1192.0 764.9 L1193.0 764.9 L1194.0 765.0 L1195.0 765.0 L1196.0 765.1 L1197.0 765.1 L1198.0 765.2 L1199.0 765.2 L1200.0 765.3 L1201.0 765.3 L1202.0 765.4 L1203.0 765.4 L1204.0 765.5 L1205.0 765.5 L1206.0 765.6 L1207.0 765.6 L1208.0 765.7 L1209.0 765.7 L1210.0 765.8 L1211.0 765.6 L1212.0 765.5 L1213.0 765.3 L1214.0 765.2 L1215.0 765.0 L1216.0 764.9 L1217.0 764.7 L1218.0 764.6 L1219.0 764.4 L1220.0 764.3 L1221.0 764.1 L1222.0 764.0 L1223.0 763.8 L1224.0 763.7 L1225.0 763.5 L1226.0 763.4 L1227.0 763.2 L1228.0 763.1 L1229.0 762.9 L1230.0 762.8 L1231.0 762.6 L1232.0 762.5 L1233.0 762.3 L1234.0 762.2 L1235.0 762.0 L1236.0 761.9 L1237.0 761.7 L1238.0 761.6 L1239.0 761.4 L1240.0 761.3 L1241.0 761.4 L1242.0 761.7 L1243.0 762.1 L1244.0 762.4 L1245.0 762.7 L1246.0 763.0 L1247.0 763.4 L1248.0 763.7 L1249.0 764.0 L1250.0 764.3 L1251.0 764.7 L1252.0 765.0 L1253.0 765.1 L1254.0 764.9 L1255.0 764.7 L1256.0 764.6 L1257.0 764.4 L1258.0 764.2 L1259.0 764.0 L1260.0 763.8 L1261.0 763.6 L1262.0 763.4 L1263.0 763.2 L1264.0 763.1 L1265.0 762.9 L1266.0 762.7 L1267.0 762.5 L1268.0 762.3 L1269.0 762.1 L1270.0 761.9 L1271.0 761.7 L1272.0 761.6 L1273.0 761.4 L1274.0 761.2 L1275.0 761.0 L1276.0 760.8 L1277.0 760.6 L1278.0 760.4 L1279.0 760.2 L1280.0 760.0 L1281.0 759.9 L1282.0 759.7 L1283.0 759.5 L1284.0 759.3 L1285.0 759.1 L1286.0 758.9 L1287.0 758.7 L1288.0 758.5 L1289.0 758.4 L1290.0 758.2 L1291.0 758.0 L1292.0 757.8 L1293.0 757.6 L1294.0 757.4 L1295.0 757.2 L1296.0 757.0 L1297.0 756.8 L1298.0 756.7 L1299.0 756.5 L1300.0 756.3 L1301.0 756.1 L1302.0 756.3 L1303.0 756.9 L1304.0 757.4 L1305.0 758.0 L1306.0 758.6 L1307.0 759.1 L1308.0 759.7 L1309.0 760.3 L1310.0 760.9 L1311.0 761.2 L1312.0 761.1 L1313.0 761.1 L1314.0 761.0 L1315.0 760.9 L1316.0 760.9 L1317.0 760.8 L1318.0 760.8 L1319.0 760.7 L1320.0 760.6 L1321.0 760.6 L1322.0 760.5 L1323.0 760.5 L1324.0 760.4 L1325.0 760.3 L1326.0 760.3 L1327.0 760.2 L1328.0 760.2 L1329.0 760.1 L1330.0 760.0 L1331.0 760.0 L1332.0 759.9 L1333.0 759.9 L1334.0 759.8 L1335.0 759.7 L1336.0 759.7 L1337.0 759.6 L1338.0 759.6 L1339.0 759.5 L1340.0 759.4 L1341.0 759.4 L1342.0 759.3 L1343.0 759.2 L1344.0 759.2 L1345.0 759.1 L1346.0 759.1 L1347.0 759.0 L1348.0 758.9 L1349.0 758.9 L1350.0 758.8 L1351.0 758.8 L1352.0 758.7 L1353.0 758.6 L1354.0 758.6 L1355.0 758.5 L1356.0 758.5 L1357.0 758.4 L1358.0 758.3 L1359.0 758.3 L1360.0 758.2 L1361.0 758.2 L1362.0 758.1 L1363.0 758.0 L1364.0 758.0 L1365.0 757.9 L1366.0 757.9 L1367.0 757.8 L1368.0 757.7 L1369.0 757.7 L1370.0 757.6 L1371.0 757.6 L1372.0 757.5 L1373.0 757.4 L1374.0 757.4 L1375.0 757.3 L1376.0 757.3 L1377.0 757.2 L1378.0 757.1 L1379.0 757.1 L1380.0 757.0 L1381.0 757.0 L1382.0 756.9 L1383.0 756.8 L1384.0 756.8 L1385.0 756.7 L1386.0 756.7 L1387.0 756.6 L1388.0 755.7 L1389.0 754.9 L1390.0 754.0 L1391.0 753.1 L1392.0 752.3 L1393.0 751.4 L1394.0 751.4 L1395.0 751.4 L1396.0 751.4 L1397.0 751.4 L1398.0 751.4 L1399.0 751.4 L1400.0 751.4 L1401.0 751.4 L1402.0 751.4 L1403.0 751.4 L1404.0 751.4 L1405.0 751.4 L1406.0 751.4 L1407.0 751.4 L1408.0 751.4 L1409.0 751.4 L1410.0 751.4 L1411.0 751.4 L1412.0 751.4 L1413.0 751.4 L1414.0 751.4 L1415.0 751.4 L1416.0 751.4 L1417.0 751.4 L1418.0 751.4 L1419.0 751.4 L1420.0 751.4 L1421.0 751.4 L1422.0 751.4 L1423.0 751.4 L1424.0 751.4 L1425.0 751.4 L1426.0 751.4 L1427.0 751.4 L1428.0 751.4 L1429.0 751.4 L1430.0 751.4 L1431.0 751.3 L1432.0 751.2 L1433.0 751.1 L1434.0 751.0 L1435.0 750.9 L1436.0 750.8 L1437.0 750.7 L1438.0 750.6 L1439.0 750.5 L1440.0 750.4 L1441.0 750.3 L1442.0 750.2 L1443.0 750.1 L1444.0 750.0 L1445.0 749.9 L1446.0 749.8 L1447.0 749.7 L1448.0 749.6 L1449.0 749.5 L1450.0 749.4 L1451.0 749.3 L1452.0 749.2 L1453.0 749.1 L1454.0 749.0 L1455.0 748.9 L1456.0 748.8 L1457.0 748.7 L1458.0 748.6 L1459.0 748.5 L1460.0 748.4 L1461.0 748.5 L1462.0 748.5 L1463.0 748.6 L1464.0 748.6 L1465.0 748.7 L1466.0 748.8 L1467.0 748.8 L1468.0 748.9 L1469.0 748.9 L1470.0 749.0 L1471.0 749.1 L1472.0 749.1 L1473.0 749.2 L1474.0 749.2 L1475.0 749.3 L1476.0 749.4 L1477.0 749.4 L1478.0 749.5 L1479.0 749.5 L1480.0 749.6 L1481.0 749.6 L1482.0 749.7 L1483.0 749.8 L1484.0 749.8 L1485.0 749.9 L1486.0 749.9 L1487.0 750.0 L1488.0 750.1 L1489.0 750.1 L1490.0 750.2 L1491.0 750.2 L1492.0 750.3 L1493.0 750.4 L1494.0 750.4 L1495.0 750.5 L1496.0 748.6 L1497.0 745.9 L1498.0 743.1 L1499.0 742.2 L1500.0 742.1 L1501.0 742.0 L1502.0 741.9 L1503.0 741.8 L1504.0 741.7 L1505.0 741.6 L1506.0 741.5 L1507.0 741.3 L1508.0 741.2 L1509.0 741.1 L1510.0 741.0 L1511.0 740.9 L1512.0 740.8 L1513.0 740.8 L1514.0 740.8 L1515.0 740.8 L1516.0 740.8 L1517.0 740.8 L1518.0 740.8 L1519.0 740.8 L1520.0 740.8 L1521.0 740.8 L1522.0 740.8 L1523.0 740.8 L1524.0 740.8 L1525.0 740.8 L1526.0 740.8 L1527.0 740.8 L1528.0 740.8 L1529.0 740.8 L1530.0 740.8 L1531.0 740.8 L1532.0 740.8 L1533.0 740.8 L1534.0 740.8 L1535.0 740.8 L1536.0 740.8 L1537.0 740.8 L1538.0 740.8 L1539.0 740.8 L1540.0 740.8 L1541.0 740.8 L1542.0 740.8 L1543.0 740.8 L1544.0 740.8 L1545.0 740.8 L1546.0 740.8 L1547.0 740.8 L1548.0 740.8 L1549.0 740.8 L1550.0 740.8 L1551.0 740.8 L1552.0 740.8 L1553.0 740.8 L1554.0 740.8 L1555.0 741.6 L1556.0 745.8 L1557.0 749.9 L1558.0 753.5 L1559.0 752.8 L1560.0 752.1 L1561.0 751.4 L1562.0 750.7 L1563.0 750.0 L1564.0 749.3 L1565.0 748.6 L1566.0 747.8 L1567.0 747.1 L1568.0 746.4 L1569.0 746.2 L1570.0 746.7 L1571.0 747.2 L1572.0 747.5" stroke="#f0f0f0" stroke-width="1" fill="none"/><path d="M36.5 776V779M44.5 778V779M52.5 777V779M56.5 776V779M60.5 777V779M62.5 778V779M72.5 778V779M74.5 778V779M78.5 778V779M80.5 778V779M96.5 777V779M98.5 778V779M100.5 778V779M104.5 778V779M106.5 778V779M116.5 777V779M118.5 776V779M124.5 776V779M126.5 778V779M132.5 778V779M140.5 777V779M144.5 777V779M146.5 776V779M148.5 777V779M152.5 778V779M154.5 777V779M156.5 778V779M166.5 777V779M168.5 778V779M174.5 777V779M178.5 778V779M188.5 776V779M192.5 777V779M198.5 777V779M214.5 778V779M218.5 778V779M224.5 778V779M226.5 776V779M232.5 774V779M258.5 777V779M274.5 777V779M286.5 777V779M302.5 778V779M322.5 775V779M338.5 777V779M340.5 772V779M348.5 777V779M354.5 777V779M356.5 777V779M372.5 777V779M378.5 777V779M380.5 778V779M390.5 777V779M394.5 777V779M408.5 776V779M420.5 778V779M430.5 778V779M448.5 778V779M450.5 778V779M452.5 777V779M458.5 778V779M460.5 778V779M462.5 776V779M466.5 777V779M470.5 777V779M480.5 778V779M492.5 777V779M500.5 777V779M502.5 776V779M506.5 777V779M546.5 777V779M548.5 777V779M558.5 777V779M560.5 777V779M570.5 777V779M576.5 778V779M580.5 778V779M592.5 778V779M608.5 777V779M612.5 777V779M614.5 776V779M630.5 778V779M634.5 778V779M638.5 776V779M642.5 777V779M672.5 778V779M682.5 777V779M684.5 777V779M688.5 777V779M696.5 778V779M700.5 776V779M704.5 777V779M726.5 777V779M728.5 778V779M732.5 778V779M736.5 778V779M738.5 774V779M740.5 773V779M754.5 777V779M768.5 777V779M780.5 778V779M792.5 777V779M794.5 776V779M802.5 776V779M806.5 776V779M814.5 777V779M820.5 778V779M832.5 777V779M834.5 777V779M842.5 776V779M844.5 776V779M858.5 777V779M860.5 777V779M864.5 778V779M866.5 778V779M880.5 776V779M894.5 777V779M900.5 777V779M902.5 776V779M904.5 778V779M906.5 778V779M914.5 778V779M940.5 772V779M942.5 777V779M944.5 777V779M952.5 776V779M976.5 778V779M992.5 778V779M994.5 776V779M1000.5 777V779M1008.5 777V779M1018.5 776V779M1024.5 776V779M1028.5 776V779M1032.5 778V779M1038.5 776V779M1042.5 778V779M1050.5 777V779M1052.5 778V779M1054.5 777V779M1056.5 777V779M1062.5 777V779M1064.5 777V779M1068.5 777V779M1072.5 778V779M1076.5 776V779M1082.5 777V779M1088.5 777V779M1094.5 778V779M1104.5 778V779M1106.5 777V779M1122.5 777V779M1124.5 778V779M1132.5 778V779M1144.5 777V779M1146.5 777V779M1156.5 778V779M1158.5 776V779M1160.5 776V779M1164.5 772V779M1174.5 777V779M1206.5 777V779M1214.5 777V779M1220.5 777V779M1226.5 778V779M1228.5 777V779M1230.5 776V779M1232.5 778V779M1272.5 776V779M1278.5 776V779M1302.5 777V779M1306.5 778V779M1308.5 777V779M1312.5 778V779M1328.5 777V779M1340.5 777V779M1344.5 775V779M1348.5 777V779M1350.5 778V779M1362.5 778V779M1366.5 777V779M1368.5 778V779M1370.5 778V779M1376.5 778V779M1378.5 778V779M1384.5 777V779M1388.5 777V779M1392.5 777V779M1394.5 778V779M1398.5 772V779M1402.5 777V779M1406.5 778V779M1414.5 776V779M1422.5 776V779M1424.5 778V779M1426.5 776V779M1434.5 778V779M1436.5 778V779M1452.5 776V779M1454.5 778V779M1492.5 778V779M1498.5 778V779M1510.5 778V779M1512.5 777V779M1520.5 777V779M1536.5 776V779M1538.5 777V779M1550.5 777V779M1558.5 777V779M1564.5 777V779M1568.5 778V779M890.5 773V779M900.5 771V779M1164.5 763V779M1240.5 765V779M1242.5 762V779M1258.5 774V779M1305.5 767V779M1390.5 772V779M1471.5 773V779M1476.5 773V779M1490.5 771V779M1498.5 757V779M1512.5 771V779M1520.5 773V779M1555.5 764V779M1557.5 740V779M1568.5 763V779" stroke="#ff3030" stroke-width="1"/><path d="M38.5 778V779M40.5 777V779M82.5 778V779M90.5 777V779M92.5 777V779M102.5 778V779M122.5 778V779M150.5 777V779M164.5 778V779M182.5 778V779M196.5 778V779M204.5 777V779M212.5 777V779M234.5 777V779M236.5 776V779M252.5 778V779M268.5 778V779M276.5 777V779M280.5 778V779M336.5 777V779M342.5 776V779M376.5 778V779M388.5 776V779M402.5 777V779M414.5 775V779M418.5 777V779M424.5 776V779M426.5 776V779M446.5 778V779M472.5 778V779M476.5 776V779M486.5 777V779M488.5 778V779M522.5 778V779M530.5 776V779M538.5 778V779M542.5 776V779M586.5 777V779M640.5 777V779M644.5 777V779M646.5 776V779M652.5 778V779M656.5 777V779M668.5 772V779M670.5 777V779M676.5 776V779M698.5 777V779M702.5 777V779M708.5 777V779M734.5 772V779M758.5 777V779M772.5 777V779M782.5 778V779M786.5 777V779M808.5 778V779M812.5 777V779M848.5 778V779M862.5 777V779M884.5 778V779M886.5 777V779M892.5 777V779M910.5 777V779M922.5 776V779M950.5 778V779M964.5 778V779M966.5 778V779M968.5 778V779M978.5 776V779M980.5 776V779M982.5 778V779M998.5 777V779M1004.5 774V779M1026.5 776V779M1040.5 776V779M1070.5 777V779M1090.5 778V779M1102.5 777V779M1108.5 777V779M1116.5 778V779M1126.5 778V779M1128.5 778V779M1130.5 776V779M1152.5 776V779M1170.5 777V779M1182.5 777V779M1190.5 776V779M1192.5 777V779M1222.5 777V779M1236.5 777V779M1242.5 777V779M1250.5 778V779M1258.5 777V779M1268.5 778V779M1314.5 777V779M1318.5 778V779M1322.5 776V779M1324.5 777V779M1326.5 777V779M1330.5 778V779M1360.5 777V779M1364.5 776V779M1374.5 777V779M1386.5 778V779M1390.5 777V779M1416.5 778V779M1418.5 777V779M1420.5 778V779M1440.5 778V779M1442.5 777V779M1446.5 776V779M1450.5 776V779M1460.5 778V779M1462.5 777V779M1466.5 776V779M1476.5 777V779M1484.5 777V779M1486.5 777V779M1490.5 776V779M1540.5 776V779M1562.5 777V779M1572.5 777V779M861.5 754V779M955.5 774V779M1250.5 772V779M1254.5 773V779M1303.5 770V779M1500.5 767V779M1504.5 765V779M1508.5 768V779M1561.5 769V779M1564.5 771V779M1571.5 768V779" stroke="#00e0ff" stroke-width="1"/><rect x="34.5" y="78.5" width="1591" height="900" fill="none" stroke="#c81010" stroke-width="1"/><line x1="34" y1="722.5" x2="1626" y2="722.5" stroke="#c81010"/><line x1="34" y1="779.5" x2="1626" y2="779.5" stroke="#c81010"/><path d="M1616 78 H1626 V88 Z" fill="#c81010"/><line x1="1674.5" y1="60" x2="1674.5" y2="799" stroke="#c81010"/><line x1="1674" y1="91.5" x2="1900" y2="91.5" stroke="#c81010"/><line x1="1674" y1="119.5" x2="1900" y2="119.5" stroke="#c81010"/><line x1="1674" y1="148.5" x2="1900" y2="148.5" stroke="#c81010"/><line x1="1674" y1="370.5" x2="1900" y2="370.5" stroke="#c81010"/><line x1="1674" y1="586.5" x2="1900" y2="586.5" stroke="#c81010"/><line x1="1786.5" y1="150" x2="1786.5" y2="367" stroke="#d02020" stroke-dasharray="3 2"/></svg>
<svg width="20" height="12" style="left:34px;top:62px"><path d="M9.5 5.5 H3.5 V9.5 H9.5 M12.5 5.5 H18.5 V9.5 H12.5 M8.5 7.5 H13.5" stroke="#c8c8c8" stroke-width="1.2" fill="none"/></svg>
<div class="a" style="left:58px;top:61.0px;line-height:16px;font-size:12px;color:#f0f0f0;font-family:'Liberation Mono', monospace;font-weight:normal;letter-spacing:-1.1px;">螺纹1910(SHFE rb1910)</div>
<div class="a" style="left:196px;top:61.0px;line-height:16px;font-size:12px;color:#f0f0f0;font-family:'Liberation Sans', sans-serif;font-weight:normal;">15秒</div>
<svg width="14" height="10" style="left:222px;top:64px"><path d="M1 2 L5.5 7 L10 2" stroke="#f0f0f0" stroke-width="1.5" fill="none"/></svg>
<div class="a" style="left:39px;top:79.0px;line-height:16px;font-size:12px;color:#e8e800;font-family:'Liberation Sans', sans-serif;font-weight:normal;">ZB555</div>
<svg width="14" height="10" style="left:74px;top:85px"><path d="M1 2 L5.5 7 L11 1" stroke="#e8e800" stroke-width="1.5" fill="none"/></svg>
<div class="a" style="left:94px;top:79.0px;line-height:16px;font-size:12px;color:#f0f0f0;font-family:'Liberation Sans', sans-serif;font-weight:normal;">四十分钟122 3766.34<svg width="8" height="13" style="position:static;display:inline-block;vertical-align:-2px;margin-left:3px"><path d="M4 1.5 V13 M1.8 5 L4 1.5 L6.2 5" stroke="#ff2828" stroke-width="1.1" fill="none"/></svg></div>
<div class="a" style="left:231px;top:79.0px;line-height:16px;font-size:12px;color:#e8e800;font-family:'Liberation Sans', sans-serif;font-weight:normal;">四十分钟127 3767.47<svg width="8" height="13" style="position:static;display:inline-block;vertical-align:-2px;margin-left:3px"><path d="M4 1.5 V13 M1.8 5 L4 1.5 L6.2 5" stroke="#ff2828" stroke-width="1.1" fill="none"/></svg></div>
<div class="a" style="left:368px;top:79.0px;line-height:16px;font-size:12px;color:#ff20ff;font-family:'Liberation Sans', sans-serif;font-weight:normal;">四十分钟12 3767.47<svg width="8" height="13" style="position:static;display:inline-block;vertical-align:-2px;margin-left:3px"><path d="M4 1.5 V13 M1.8 5 L4 1.5 L6.2 5" stroke="#ff2828" stroke-width="1.1" fill="none"/></svg></div>
<div class="a" style="left:498px;top:79.0px;line-height:16px;font-size:12px;color:#00ff00;font-family:'Liberation Sans', sans-serif;font-weight:normal;">MA二22 3766.34<svg width="8" height="13" style="position:static;display:inline-block;vertical-align:-2px;margin-left:3px"><path d="M4 1.5 V13 M1.8 5 L4 1.5 L6.2 5" stroke="#ff2828" stroke-width="1.1" fill="none"/></svg></div>
<div class="a" style="left:608px;top:79.0px;line-height:16px;font-size:12px;color:#a0a0a0;font-family:'Liberation Sans', sans-serif;font-weight:normal;">MA二89 3782.27<svg width="8" height="13" style="position:static;display:inline-block;vertical-align:-2px;margin-left:3px"><path d="M4 1.5 V13 M1.8 5 L4 1.5 L6.2 5" stroke="#ff2828" stroke-width="1.1" fill="none"/></svg></div>
<div class="a" style="left:720px;top:79.0px;line-height:16px;font-size:12px;color:#ff4040;font-family:'Liberation Sans', sans-serif;font-weight:normal;">MA二8 3782.27<svg width="8" height="13" style="position:static;display:inline-block;vertical-align:-2px;margin-left:3px"><path d="M4 1.5 V13 M1.8 5 L4 1.5 L6.2 5" stroke="#ff2828" stroke-width="1.1" fill="none"/></svg></div>
<div class="a" style="left:825px;top:79.0px;line-height:16px;font-size:12px;color:#ff8c00;font-family:'Liberation Sans', sans-serif;font-weight:normal;">MA二18 3767.47<svg width="8" height="13" style="position:static;display:inline-block;vertical-align:-2px;margin-left:3px"><path d="M4 1.5 V13 M1.8 5 L4 1.5 L6.2 5" stroke="#ff2828" stroke-width="1.1" fill="none"/></svg></div>
<div class="a" style="left:935px;top:79.0px;line-height:16px;font-size:12px;color:#00ff00;font-family:'Liberation Sans', sans-serif;font-weight:normal;">一号2 3769.77<svg width="8" height="13" style="position:static;display:inline-block;vertical-align:-2px;margin-left:3px"><path d="M4 1.5 V13 M1.8 5 L4 1.5 L6.2 5" stroke="#ff2828" stroke-width="1.1" fill="none"/></svg></div>
<div class="a" style="left:1034px;top:79.0px;line-height:16px;font-size:12px;color:#ff20ff;font-family:'Liberation Sans', sans-serif;font-weight:normal;">一号1 3782.27<svg width="8" height="13" style="position:static;display:inline-block;vertical-align:-2px;margin-left:3px"><path d="M4 1.5 V13 M1.8 5 L4 1.5 L6.2 5" stroke="#ff2828" stroke-width="1.1" fill="none"/></svg></div>
<div class="a" style="left:1627px;top:102.5px;line-height:17px;font-size:13px;color:#a4a4a4;font-family:'Liberation Sans', sans-serif;font-weight:bold;letter-spacing:-0.2px;">3813</div>
<div class="a" style="left:1627px;top:215.5px;line-height:17px;font-size:13px;color:#a4a4a4;font-family:'Liberation Sans', sans-serif;font-weight:bold;letter-spacing:-0.2px;">3800</div>
<div class="a" style="left:1627px;top:328.5px;line-height:17px;font-size:13px;color:#a4a4a4;font-family:'Liberation Sans', sans-serif;font-weight:bold;letter-spacing:-0.2px;">3787</div>
<div class="a" style="left:1627px;top:398.5px;line-height:17px;font-size:13px;color:#a4a4a4;font-family:'Liberation Sans', sans-serif;font-weight:bold;letter-spacing:-0.2px;">3779</div>
<div class="a" style="left:1627px;top:469.5px;line-height:17px;font-size:13px;color:#a4a4a4;font-family:'Liberation Sans', sans-serif;font-weight:bold;letter-spacing:-0.2px;">3771</div>
<div class="a" style="left:1627px;top:582.5px;line-height:17px;font-size:13px;color:#a4a4a4;font-family:'Liberation Sans', sans-serif;font-weight:bold;letter-spacing:-0.2px;">3758</div>
<div class="a" style="left:1627px;top:695.5px;line-height:17px;font-size:13px;color:#a4a4a4;font-family:'Liberation Sans', sans-serif;font-weight:bold;letter-spacing:-0.2px;">3745</div>
<div class="a" style="left:1627px;top:750.5px;line-height:17px;font-size:13px;color:#a4a4a4;font-family:'Liberation Sans', sans-serif;font-weight:bold;letter-spacing:-0.2px;">33000</div>
<div class="a" style="left:1566px;top:80.0px;line-height:16px;font-size:12px;color:#e8e800;font-family:'Liberation Sans', sans-serif;font-weight:normal;">对数坐标</div>
<div class="a" style="left:1555px;top:93.0px;line-height:16px;font-size:12px;color:#ff4040;font-family:'Liberation Sans', sans-serif;font-weight:normal;">3813</div>
<div class="a" style="left:35px;top:486.0px;line-height:16px;font-size:12px;color:#e06060;font-family:'Liberation Sans', sans-serif;font-weight:normal;letter-spacing:-0.3px;">3768</div>
<div class="a" style="left:158px;top:661.0px;line-height:16px;font-size:12px;color:#00e0e0;font-family:'Liberation Sans', sans-serif;font-weight:normal;">3750</div>
<div class="a" style="left:845px;top:705.0px;line-height:16px;font-size:12px;color:#00e0e0;font-family:'Liberation Sans', sans-serif;font-weight:normal;">3745</div>
<div class="a" style="left:37px;top:705.0px;line-height:16px;font-size:12px;color:#e8e800;font-family:'Liberation Sans', sans-serif;font-weight:normal;">1天</div>
<div class="a" style="left:1575px;top:492.0px;line-height:16px;font-size:12px;color:#ff1010;font-family:'Liberation Sans', sans-serif;font-weight:bold;letter-spacing:-0.3px;">240分钟</div>
<div class="a" style="left:1575px;top:502.5px;line-height:16px;font-size:12px;color:#ffff00;font-family:'Liberation Sans', sans-serif;font-weight:bold;letter-spacing:-0.3px;">480分钟</div>
<div class="a" style="left:39px;top:723.0px;line-height:16px;font-size:12px;color:#e8e800;font-family:'Liberation Sans', sans-serif;font-weight:normal;">CJL</div>
<svg width="14" height="10" style="left:58px;top:728px"><path d="M1 2 L5.5 7 L11 1" stroke="#e8e800" stroke-width="1.5" fill="none"/></svg>
<div class="a" style="left:77px;top:723.0px;line-height:16px;font-size:12px;color:#f0f0f0;font-family:'Liberation Sans', sans-serif;font-weight:normal;">18650.00(61:39)<svg width="8" height="13" style="position:static;display:inline-block;vertical-align:-2px;margin-left:3px"><path d="M4 1.5 V13 M1.8 5 L4 1.5 L6.2 5" stroke="#ff2828" stroke-width="1.1" fill="none"/></svg></div>
<div class="a" style="left:190px;top:723.0px;line-height:16px;font-size:12px;color:#f0f0f0;font-family:'Liberation Sans', sans-serif;font-weight:normal;">OPID 2276632.00<svg width="8" height="13" style="position:static;display:inline-block;vertical-align:-2px;margin-left:3px"><path d="M4 1.5 V13 M1.8 5 L4 1.5 L6.2 5" stroke="#ff2828" stroke-width="1.1" fill="none"/></svg></div>
<div class="a" style="left:39px;top:781.0px;line-height:16px;font-size:12px;color:#e8e800;font-family:'Liberation Sans', sans-serif;font-weight:normal;">ZB2</div>
<svg width="14" height="10" style="left:60px;top:786px"><path d="M1 2 L5.5 7 L11 1" stroke="#e8e800" stroke-width="1.5" fill="none"/></svg>
<div class="a" style="left:80px;top:781.0px;line-height:16px;font-size:12px;color:#f0f0f0;font-family:'Liberation Sans', sans-serif;font-weight:normal;">四十分钟127 3782.27<svg width="8" height="13" style="position:static;display:inline-block;vertical-align:-2px;margin-left:3px"><path d="M4 1.5 V13 M1.8 5 L4 1.5 L6.2 5" stroke="#ff2828" stroke-width="1.1" fill="none"/></svg></div>
<div class="a" style="left:217px;top:781.0px;line-height:16px;font-size:12px;color:#e8e800;font-family:'Liberation Sans', sans-serif;font-weight:normal;">四十分钟1271 3782.27<svg width="8" height="13" style="position:static;display:inline-block;vertical-align:-2px;margin-left:3px"><path d="M4 1.5 V13 M1.8 5 L4 1.5 L6.2 5" stroke="#ff2828" stroke-width="1.1" fill="none"/></svg></div>
<div class="a" style="left:361px;top:781.0px;line-height:16px;font-size:12px;color:#ff20ff;font-family:'Liberation Sans', sans-serif;font-weight:normal;">一号1 3782.27<svg width="8" height="13" style="position:static;display:inline-block;vertical-align:-2px;margin-left:3px"><path d="M4 1.5 V13 M1.8 5 L4 1.5 L6.2 5" stroke="#ff2828" stroke-width="1.1" fill="none"/></svg></div>
<div class="a" style="left:460px;top:781.0px;line-height:16px;font-size:12px;color:#ff20ff;font-family:'Liberation Sans', sans-serif;font-weight:normal;">一号11 3782.27<svg width="8" height="13" style="position:static;display:inline-block;vertical-align:-2px;margin-left:3px"><path d="M4 1.5 V13 M1.8 5 L4 1.5 L6.2 5" stroke="#ff2828" stroke-width="1.1" fill="none"/></svg></div>
<div class="a" style="left:565px;top:781.0px;line-height:16px;font-size:12px;color:#00ff00;font-family:'Liberation Sans', sans-serif;font-weight:normal;">一号2 3782.27<svg width="8" height="13" style="position:static;display:inline-block;vertical-align:-2px;margin-left:3px"><path d="M4 1.5 V13 M1.8 5 L4 1.5 L6.2 5" stroke="#ff2828" stroke-width="1.1" fill="none"/></svg></div>
<div class="a" style="left:1678px;top:64.0px;line-height:26px;font-size:22px;color:#e8e800;font-family:'Liberation Serif', serif;font-weight:normal;">螺纹</div>
<div class="a" style="left:1724px;top:65.0px;line-height:24px;font-size:20px;color:#e8e800;font-family:'Liberation Mono', monospace;font-weight:normal;">1910&nbsp;rb1910</div>
<div class="a" style="left:1677px;top:96.5px;line-height:19px;font-size:15px;color:#f0f0f0;font-family:'Liberation Sans', sans-serif;font-weight:normal;">卖出</div>
<div class="a" style="left:1742px;top:94.25px;line-height:23.5px;font-size:19.5px;color:#00ff00;font-family:'Liberation Sans', sans-serif;font-weight:normal;">3808</div>
<div class="a" style="left:1820px;top:94.25px;line-height:23.5px;font-size:19.5px;color:#e8e800;font-family:'Liberation Sans', sans-serif;font-weight:normal;">137</div>
<div class="a" style="left:1677px;top:125.5px;line-height:19px;font-size:15px;color:#f0f0f0;font-family:'Liberation Sans', sans-serif;font-weight:normal;">买入</div>
<div class="a" style="left:1742px;top:123.25px;line-height:23.5px;font-size:19.5px;color:#00ff00;font-family:'Liberation Sans', sans-serif;font-weight:normal;">3806</div>
<div class="a" style="left:1820px;top:123.25px;line-height:23.5px;font-size:19.5px;color:#e8e800;font-family:'Liberation Sans', sans-serif;font-weight:normal;">405</div>
<div class="a" style="left:1677px;top:151.0px;line-height:18px;font-size:14px;color:#f0f0f0;font-family:'Liberation Sans', sans-serif;font-weight:normal;">最新</div>
<div class="a" style="right:124px;top:151.5px;line-height:17px;font-size:13px;color:#ff4040;font-family:'Liberation Sans', sans-serif;font-weight:bold;">3808</div>
<div class="a" style="left:1796px;top:151.0px;line-height:18px;font-size:14px;color:#f0f0f0;font-family:'Liberation Sans', sans-serif;font-weight:normal;">涨跌</div>
<div class="a" style="right:-6px;top:151.5px;line-height:17px;font-size:13px;color:#ff4040;font-family:'Liberation Sans', sans-serif;font-weight:bold;">54/1.44%</div>
<div class="a" style="left:1677px;top:172.8px;line-height:18px;font-size:14px;color:#f0f0f0;font-family:'Liberation Sans', sans-serif;font-weight:normal;">现手</div>
<div class="a" style="right:124px;top:173.3px;line-height:17px;font-size:13px;color:#e8e800;font-family:'Liberation Sans', sans-serif;font-weight:bold;">870</div>
<div class="a" style="left:1796px;top:172.8px;line-height:18px;font-size:14px;color:#f0f0f0;font-family:'Liberation Sans', sans-serif;font-weight:normal;">速涨</div>
<div class="a" style="right:-6px;top:173.3px;line-height:17px;font-size:13px;color:#ff4040;font-family:'Liberation Sans', sans-serif;font-weight:bold;">0.18%</div>
<div class="a" style="left:1677px;top:194.6px;line-height:18px;font-size:14px;color:#f0f0f0;font-family:'Liberation Sans', sans-serif;font-weight:normal;">总手</div>
<div class="a" style="right:124px;top:195.1px;line-height:17px;font-size:13px;color:#e8e800;font-family:'Liberation Sans', sans-serif;font-weight:bold;">3456604</div>
<div class="a" style="left:1796px;top:194.6px;line-height:18px;font-size:14px;color:#f0f0f0;font-family:'Liberation Sans', sans-serif;font-weight:normal;">开盘</div>
<div class="a" style="right:-6px;top:195.1px;line-height:17px;font-size:13px;color:#ff4040;font-family:'Liberation Sans', sans-serif;font-weight:bold;">3770</div>
<div class="a" style="left:1677px;top:216.4px;line-height:18px;font-size:14px;color:#f0f0f0;font-family:'Liberation Sans', sans-serif;font-weight:normal;">持仓</div>
<div class="a" style="right:124px;top:216.9px;line-height:17px;font-size:13px;color:#e8e800;font-family:'Liberation Sans', sans-serif;font-weight:bold;">2276632</div>
<div class="a" style="left:1796px;top:216.4px;line-height:18px;font-size:14px;color:#f0f0f0;font-family:'Liberation Sans', sans-serif;font-weight:normal;">最高</div>
<div class="a" style="right:-6px;top:216.9px;line-height:17px;font-size:13px;color:#ff4040;font-family:'Liberation Sans', sans-serif;font-weight:bold;">3814</div>
<div class="a" style="left:1677px;top:238.2px;line-height:18px;font-size:14px;color:#f0f0f0;font-family:'Liberation Sans', sans-serif;font-weight:normal;">日增</div>
<div class="a" style="right:124px;top:238.7px;line-height:17px;font-size:13px;color:#e8e800;font-family:'Liberation Sans', sans-serif;font-weight:bold;">93896</div>
<div class="a" style="left:1796px;top:238.2px;line-height:18px;font-size:14px;color:#f0f0f0;font-family:'Liberation Sans', sans-serif;font-weight:normal;">最低</div>
<div class="a" style="right:-6px;top:238.7px;line-height:17px;font-size:13px;color:#ff4040;font-family:'Liberation Sans', sans-serif;font-weight:bold;">3745</div>
<div class="a" style="left:1677px;top:260.0px;line-height:18px;font-size:14px;color:#f0f0f0;font-family:'Liberation Sans', sans-serif;font-weight:normal;">外盘</div>
<div class="a" style="right:124px;top:260.5px;line-height:17px;font-size:13px;color:#e8e800;font-family:'Liberation Sans', sans-serif;font-weight:bold;">1721092</div>
<div class="a" style="left:1796px;top:260.0px;line-height:18px;font-size:14px;color:#f0f0f0;font-family:'Liberation Sans', sans-serif;font-weight:normal;">结算价</div>
<div class="a" style="right:-6px;top:260.5px;line-height:17px;font-size:13px;color:#ff4040;font-family:'Liberation Sans', sans-serif;font-weight:bold;">3773</div>
<div class="a" style="left:1677px;top:281.8px;line-height:18px;font-size:14px;color:#f0f0f0;font-family:'Liberation Sans', sans-serif;font-weight:normal;">比例</div>
<div class="a" style="right:124px;top:282.3px;line-height:17px;font-size:13px;color:#e8e800;font-family:'Liberation Sans', sans-serif;font-weight:bold;">50%</div>
<div class="a" style="left:1796px;top:281.8px;line-height:18px;font-size:14px;color:#f0f0f0;font-family:'Liberation Sans', sans-serif;font-weight:normal;">昨收</div>
<div class="a" style="right:-6px;top:282.3px;line-height:17px;font-size:13px;color:#f0f0f0;font-family:'Liberation Sans', sans-serif;font-weight:bold;">3774</div>
<div class="a" style="left:1677px;top:303.6px;line-height:18px;font-size:14px;color:#f0f0f0;font-family:'Liberation Sans', sans-serif;font-weight:normal;">内盘</div>
<div class="a" style="right:124px;top:304.1px;line-height:17px;font-size:13px;color:#e8e800;font-family:'Liberation Sans', sans-serif;font-weight:bold;">1735512</div>
<div class="a" style="left:1796px;top:303.6px;line-height:18px;font-size:14px;color:#f0f0f0;font-family:'Liberation Sans', sans-serif;font-weight:normal;">昨结</div>
<div class="a" style="right:-6px;top:304.1px;line-height:17px;font-size:13px;color:#f0f0f0;font-family:'Liberation Sans', sans-serif;font-weight:bold;">3754</div>
<div class="a" style="left:1677px;top:325.4px;line-height:18px;font-size:14px;color:#f0f0f0;font-family:'Liberation Sans', sans-serif;font-weight:normal;">比例</div>
<div class="a" style="right:124px;top:325.9px;line-height:17px;font-size:13px;color:#e8e800;font-family:'Liberation Sans', sans-serif;font-weight:bold;">50%</div>
<div class="a" style="left:1796px;top:325.4px;line-height:18px;font-size:14px;color:#f0f0f0;font-family:'Liberation Sans', sans-serif;font-weight:normal;">涨停</div>
<div class="a" style="right:-6px;top:325.9px;line-height:17px;font-size:13px;color:#ff4040;font-family:'Liberation Sans', sans-serif;font-weight:bold;">3979</div>
<div class="a" style="left:1677px;top:347.20000000000005px;line-height:18px;font-size:14px;color:#f0f0f0;font-family:'Liberation Sans', sans-serif;font-weight:normal;">杠杆</div>
<div class="a" style="right:124px;top:347.70000000000005px;line-height:17px;font-size:13px;color:#e8e800;font-family:'Liberation Sans', sans-serif;font-weight:bold;">-----</div>
<div class="a" style="left:1796px;top:347.20000000000005px;line-height:18px;font-size:14px;color:#f0f0f0;font-family:'Liberation Sans', sans-serif;font-weight:normal;">跌停</div>
<div class="a" style="right:-6px;top:347.70000000000005px;line-height:17px;font-size:13px;color:#00ff00;font-family:'Liberation Sans', sans-serif;font-weight:bold;">3528</div>
<svg width="12" height="8" style="left:1840px;top:267px"><path d="M0 0 H9 L4.5 5 Z" fill="#a0a0a0"/></svg>
<div class="a" style="left:1679px;top:373.0px;line-height:18px;font-size:14px;color:#a0a0a0;font-family:'Liberation Sans', sans-serif;font-weight:normal;">时间</div>
<div class="a" style="left:1762px;top:373.0px;line-height:18px;font-size:14px;color:#a0a0a0;font-family:'Liberation Sans', sans-serif;font-weight:normal;">价位</div>
<div class="a" style="left:1802px;top:373.0px;line-height:18px;font-size:14px;color:#a0a0a0;font-family:'Liberation Sans', sans-serif;font-weight:normal;">大单</div>
<div class="a" style="left:1836px;top:373.0px;line-height:18px;font-size:14px;color:#a0a0a0;font-family:'Liberation Sans', sans-serif;font-weight:normal;">增仓</div>
<div class="a" style="left:1874px;top:373.0px;line-height:18px;font-size:14px;color:#a0a0a0;font-family:'Liberation Sans', sans-serif;font-weight:normal;">开平</div>
<div class="a" style="left:1679px;top:589.0px;line-height:18px;font-size:14px;color:#a0a0a0;font-family:'Liberation Sans', sans-serif;font-weight:normal;">时间</div>
<div class="a" style="left:1762px;top:589.0px;line-height:18px;font-size:14px;color:#a0a0a0;font-family:'Liberation Sans', sans-serif;font-weight:normal;">价位</div>
<div class="a" style="left:1802px;top:589.0px;line-height:18px;font-size:14px;color:#a0a0a0;font-family:'Liberation Sans', sans-serif;font-weight:normal;">现手</div>
<div class="a" style="left:1836px;top:589.0px;line-height:18px;font-size:14px;color:#a0a0a0;font-family:'Liberation Sans', sans-serif;font-weight:normal;">增仓</div>
<div class="a" style="left:1874px;top:589.0px;line-height:18px;font-size:14px;color:#a0a0a0;font-family:'Liberation Sans', sans-serif;font-weight:normal;">开平</div>
<div class="a" style="left:1680px;top:611.5px;line-height:17px;font-size:13px;color:#a0a0a0;font-family:'Liberation Sans', sans-serif;font-weight:bold;">14:59:53</div>
<div class="a" style="left:1762px;top:611.5px;line-height:17px;font-size:13px;color:#ff4040;font-family:'Liberation Sans', sans-serif;font-weight:bold;">3810</div>
<div class="a" style="right:70px;top:611.5px;line-height:17px;font-size:13px;color:#ff4040;font-family:'Liberation Sans', sans-serif;font-weight:bold;">410</div>
<div class="a" style="right:36px;top:611.5px;line-height:17px;font-size:13px;color:#e8e800;font-family:'Liberation Sans', sans-serif;font-weight:bold;">-2</div>
<div class="a" style="left:1874px;top:611.0px;line-height:18px;font-size:14px;color:#e8e800;font-family:'Liberation Sans', sans-serif;font-weight:normal;">空平</div>
<div class="a" style="left:1680px;top:635.5px;line-height:17px;font-size:13px;color:#a0a0a0;font-family:'Liberation Sans', sans-serif;font-weight:bold;">14:59:53</div>
<div class="a" style="left:1762px;top:635.5px;line-height:17px;font-size:13px;color:#ff4040;font-family:'Liberation Sans', sans-serif;font-weight:bold;">3810</div>
<div class="a" style="right:70px;top:635.5px;line-height:17px;font-size:13px;color:#00ff00;font-family:'Liberation Sans', sans-serif;font-weight:bold;">1194</div>
<div class="a" style="right:36px;top:635.5px;line-height:17px;font-size:13px;color:#e8e800;font-family:'Liberation Sans', sans-serif;font-weight:bold;">256</div>
<div class="a" style="left:1874px;top:635.0px;line-height:18px;font-size:14px;color:#e8e800;font-family:'Liberation Sans', sans-serif;font-weight:normal;">空开</div>
<div class="a" style="left:1680px;top:659.5px;line-height:17px;font-size:13px;color:#a0a0a0;font-family:'Liberation Sans', sans-serif;font-weight:bold;">14:59:54</div>
<div class="a" style="left:1762px;top:659.5px;line-height:17px;font-size:13px;color:#ff4040;font-family:'Liberation Sans', sans-serif;font-weight:bold;">3808</div>
<div class="a" style="right:70px;top:659.5px;line-height:17px;font-size:13px;color:#00ff00;font-family:'Liberation Sans', sans-serif;font-weight:bold;">1156</div>
<div class="a" style="right:36px;top:659.5px;line-height:17px;font-size:13px;color:#e8e800;font-family:'Liberation Sans', sans-serif;font-weight:bold;">-216</div>
<div class="a" style="left:1874px;top:659.0px;line-height:18px;font-size:14px;color:#e8e800;font-family:'Liberation Sans', sans-serif;font-weight:normal;">多平</div>
<div class="a" style="left:1680px;top:683.5px;line-height:17px;font-size:13px;color:#a0a0a0;font-family:'Liberation Sans', sans-serif;font-weight:bold;">14:59:54</div>
<div class="a" style="left:1762px;top:683.5px;line-height:17px;font-size:13px;color:#ff4040;font-family:'Liberation Sans', sans-serif;font-weight:bold;">3810</div>
<div class="a" style="right:70px;top:683.5px;line-height:17px;font-size:13px;color:#ff4040;font-family:'Liberation Sans', sans-serif;font-weight:bold;">682</div>
<div class="a" style="right:36px;top:683.5px;line-height:17px;font-size:13px;color:#e8e800;font-family:'Liberation Sans', sans-serif;font-weight:bold;">226</div>
<div class="a" style="left:1874px;top:683.0px;line-height:18px;font-size:14px;color:#e8e800;font-family:'Liberation Sans', sans-serif;font-weight:normal;">多开</div>
<div class="a" style="left:1680px;top:707.5px;line-height:17px;font-size:13px;color:#a0a0a0;font-family:'Liberation Sans', sans-serif;font-weight:bold;">14:59:55</div>
<div class="a" style="left:1762px;top:707.5px;line-height:17px;font-size:13px;color:#ff4040;font-family:'Liberation Sans', sans-serif;font-weight:bold;">3810</div>
<div class="a" style="right:70px;top:707.5px;line-height:17px;font-size:13px;color:#00ff00;font-family:'Liberation Sans', sans-serif;font-weight:bold;">288</div>
<div class="a" style="right:36px;top:707.5px;line-height:17px;font-size:13px;color:#e8e800;font-family:'Liberation Sans', sans-serif;font-weight:bold;">92</div>
<div class="a" style="left:1874px;top:707.0px;line-height:18px;font-size:14px;color:#e8e800;font-family:'Liberation Sans', sans-serif;font-weight:normal;">空开</div>
<div class="a" style="left:1680px;top:731.5px;line-height:17px;font-size:13px;color:#a0a0a0;font-family:'Liberation Sans', sans-serif;font-weight:bold;">14:59:55</div>
<div class="a" style="left:1762px;top:731.5px;line-height:17px;font-size:13px;color:#ff4040;font-family:'Liberation Sans', sans-serif;font-weight:bold;">3810</div>
<div class="a" style="right:70px;top:731.5px;line-height:17px;font-size:13px;color:#ff4040;font-family:'Liberation Sans', sans-serif;font-weight:bold;">904</div>
<div class="a" style="right:36px;top:731.5px;line-height:17px;font-size:13px;color:#e8e800;font-family:'Liberation Sans', sans-serif;font-weight:bold;">498</div>
<div class="a" style="left:1874px;top:731.0px;line-height:18px;font-size:14px;color:#e8e800;font-family:'Liberation Sans', sans-serif;font-weight:normal;">多开</div>
<div class="a" style="left:1680px;top:755.5px;line-height:17px;font-size:13px;color:#a0a0a0;font-family:'Liberation Sans', sans-serif;font-weight:bold;">14:59:56</div>
<div class="a" style="left:1762px;top:755.5px;line-height:17px;font-size:13px;color:#ff4040;font-family:'Liberation Sans', sans-serif;font-weight:bold;">3807</div>
<div class="a" style="right:70px;top:755.5px;line-height:17px;font-size:13px;color:#00ff00;font-family:'Liberation Sans', sans-serif;font-weight:bold;">854</div>
<div class="a" style="right:36px;top:755.5px;line-height:17px;font-size:13px;color:#e8e800;font-family:'Liberation Sans', sans-serif;font-weight:bold;">-154</div>
<div class="a" style="left:1874px;top:755.0px;line-height:18px;font-size:14px;color:#e8e800;font-family:'Liberation Sans', sans-serif;font-weight:normal;">多平</div>
<div class="a" style="left:1680px;top:779.5px;line-height:17px;font-size:13px;color:#a0a0a0;font-family:'Liberation Sans', sans-serif;font-weight:bold;">14:59:56</div>
<div class="a" style="left:1762px;top:779.5px;line-height:17px;font-size:13px;color:#ff4040;font-family:'Liberation Sans', sans-serif;font-weight:bold;">3810</div>
<div class="a" style="right:70px;top:779.5px;line-height:17px;font-size:13px;color:#ff4040;font-family:'Liberation Sans', sans-serif;font-weight:bold;">340</div>
<div class="a" style="right:36px;top:779.5px;line-height:17px;font-size:13px;color:#e8e800;font-family:'Liberation Sans', sans-serif;font-weight:bold;">-58</div>
<div class="a" style="left:1874px;top:779.0px;line-height:18px;font-size:14px;color:#e8e800;font-family:'Liberation Sans', sans-serif;font-weight:normal;">空平</div>
<div class="a" style="left:186px;top:137px;width:676px;height:498px;border-radius:7px;background:radial-gradient(ellipse 130px 26px at 70px 14px,rgba(185,188,193,0.97) 0%,rgba(150,153,158,0.8) 45%,rgba(30,34,42,0) 100%),linear-gradient(90deg,rgba(110,113,118,0.55) 0px,rgba(60,70,80,0.35) 140px,rgba(60,70,80,0.3) 100%);border:1px solid rgba(215,218,222,0.7)"></div>
<div class="a" style="left:187px;top:138px;width:674px;height:26px;border-radius:6px 6px 0 0;background:radial-gradient(ellipse 100px 34px at 55px 14px,rgba(192,195,200,0.98) 0%,rgba(175,178,182,0.95) 55%,rgba(30,34,42,0) 100%),linear-gradient(90deg,rgba(40,44,50,0.9),rgba(14,18,26,0.97) 30%,rgba(14,18,26,0.97))"></div>
<div class="a" style="left:192px;top:628px;width:664px;height:6px;background:linear-gradient(180deg,rgba(12,16,24,0.95),rgba(20,24,32,0.95))"></div>
<div class="a" style="left:187px;top:164px;width:5px;height:130px;background:linear-gradient(180deg,rgba(140,143,148,0.9),rgba(200,202,205,0.9) 40%,rgba(170,172,175,0.85) 88%,rgba(40,44,50,0.6) 100%)"></div>
<div class="a" style="left:856px;top:164px;width:5px;height:130px;background:linear-gradient(180deg,rgba(140,143,148,0.9),rgba(220,222,225,0.95) 40%,rgba(170,172,175,0.85) 88%,rgba(40,44,50,0.6) 100%)"></div>
<div class="a" style="left:192px;top:164px;width:664px;height:465px;background:#f0f0f0;border:1px solid #2a2d33;box-shadow:inset 0 0 0 1px #fafafa"></div>
<svg width="16" height="14" style="left:193px;top:144px"><rect x="0.5" y="0.5" width="14" height="12" fill="#e8eef0" stroke="#c8d0d4"/><rect x="2" y="2" width="5" height="9" fill="#3a9a6a"/><rect x="2" y="2" width="5" height="4" fill="#4a90c0"/><rect x="10" y="2" width="3" height="3" fill="#70b070"/></svg>
<div class="a" style="left:214px;top:141px;line-height:18px;font-size:12px;color:#111;text-shadow:0 0 6px #fff,0 0 10px #fff,0 0 3px #fff">指标公式编辑器</div>
<div class="a" style="left:753px;top:137px;width:28px;height:19px;border-radius:0 0 0 5px;background:linear-gradient(180deg,#b8bbc0 0%,#8e9298 45%,#4a4f57 50%,#5a5f68 100%);border:1px solid #3c3f44;box-shadow:inset 0 0 0 1px rgba(255,255,255,0.5)"></div>
<div class="a" style="left:762px;top:147px;width:11px;height:3px;background:#c8c8c8;border:1px solid #555"></div>
<div class="a" style="left:781px;top:137px;width:27px;height:19px;background:linear-gradient(180deg,#b8bbc0 0%,#8e9298 45%,#4a4f57 50%,#5a5f68 100%);border:1px solid #3c3f44;box-shadow:inset 0 0 0 1px rgba(255,255,255,0.5)"></div>
<div class="a" style="left:789px;top:141px;width:11px;height:9px;border:2px solid #fff;outline:1px solid #333"></div>
<div class="a" style="left:808px;top:137px;width:48px;height:19px;border-radius:0 0 5px 0;background:linear-gradient(180deg,#e0a090 0%,#d06850 45%,#b02810 55%,#c85a40 100%);border:1px solid #5a2a20;box-shadow:inset 0 0 0 1px rgba(255,255,255,0.45)"></div>
<svg width="14" height="12" style="left:826px;top:141px"><path d="M2 2 L11 10 M11 2 L2 10" stroke="#333" stroke-width="4"/><path d="M2 2 L11 10 M11 2 L2 10" stroke="#fff" stroke-width="2.2"/></svg>
<div class="a" style="left:206px;top:177.5px;line-height:17px;font-size:13px;color:#111;font-family:'Liberation Sans', sans-serif;font-weight:normal;">名称</div>
<div class="a" style="left:206px;top:204.5px;line-height:17px;font-size:13px;color:#111;font-family:'Liberation Sans', sans-serif;font-weight:normal;">描述</div>
<div class="a" style="left:206px;top:231.5px;line-height:17px;font-size:13px;color:#111;font-family:'Liberation Sans', sans-serif;font-weight:normal;">属性</div>
<div class="a" style="left:240px;top:175px;width:92px;height:21px;background:#f0f0f0;border:1px solid #c9c9c9;border-right-color:#fff;border-bottom-color:#fff"></div>
<div class="a" style="left:242px;top:174.5px;line-height:15px;font-size:11px;color:#8a8a8a;font-family:'Liberation Mono', monospace;font-weight:normal;letter-spacing:-0.5px;">ZB555</div>
<div class="a" style="left:240px;top:204px;width:288px;height:21px;background:#fff;border:1px solid #b8b8b8;border-radius:2px"></div>
<div class="a" style="left:240px;top:231px;width:104px;height:20px;background:linear-gradient(180deg,#f6f6f6,#dedede);border:1px solid #707070;border-radius:3px"></div>
<div class="a" style="left:243px;top:233.0px;line-height:16px;font-size:12px;color:#111;font-family:'Liberation Sans', sans-serif;font-weight:normal;letter-spacing:-0.5px;">K线附属指标</div>
<svg width="10" height="6" style="left:330px;top:239px"><path d="M0 0 H8 L4 5 Z" fill="#111"/></svg>
<div class="a" style="left:203px;top:281.0px;line-height:16px;font-size:12px;color:#1010e0;font-family:'Liberation Sans', sans-serif;font-weight:normal;">点击进入麦语言论坛，向文华技术人员提问你遇到的问题</div>
<svg width="1900" height="799" style="left:0;top:0"><rect x="580.5" y="172.5" width="267" height="121" fill="#f0f0f0" stroke="#a0a0a0"/><rect x="621" y="196" width="206" height="97" fill="#fff"/><rect x="581" y="173" width="246" height="23" fill="#f0f0f0"/><line x1="621.5" y1="173" x2="621.5" y2="293" stroke="#d0d0d0"/><line x1="669.5" y1="173" x2="669.5" y2="293" stroke="#d0d0d0"/><line x1="722.5" y1="173" x2="722.5" y2="293" stroke="#d0d0d0"/><line x1="775.5" y1="173" x2="775.5" y2="293" stroke="#d0d0d0"/><line x1="827.5" y1="173" x2="827.5" y2="293" stroke="#d0d0d0"/><line x1="581" y1="196.5" x2="827" y2="196.5" stroke="#d0d0d0"/><line x1="581" y1="220.5" x2="827" y2="220.5" stroke="#d0d0d0"/><line x1="581" y1="244.5" x2="827" y2="244.5" stroke="#d0d0d0"/><line x1="581" y1="268.5" x2="827" y2="268.5" stroke="#d0d0d0"/><rect x="828" y="173" width="19" height="120" fill="#ededed"/><rect x="831.5" y="192.5" width="13" height="55" rx="2" fill="#e4e4e4" stroke="#a8a8a8"/><path d="M834 183 L838 179 L842 183 Z M834 284 L842 284 L838 288 Z" fill="#444"/><path d="M835 217.5h7 M835 219.5h7 M835 221.5h7" stroke="#777"/></svg>
<div class="a" style="left:401px;width:400px;text-align:center;top:175.5px;line-height:17px;font-size:13px;color:#111;font-family:'Liberation Sans', sans-serif;font-weight:normal;">参数</div>
<div class="a" style="left:445px;width:400px;text-align:center;top:175.5px;line-height:17px;font-size:13px;color:#111;font-family:'Liberation Sans', sans-serif;font-weight:normal;">名称</div>
<div class="a" style="left:495px;width:400px;text-align:center;top:175.5px;line-height:17px;font-size:13px;color:#111;font-family:'Liberation Sans', sans-serif;font-weight:normal;">最小值</div>
<div class="a" style="left:548px;width:400px;text-align:center;top:175.5px;line-height:17px;font-size:13px;color:#111;font-family:'Liberation Sans', sans-serif;font-weight:normal;">最大值</div>
<div class="a" style="left:601px;width:400px;text-align:center;top:175.5px;line-height:17px;font-size:13px;color:#111;font-family:'Liberation Sans', sans-serif;font-weight:normal;">当前值</div>
<div class="a" style="left:401px;width:400px;text-align:center;top:200.0px;line-height:16px;font-size:12px;color:#111;font-family:'Liberation Mono', monospace;font-weight:normal;">1</div>
<div class="a" style="left:674px;top:200.0px;line-height:16px;font-size:12px;color:#111;font-family:'Liberation Mono', monospace;font-weight:normal;">0</div>
<div class="a" style="left:727px;top:200.0px;line-height:16px;font-size:12px;color:#111;font-family:'Liberation Mono', monospace;font-weight:normal;">0</div>
<div class="a" style="left:780px;top:200.0px;line-height:16px;font-size:12px;color:#111;font-family:'Liberation Mono', monospace;font-weight:normal;">0</div>
<div class="a" style="left:401px;width:400px;text-align:center;top:224.0px;line-height:16px;font-size:12px;color:#111;font-family:'Liberation Mono', monospace;font-weight:normal;">2</div>
<div class="a" style="left:674px;top:224.0px;line-height:16px;font-size:12px;color:#111;font-family:'Liberation Mono', monospace;font-weight:normal;">0</div>
<div class="a" style="left:727px;top:224.0px;line-height:16px;font-size:12px;color:#111;font-family:'Liberation Mono', monospace;font-weight:normal;">0</div>
<div class="a" style="left:780px;top:224.0px;line-height:16px;font-size:12px;color:#111;font-family:'Liberation Mono', monospace;font-weight:normal;">0</div>
<div class="a" style="left:401px;width:400px;text-align:center;top:248.0px;line-height:16px;font-size:12px;color:#111;font-family:'Liberation Mono', monospace;font-weight:normal;">3</div>
<div class="a" style="left:674px;top:248.0px;line-height:16px;font-size:12px;color:#111;font-family:'Liberation Mono', monospace;font-weight:normal;">0</div>
<div class="a" style="left:727px;top:248.0px;line-height:16px;font-size:12px;color:#111;font-family:'Liberation Mono', monospace;font-weight:normal;">0</div>
<div class="a" style="left:780px;top:248.0px;line-height:16px;font-size:12px;color:#111;font-family:'Liberation Mono', monospace;font-weight:normal;">0</div>
<div class="a" style="left:401px;width:400px;text-align:center;top:272.0px;line-height:16px;font-size:12px;color:#111;font-family:'Liberation Mono', monospace;font-weight:normal;">4</div>
<div class="a" style="left:674px;top:272.0px;line-height:16px;font-size:12px;color:#111;font-family:'Liberation Mono', monospace;font-weight:normal;">0</div>
<div class="a" style="left:727px;top:272.0px;line-height:16px;font-size:12px;color:#111;font-family:'Liberation Mono', monospace;font-weight:normal;">0</div>
<div class="a" style="left:780px;top:272.0px;line-height:16px;font-size:12px;color:#111;font-family:'Liberation Mono', monospace;font-weight:normal;">0</div>
<div class="a" style="left:727px;top:301px;width:96px;height:19px;border:1px solid #707070;border-radius:3px;background:linear-gradient(180deg,#f2f2f2 0%,#ebebeb 50%,#dddddd 51%,#cfcfcf 100%)"></div><div class="a" style="left:575px;width:400px;text-align:center;top:302.0px;line-height:17px;font-size:13px;color:#111;font-family:'Liberation Sans', sans-serif;font-weight:normal;">恢复系统参数</div>
<div class="a" style="left:263px;top:308px;width:56px;height:18px;background:linear-gradient(180deg,#f0f0f0,#dadada);border:1px solid #8a8a8a;border-bottom:none"></div>
<div class="a" style="left:91px;width:400px;text-align:center;top:309.25px;line-height:16.5px;font-size:12.5px;color:#111;font-family:'Liberation Sans', sans-serif;font-weight:normal;">公式说明</div>
<div class="a" style="left:199px;top:306px;width:64px;height:20px;background:#fff;border:1px solid #8a8a8a;border-bottom:none"></div>
<div class="a" style="left:31px;width:400px;text-align:center;top:307.75px;line-height:16.5px;font-size:12.5px;color:#111;font-family:'Liberation Sans', sans-serif;font-weight:normal;">指标公式</div>
<svg width="1900" height="799" style="left:0;top:0"><rect x="199" y="330" width="646" height="268" fill="#f0f0f0"/><rect x="235" y="330" width="593" height="252" fill="#fff"/><rect x="199" y="330" width="36" height="252" fill="#c0c0c0"/><rect x="828" y="330" width="17" height="252" fill="#ececec"/><path d="M834 342 L838 338 L842 342 Z M834 572 L842 572 L838 576 Z" fill="#444"/><rect x="829.5" y="520.5" width="13" height="40" rx="2" fill="#e4e4e4" stroke="#a8a8a8"/><path d="M833 537.5h7 M833 539.5h7 M833 541.5h7" stroke="#777"/><rect x="199" y="582" width="629" height="16" fill="#ececec"/><path d="M210 586 L206 590 L210 594 Z M818 586 L822 590 L818 594 Z" fill="#444"/><rect x="217.5" y="583.5" width="171" height="14" rx="2" fill="#dcdcdc" stroke="#9a9a9a"/><path d="M298.5 587v6 M300.5 587v6 M302.5 587v6" stroke="#666"/></svg>
<div class="a" style="right:1668px;top:330.5px;line-height:20px;font-size:16px;color:#111;font-family:'Liberation Sans', sans-serif;font-weight:bold;">47</div>
<div class="a" style="right:1668px;top:350.5px;line-height:20px;font-size:16px;color:#111;font-family:'Liberation Sans', sans-serif;font-weight:bold;">48</div>
<div class="a" style="right:1668px;top:370.5px;line-height:20px;font-size:16px;color:#111;font-family:'Liberation Sans', sans-serif;font-weight:bold;">49</div>
<div class="a" style="right:1668px;top:390.5px;line-height:20px;font-size:16px;color:#111;font-family:'Liberation Sans', sans-serif;font-weight:bold;">50</div>
<div class="a" style="right:1668px;top:410.5px;line-height:20px;font-size:16px;color:#111;font-family:'Liberation Sans', sans-serif;font-weight:bold;">51</div>
<div class="a" style="right:1668px;top:430.5px;line-height:20px;font-size:16px;color:#111;font-family:'Liberation Sans', sans-serif;font-weight:bold;">52</div>
<div class="a" style="right:1668px;top:450.5px;line-height:20px;font-size:16px;color:#111;font-family:'Liberation Sans', sans-serif;font-weight:bold;">53</div>
<div class="a" style="right:1668px;top:470.5px;line-height:20px;font-size:16px;color:#111;font-family:'Liberation Sans', sans-serif;font-weight:bold;">54</div>
<div class="a" style="right:1668px;top:490.5px;line-height:20px;font-size:16px;color:#111;font-family:'Liberation Sans', sans-serif;font-weight:bold;">55</div>
<div class="a" style="right:1668px;top:510.5px;line-height:20px;font-size:16px;color:#111;font-family:'Liberation Sans', sans-serif;font-weight:bold;">56</div>
<div class="a" style="right:1668px;top:530.5px;line-height:20px;font-size:16px;color:#111;font-family:'Liberation Sans', sans-serif;font-weight:bold;">57</div>
<div class="a" style="right:1668px;top:550.5px;line-height:20px;font-size:16px;color:#111;font-family:'Liberation Sans', sans-serif;font-weight:bold;">58</div>
<div class="a" style="left:236px;top:332px;line-height:18px;font-size:13.33px;font-family:'Liberation Mono', monospace;font-weight:bold;width:592px;overflow:hidden"><span style="color:#0000ff">PARTLINE</span><span style="color:#000">(<span style="display:inline-block;width:16px;text-align:center;font-family:'Liberation Sans', sans-serif;font-weight:normal">一</span><span style="display:inline-block;width:16px;text-align:center;font-family:'Liberation Sans', sans-serif;font-weight:normal">号</span>1&lt;</span><span style="color:#0000ff">REF</span><span style="color:#000">(<span style="display:inline-block;width:16px;text-align:center;font-family:'Liberation Sans', sans-serif;font-weight:normal">一</span><span style="display:inline-block;width:16px;text-align:center;font-family:'Liberation Sans', sans-serif;font-weight:normal">号</span>1,1),<span style="display:inline-block;width:16px;text-align:center;font-family:'Liberation Sans', sans-serif;font-weight:normal">一</span><span style="display:inline-block;width:16px;text-align:center;font-family:'Liberation Sans', sans-serif;font-weight:normal">号</span>1,</span><span style="color:#0000ff">RGB</span><span style="color:#000">(0,0,255)),</span><span style="color:#0000ff">LINETHICK2</span><span style="color:#000">;</span></div>
<div class="a" style="left:236px;top:452px;line-height:18px;font-size:13.33px;font-family:'Liberation Mono', monospace;font-weight:bold;width:592px;overflow:hidden"><span style="color:#0000ff">VERTLINE</span><span style="color:#000">(</span><span style="color:#0000ff">MOD</span><span style="color:#000">(</span><span style="color:#0000ff">DAYBARPOS</span><span style="color:#000">,160)=1,</span><span style="color:#0000ff">COLORWHITE</span><span style="color:#000">),</span><span style="color:#0000ff">DOT</span><span style="color:#000">;</span></div>
<div class="a" style="left:236px;top:492px;line-height:18px;font-size:13.33px;font-family:'Liberation Mono', monospace;font-weight:bold;width:592px;overflow:hidden"><span style="color:#0000ff">DRAWCOLORKLINE</span><span style="color:#000">(</span><span style="color:#0000ff">BARSLAST</span><span style="color:#000">(&nbsp;&nbsp;</span><span style="color:#0000ff">C</span><span style="color:#000">&gt;</span><span style="color:#0000ff">MA</span><span style="color:#000">(</span><span style="color:#0000ff">C</span><span style="color:#000">,960)+2*</span><span style="color:#0000ff">MINPRICE</span><span style="color:#000">)&lt;</span><span style="color:#0000ff">BARSLAST</span><span style="color:#000">(</span><span style="color:#0000ff">C</span><span style="color:#000">&lt;</span><span style="color:#0000ff">MA</span><span style="color:#000">(</span><span style="color:#0000ff">C</span><span style="color:#000">,960)-2*</span><span style="color:#0000ff">MINPRICE</span></div>
<div class="a" style="left:236px;top:512px;line-height:18px;font-size:13.33px;font-family:'Liberation Mono', monospace;font-weight:bold;width:592px;overflow:hidden"><span style="color:#0000ff">DRAWCOLORKLINE</span><span style="color:#000">(</span><span style="color:#0000ff">BARSLAST</span><span style="color:#000">(&nbsp;&nbsp;</span><span style="color:#0000ff">C</span><span style="color:#000">&gt;</span><span style="color:#0000ff">MA</span><span style="color:#000">(</span><span style="color:#0000ff">C</span><span style="color:#000">,960)+2*</span><span style="color:#0000ff">MINPRICE</span><span style="color:#000">)&gt;</span><span style="color:#0000ff">BARSLAST</span><span style="color:#000">(</span><span style="color:#0000ff">C</span><span style="color:#000">&lt;</span><span style="color:#0000ff">MA</span><span style="color:#000">(</span><span style="color:#0000ff">C</span><span style="color:#000">,960)-2*</span><span style="color:#0000ff">MINPRICE</span></div>
<div class="a" style="left:203px;top:604px;width:66px;height:19px;border:1px solid #707070;border-radius:3px;background:linear-gradient(180deg,#f2f2f2 0%,#ebebeb 50%,#dddddd 51%,#cfcfcf 100%)"></div><div class="a" style="left:36px;width:400px;text-align:center;top:605.0px;line-height:17px;font-size:13px;color:#111;font-family:'Liberation Sans', sans-serif;font-weight:normal;">语法检测</div>
<div class="a" style="left:288px;top:604px;width:68px;height:19px;border:1px solid #707070;border-radius:3px;background:linear-gradient(180deg,#f2f2f2 0%,#ebebeb 50%,#dddddd 51%,#cfcfcf 100%)"></div><div class="a" style="left:122px;width:400px;text-align:center;top:605.0px;line-height:17px;font-size:13px;color:#111;font-family:'Liberation Sans', sans-serif;font-weight:normal;">插入函数</div>
<div class="a" style="left:358px;top:604px;width:50px;height:19px;border:1px solid #707070;border-radius:3px;background:linear-gradient(180deg,#f2f2f2 0%,#ebebeb 50%,#dddddd 51%,#cfcfcf 100%)"></div><div class="a" style="left:183px;width:400px;text-align:center;top:605.0px;line-height:17px;font-size:13px;color:#111;font-family:'Liberation Sans', sans-serif;font-weight:normal;">颜色</div>
<div class="a" style="left:410px;top:604px;width:50px;height:19px;border:1px solid #707070;border-radius:3px;background:linear-gradient(180deg,#f2f2f2 0%,#ebebeb 50%,#dddddd 51%,#cfcfcf 100%)"></div><div class="a" style="left:235px;width:400px;text-align:center;top:605.0px;line-height:17px;font-size:13px;color:#111;font-family:'Liberation Sans', sans-serif;font-weight:normal;">线型</div>
<div class="a" style="left:461px;top:604px;width:50px;height:19px;border:1px solid #707070;border-radius:3px;background:linear-gradient(180deg,#f2f2f2 0%,#ebebeb 50%,#dddddd 51%,#cfcfcf 100%)"></div><div class="a" style="left:286px;width:400px;text-align:center;top:605.0px;line-height:17px;font-size:13px;color:#111;font-family:'Liberation Sans', sans-serif;font-weight:normal;">图标</div>
<div class="a" style="left:512px;top:604px;width:49px;height:19px;border:1px solid #707070;border-radius:3px;background:linear-gradient(180deg,#f2f2f2 0%,#ebebeb 50%,#dddddd 51%,#cfcfcf 100%)"></div><div class="a" style="left:336px;width:400px;text-align:center;top:605.0px;line-height:17px;font-size:13px;color:#111;font-family:'Liberation Sans', sans-serif;font-weight:normal;">声音</div>
<div class="a" style="left:691px;top:604px;width:67px;height:19px;border:1px solid #707070;border-radius:3px;background:linear-gradient(180deg,#f2f2f2 0%,#ebebeb 50%,#dddddd 51%,#cfcfcf 100%)"></div><div class="a" style="left:524px;width:400px;text-align:center;top:605.0px;line-height:17px;font-size:13px;color:#111;font-family:'Liberation Sans', sans-serif;font-weight:normal;">确定</div>
<div class="a" style="left:766px;top:604px;width:67px;height:19px;border:1px solid #707070;border-radius:3px;background:linear-gradient(180deg,#f2f2f2 0%,#ebebeb 50%,#dddddd 51%,#cfcfcf 100%)"></div><div class="a" style="left:599px;width:400px;text-align:center;top:605.0px;line-height:17px;font-size:13px;color:#111;font-family:'Liberation Sans', sans-serif;font-weight:normal;">取消</div>
<svg width="1900" height="799" style="left:0;top:0"><rect x="231.5" y="434.5" width="393" height="39" fill="none" stroke="#ff00ff" stroke-width="3"/><path d="M615 415.4 L1164.2 279 L1163.6 274.8 L1182.2 279 L1167.4 290.2 L1165.6 287.3 L615.5 417.4 Z" fill="#f01ef0"/></svg>
</body></html>
